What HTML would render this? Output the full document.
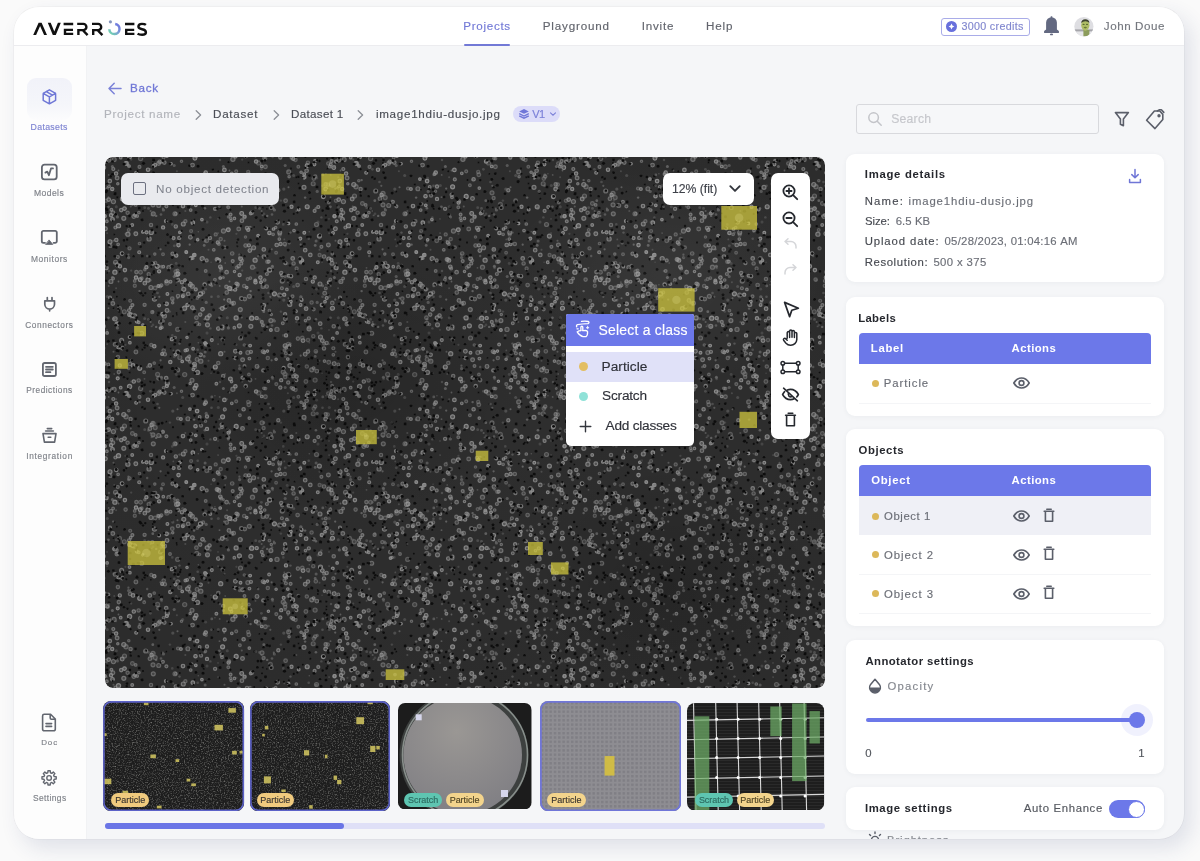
<!DOCTYPE html>
<html><head><meta charset="utf-8"><style>
html,body{margin:0;padding:0;}
body{width:1200px;height:861px;overflow:hidden;position:relative;background:#fafafa;font-family:"Liberation Sans",sans-serif;font-kerning:none;}
.t{position:absolute;white-space:nowrap;-webkit-text-stroke:0.15px currentColor;}
.card{position:absolute;left:14px;top:6.5px;width:1170px;height:832.5px;border-radius:25px;background:#f5f6f8;box-shadow:0 0 0 0.6px rgba(0,0,0,0.05),7px 9px 20px 1px rgba(40,60,115,0.12);overflow:hidden;}
#root{position:absolute;left:0;top:0;width:1200px;height:861px;filter:blur(0.35px);}
</style></head><body><div id="root">
<div class="card"></div>
<div style="position:absolute;left:14px;top:6.5px;width:1170px;height:39px;background:#fff;border-radius:25px 25px 0 0;"></div>
<div style="position:absolute;left:14px;top:45px;width:1170px;height:1px;background:#ececef;"></div>
<div style="position:absolute;left:14px;top:46px;width:72px;height:793px;background:#fdfdfd;border-radius:0 0 0 25px;"></div>
<div style="position:absolute;left:86px;top:46px;width:1px;height:793px;background:#f1f2f4;"></div>
<svg style="position:absolute;left:0;top:0" width="160" height="45" viewBox="0 0 160 45">
<defs><linearGradient id="lg" x1="0" y1="1" x2="1" y2="0"><stop offset="0" stop-color="#6fdcaa"/><stop offset="0.55" stop-color="#7d9ad8"/><stop offset="1" stop-color="#6b6ee0"/></linearGradient></defs>
<g fill="#111">
<path d="M33.2 35.1 L38.6 22.8 H41.6 L47 35.1 H44.1 L40.1 25.9 L36.1 35.1Z"/>
<path d="M47.8 22.8 H50.7 L54.3 31.6 L57.9 22.8 H60.8 L55.8 35.1 H52.8Z"/>
</g>
<g fill="none" stroke="#111" stroke-width="2.4" stroke-linejoin="miter">
<path d="M63.6 24 H73.2 M73 29.9 H65 V33.9 H73.2"/>
<path d="M77.2 23.9 H83.3 A3.1 3.1 0 0 1 83.3 30.1 H78.4 V35.1 M82.6 30 L87.6 35.1"/>
<path d="M92 23.9 H98.1 A3.1 3.1 0 0 1 98.1 30.1 H93.2 V35.1 M97.4 30 L102.4 35.1"/>
<path d="M125 24 H134.4 M134.2 29.9 H126.2 V33.9 H134.4"/>
<path d="M145.9 24.9 C145 24.1 143.6 23.9 141.9 23.9 C139.6 23.9 138.4 24.9 138.4 26.6 C138.4 28.5 140.2 28.9 142.1 29.2 C144.4 29.6 145.9 30.3 145.9 32.2 C145.9 33.9 144.4 34.8 142.1 34.8 C140.1 34.8 138.6 34.4 137.6 33.6"/>
</g>
<path d="M115.2 23.9 A5.1 5.1 0 1 1 109.3 29.2" fill="none" stroke="url(#lg)" stroke-width="2.5"/>
<circle cx="110.4" cy="21.8" r="1.6" fill="#8595bd"/>
</svg>
<div class="t" style="left:463.35px;top:18px;font-size:11.63px;line-height:15px;letter-spacing:0.681px;color:#7279d6;font-weight:400;">Projects</div>
<div style="position:absolute;left:464px;top:43.5px;width:46px;height:2px;background:#7279d6;border-radius:1px;"></div>
<div class="t" style="left:542.75px;top:18px;font-size:11.63px;line-height:15px;letter-spacing:0.831px;color:#62656d;font-weight:400;">Playground</div>
<div class="t" style="left:641.63px;top:18px;font-size:11.63px;line-height:15px;letter-spacing:0.819px;color:#62656d;font-weight:400;">Invite</div>
<div class="t" style="left:706.05px;top:18px;font-size:11.63px;line-height:15px;letter-spacing:0.843px;color:#62656d;font-weight:400;">Help</div>
<div style="position:absolute;left:940.5px;top:17.5px;width:87px;height:16px;border:1px solid #a9ace8;border-radius:3px;"></div>
<svg style="position:absolute;left:945px;top:20px" width="13" height="13" viewBox="0 0 13 13"><circle cx="6.5" cy="6.5" r="5.5" fill="#6870dc"/><path d="M6.5 3.6 Q6.9 6.1 9.4 6.5 Q6.9 6.9 6.5 9.4 Q6.1 6.9 3.6 6.5 Q6.1 6.1 6.5 3.6Z" fill="#fff"/></svg>
<div class="t" style="left:961.39px;top:20px;font-size:10.76px;line-height:13px;letter-spacing:0.309px;color:#8187cf;font-weight:400;">3000 credits</div>
<svg style="position:absolute;left:1043px;top:16px" width="17" height="21" viewBox="0 0 17 21"><path d="M3.1 13.6 V6.6 A5.4 5.4 0 0 1 13.9 6.6 V13.6 L15.9 15 V16.9 H1.1 V15Z" fill="#636981"/><ellipse cx="8.5" cy="18.4" rx="1.6" ry="0.9" fill="#636981"/><rect x="7.6" y="0.3" width="1.8" height="1.6" rx="0.5" fill="#636981"/></svg>
<svg style="position:absolute;left:1074.2px;top:16.7px" width="20" height="20" viewBox="0 0 20 20"><defs><clipPath id="av"><circle cx="9.9" cy="9.6" r="9.6"/></clipPath></defs><g clip-path="url(#av)"><rect width="20" height="20" fill="#dedee2"/><rect y="12.4" width="20" height="2.2" fill="#a5a5aa"/><rect y="14.6" width="20" height="6" fill="#e6e6e9"/><path d="M9.4 13 H15.4 V20 H9.4Z" fill="#8c9c5c"/><ellipse cx="11.3" cy="8.2" rx="4.1" ry="5.5" fill="#aebd66"/><path d="M7.2 6 Q7.6 2.2 11.3 2.3 Q15.2 2.4 15.4 6 Q13.8 4.2 11.3 4.3 Q8.8 4.3 7.2 6Z" fill="#3f4530"/><ellipse cx="9.6" cy="7.4" rx="1.1" ry="0.7" fill="#5b6a30"/><ellipse cx="13" cy="7.4" rx="1.1" ry="0.7" fill="#5b6a30"/><ellipse cx="11.3" cy="10.6" rx="1.6" ry="0.8" fill="#6a7a34"/></g></svg>
<div class="t" style="left:1103.82px;top:18px;font-size:11.63px;line-height:15px;letter-spacing:0.557px;color:#74777e;font-weight:400;">John Doue</div>
<div style="position:absolute;left:27px;top:78px;width:45px;height:42px;border-radius:9px;background:linear-gradient(#f1f2f9,#f5f6fa 65%,#fcfcfd);"></div>
<svg style="position:absolute;left:40px;top:87px" width="19" height="20" viewBox="0 0 19 20"><g fill="none" stroke="#6f77d6" stroke-width="1.5" stroke-linecap="round" stroke-linejoin="round"><path d="M9.4 2.8 L15.6 6.3 V13.3 L9.4 16.8 L3.2 13.3 V6.3Z M3.2 6.3 L9.4 9.8 L15.6 6.3 M9.4 9.8 V16.8 M6.3 4.6 L12.5 8.1"/></g></svg>
<div class="t" style="left:30.58px;top:122px;font-size:8.72px;line-height:11px;letter-spacing:0.331px;color:#7e84d2;font-weight:400;">Datasets</div>
<svg style="position:absolute;left:39px;top:162px" width="20" height="20" viewBox="0 0 20 20"><g fill="none" stroke="#62666f" stroke-width="1.8" stroke-linecap="round" stroke-linejoin="round"><rect x="2.9" y="2.6" width="14.8" height="14.8" rx="2.6"/><path d="M6.4 10.6 L8.3 9.6 L9.9 13.2 L12 6.4 H14"/></g></svg>
<div class="t" style="left:34.00px;top:188px;font-size:8.58px;line-height:11px;letter-spacing:0.414px;color:#7f8289;font-weight:400;">Models</div>
<svg style="position:absolute;left:39px;top:228px" width="20" height="19" viewBox="0 0 20 19"><g fill="none" stroke="#62666f" stroke-width="1.8" stroke-linecap="round" stroke-linejoin="round"><path d="M6 14.8 H4.4 A1.6 1.6 0 0 1 2.8 13.2 V4.4 A1.6 1.6 0 0 1 4.4 2.8 H16.2 A1.6 1.6 0 0 1 17.8 4.4 V13.2 A1.6 1.6 0 0 1 16.2 14.8 H14.6"/><path d="M10.3 12.2 L13.8 16.4 H6.8Z" fill="#62666f" stroke-width="0.8"/></g></svg>
<div class="t" style="left:31.01px;top:254px;font-size:8.43px;line-height:11px;letter-spacing:0.567px;color:#7f8289;font-weight:400;">Monitors</div>
<svg style="position:absolute;left:41px;top:295px" width="17" height="17" viewBox="0 0 17 17"><g fill="none" stroke="#62666f" stroke-width="1.7" stroke-linecap="round" stroke-linejoin="round"><path d="M6.3 2.5 V5.8 M11 2.5 V5.8 M3.8 5.8 H13.5 V9.3 A4.85 4.85 0 0 1 8.65 14.1 A4.85 4.85 0 0 1 3.8 9.3Z M8.65 14.1 V15.8"/></g></svg>
<div class="t" style="left:25.18px;top:321px;font-size:8.28px;line-height:10px;letter-spacing:0.617px;color:#7f8289;font-weight:400;">Connectors</div>
<svg style="position:absolute;left:40px;top:360px" width="19" height="19" viewBox="0 0 19 19"><g fill="none" stroke="#62666f" stroke-width="1.8" stroke-linecap="round" stroke-linejoin="round"><rect x="2.9" y="3" width="13" height="13" rx="1.8"/><path d="M6 6.8 H12.8 M6 9.5 H12.8 M6 12.2 H10.4"/></g></svg>
<div class="t" style="left:26.32px;top:386px;font-size:8.28px;line-height:10px;letter-spacing:0.490px;color:#7f8289;font-weight:400;">Predictions</div>
<svg style="position:absolute;left:40px;top:426px" width="19" height="19" viewBox="0 0 19 19"><g fill="none" stroke="#62666f" stroke-width="1.6" stroke-linecap="round" stroke-linejoin="round"><path d="M7.3 2.6 H11.7 M5.6 5 H13.4"/><path d="M3 7.6 H16 L14.6 16.1 H4.4Z"/><path d="M8.2 11.2 H10.8"/></g></svg>
<div class="t" style="left:26.24px;top:452px;font-size:8.28px;line-height:10px;letter-spacing:0.695px;color:#7f8289;font-weight:400;">Integration</div>
<svg style="position:absolute;left:40px;top:711px" width="19" height="22" viewBox="0 0 19 22"><g fill="none" stroke="#62666f" stroke-width="1.6" stroke-linecap="round" stroke-linejoin="round"><path d="M4.2 3.3 H10.6 L15.3 8 V18.2 A1.6 1.6 0 0 1 13.7 19.8 H4.2 A1.6 1.6 0 0 1 2.6 18.2 V4.9 A1.6 1.6 0 0 1 4.2 3.3Z M10.2 3.5 V7 A1.2 1.2 0 0 0 11.4 8.2 H15"/><path d="M6 12.6 H11.6 M6 15.4 H11.6"/></g></svg>
<div class="t" style="left:41.14px;top:738px;font-size:7.99px;line-height:10px;letter-spacing:0.925px;color:#7f8289;font-weight:400;">Doc</div>
<svg style="position:absolute;left:40px;top:769px" width="19" height="18" viewBox="0 0 19 18"><g fill="none" stroke="#62666f" stroke-width="1.4" stroke-linecap="round" stroke-linejoin="round"><path d="M14.24 7.62 L16.21 7.77 L16.21 10.03 L14.24 10.18 L13.64 11.63 L14.92 13.13 L13.33 14.72 L11.83 13.44 L10.38 14.04 L10.23 16.01 L7.97 16.01 L7.82 14.04 L6.37 13.44 L4.87 14.72 L3.28 13.13 L4.56 11.63 L3.96 10.18 L1.99 10.03 L1.99 7.77 L3.96 7.62 L4.56 6.17 L3.28 4.67 L4.87 3.08 L6.37 4.36 L7.82 3.76 L7.97 1.79 L10.23 1.79 L10.38 3.76 L11.83 4.36 L13.33 3.08 L14.92 4.67 L13.64 6.17Z"/><circle cx="9.1" cy="8.9" r="2.3"/></g></svg>
<div class="t" style="left:32.92px;top:793px;font-size:8.43px;line-height:11px;letter-spacing:0.404px;color:#7f8289;font-weight:400;">Settings</div>
<svg style="position:absolute;left:106px;top:81px" width="17" height="15" viewBox="0 0 17 15"><path d="M15 7.5 H3 M8.2 2.3 L3 7.5 L8.2 12.7" fill="none" stroke="#7b82d8" stroke-width="1.5" stroke-linecap="round" stroke-linejoin="round"/></svg>
<div class="t" style="left:130.05px;top:80px;font-size:11.63px;line-height:15px;letter-spacing:0.695px;color:#7077d6;font-weight:400;-webkit-text-stroke:0.3px #7077d6">Back</div>
<div class="t" style="left:104.05px;top:106px;font-size:11.63px;line-height:15px;letter-spacing:0.697px;color:#b3b5bb;font-weight:400;">Project name</div>
<svg style="position:absolute;left:193.5px;top:109px" width="9" height="12" viewBox="0 0 9 12"><path d="M2.2 1.8 L6.6 6 L2.2 10.2" fill="none" stroke="#8c8f96" stroke-width="1.3" stroke-linecap="round" stroke-linejoin="round"/></svg>
<svg style="position:absolute;left:271.5px;top:109px" width="9" height="12" viewBox="0 0 9 12"><path d="M2.2 1.8 L6.6 6 L2.2 10.2" fill="none" stroke="#8c8f96" stroke-width="1.3" stroke-linecap="round" stroke-linejoin="round"/></svg>
<svg style="position:absolute;left:356px;top:109px" width="9" height="12" viewBox="0 0 9 12"><path d="M2.2 1.8 L6.6 6 L2.2 10.2" fill="none" stroke="#8c8f96" stroke-width="1.3" stroke-linecap="round" stroke-linejoin="round"/></svg>
<div class="t" style="left:213.05px;top:106px;font-size:11.63px;line-height:15px;letter-spacing:0.711px;color:#4b4e56;font-weight:400;">Dataset</div>
<div class="t" style="left:291.05px;top:106px;font-size:11.63px;line-height:15px;letter-spacing:0.306px;color:#4b4e56;font-weight:400;">Dataset 1</div>
<div class="t" style="left:375.92px;top:106px;font-size:11.63px;line-height:15px;letter-spacing:0.715px;color:#4b4e56;font-weight:400;">image1hdiu-dusjo.jpg</div>
<div style="position:absolute;left:512.7px;top:106px;width:47.5px;height:16px;background:#dcdcf9;border-radius:8px;"></div>
<svg style="position:absolute;left:518px;top:108px" width="12" height="12" viewBox="0 0 12 12"><path d="M6 1 L10.8 3.4 L6 5.8 L1.2 3.4Z" fill="#7077d8"/><path d="M1.2 5.6 L6 8 L10.8 5.6 M1.2 7.8 L6 10.2 L10.8 7.8" fill="none" stroke="#7077d8" stroke-width="1.3"/></svg>
<div class="t" style="left:532.15px;top:107px;font-size:11.05px;line-height:14px;letter-spacing:0.000px;color:#7b80d8;font-weight:400;letter-spacing:-0.6px">V1</div>
<svg style="position:absolute;left:549px;top:110px" width="8" height="8" viewBox="0 0 8 8"><path d="M1.5 2.8 L4 5.2 L6.5 2.8" fill="none" stroke="#7b80d8" stroke-width="1.1" stroke-linecap="round"/></svg>
<svg style="position:absolute;left:105px;top:157px;border-radius:8px;" width="720" height="531" viewBox="0 0 720 531"><defs><pattern id="sp1" width="230" height="230" patternUnits="userSpaceOnUse"><circle cx="30.9" cy="194.9" r="1.9" stroke="#949494" stroke-opacity="0.54" stroke-width="1.15" fill="#949494" fill-opacity="0.24"/><circle cx="114.0" cy="103.4" r="1.8" stroke="#949494" stroke-opacity="0.83" stroke-width="1.15" fill="#949494" fill-opacity="0.38"/><circle cx="21.6" cy="6.5" r="2.0" stroke="#949494" stroke-opacity="0.64" stroke-width="1.15" fill="#949494" fill-opacity="0.29"/><circle cx="175.3" cy="0.5" r="1.6" stroke="#949494" stroke-opacity="0.80" stroke-width="1.15" fill="#949494" fill-opacity="0.36"/><circle cx="175.3" cy="230.5" r="1.6" stroke="#949494" stroke-opacity="0.80" stroke-width="1.15" fill="#949494" fill-opacity="0.36"/><circle cx="52.6" cy="217.4" r="2.0" stroke="#949494" stroke-opacity="0.42" stroke-width="1.15" fill="#949494" fill-opacity="0.19"/><circle cx="5.9" cy="124.5" r="2.0" stroke="#949494" stroke-opacity="0.61" stroke-width="1.15" fill="#949494" fill-opacity="0.27"/><circle cx="49.8" cy="97.1" r="1.2" stroke="#949494" stroke-opacity="0.52" stroke-width="1.15" fill="#949494" fill-opacity="0.23"/><circle cx="100.7" cy="114.0" r="1.4" stroke="#949494" stroke-opacity="0.53" stroke-width="1.15" fill="#949494" fill-opacity="0.24"/><circle cx="50.3" cy="105.7" r="1.5" stroke="#949494" stroke-opacity="0.41" stroke-width="1.15" fill="#949494" fill-opacity="0.19"/><circle cx="192.6" cy="128.0" r="1.8" stroke="#949494" stroke-opacity="0.50" stroke-width="1.15" fill="#949494" fill-opacity="0.23"/><circle cx="228.3" cy="197.8" r="1.3" stroke="#949494" stroke-opacity="0.58" stroke-width="1.15" fill="#949494" fill-opacity="0.26"/><circle cx="-1.7" cy="197.8" r="1.3" stroke="#949494" stroke-opacity="0.58" stroke-width="1.15" fill="#949494" fill-opacity="0.26"/><circle cx="165.9" cy="163.6" r="2.0" stroke="#949494" stroke-opacity="0.63" stroke-width="1.15" fill="#949494" fill-opacity="0.28"/><circle cx="190.9" cy="154.2" r="1.5" stroke="#949494" stroke-opacity="0.72" stroke-width="1.15" fill="#949494" fill-opacity="0.33"/><circle cx="203.0" cy="194.6" r="1.7" stroke="#949494" stroke-opacity="0.72" stroke-width="1.15" fill="#949494" fill-opacity="0.33"/><circle cx="7.9" cy="55.8" r="1.9" stroke="#949494" stroke-opacity="0.63" stroke-width="1.15" fill="#949494" fill-opacity="0.28"/><circle cx="39.8" cy="126.2" r="1.8" stroke="#949494" stroke-opacity="0.77" stroke-width="1.15" fill="#949494" fill-opacity="0.35"/><circle cx="86.2" cy="101.0" r="1.7" stroke="#949494" stroke-opacity="0.83" stroke-width="1.15" fill="#949494" fill-opacity="0.37"/><circle cx="119.8" cy="90.4" r="1.6" stroke="#949494" stroke-opacity="0.42" stroke-width="1.15" fill="#949494" fill-opacity="0.19"/><circle cx="10.0" cy="161.8" r="2.1" stroke="#949494" stroke-opacity="0.73" stroke-width="1.15" fill="#949494" fill-opacity="0.33"/><circle cx="90.5" cy="39.2" r="1.7" stroke="#949494" stroke-opacity="0.94" stroke-width="1.15" fill="#949494" fill-opacity="0.42"/><circle cx="177.2" cy="124.1" r="2.0" stroke="#949494" stroke-opacity="0.53" stroke-width="1.15" fill="#949494" fill-opacity="0.24"/><circle cx="118.2" cy="219.1" r="1.7" stroke="#949494" stroke-opacity="0.65" stroke-width="1.15" fill="#949494" fill-opacity="0.29"/><circle cx="61.9" cy="126.0" r="2.1" stroke="#949494" stroke-opacity="0.40" stroke-width="1.15" fill="#949494" fill-opacity="0.18"/><circle cx="180.2" cy="188.7" r="2.0" stroke="#949494" stroke-opacity="0.81" stroke-width="1.15" fill="#949494" fill-opacity="0.36"/><circle cx="186.1" cy="119.3" r="1.7" stroke="#949494" stroke-opacity="0.63" stroke-width="1.15" fill="#949494" fill-opacity="0.29"/><circle cx="12.9" cy="200.1" r="1.7" stroke="#949494" stroke-opacity="0.51" stroke-width="1.15" fill="#949494" fill-opacity="0.23"/><circle cx="116.1" cy="111.5" r="1.5" stroke="#949494" stroke-opacity="0.59" stroke-width="1.15" fill="#949494" fill-opacity="0.27"/><circle cx="123.9" cy="143.4" r="1.8" stroke="#949494" stroke-opacity="0.65" stroke-width="1.15" fill="#949494" fill-opacity="0.29"/><circle cx="6.4" cy="52.8" r="1.4" stroke="#949494" stroke-opacity="0.72" stroke-width="1.15" fill="#949494" fill-opacity="0.32"/><circle cx="198.0" cy="183.6" r="1.9" stroke="#949494" stroke-opacity="0.85" stroke-width="1.15" fill="#949494" fill-opacity="0.38"/><circle cx="58.7" cy="193.6" r="1.8" stroke="#949494" stroke-opacity="0.45" stroke-width="1.15" fill="#949494" fill-opacity="0.20"/><circle cx="3.8" cy="3.3" r="1.9" stroke="#949494" stroke-opacity="0.54" stroke-width="1.15" fill="#949494" fill-opacity="0.24"/><circle cx="3.8" cy="233.3" r="1.9" stroke="#949494" stroke-opacity="0.54" stroke-width="1.15" fill="#949494" fill-opacity="0.24"/><circle cx="233.8" cy="3.3" r="1.9" stroke="#949494" stroke-opacity="0.54" stroke-width="1.15" fill="#949494" fill-opacity="0.24"/><circle cx="233.8" cy="233.3" r="1.9" stroke="#949494" stroke-opacity="0.54" stroke-width="1.15" fill="#949494" fill-opacity="0.24"/><circle cx="25.2" cy="143.7" r="1.5" stroke="#949494" stroke-opacity="0.44" stroke-width="1.15" fill="#949494" fill-opacity="0.20"/><circle cx="36.7" cy="121.3" r="1.4" stroke="#949494" stroke-opacity="0.55" stroke-width="1.15" fill="#949494" fill-opacity="0.25"/><circle cx="163.7" cy="104.6" r="1.5" stroke="#949494" stroke-opacity="0.66" stroke-width="1.15" fill="#949494" fill-opacity="0.30"/><circle cx="5.4" cy="88.9" r="1.6" stroke="#949494" stroke-opacity="0.50" stroke-width="1.15" fill="#949494" fill-opacity="0.23"/><circle cx="25.0" cy="207.0" r="1.7" stroke="#949494" stroke-opacity="0.52" stroke-width="1.15" fill="#949494" fill-opacity="0.23"/><circle cx="139.3" cy="187.9" r="1.2" stroke="#949494" stroke-opacity="0.41" stroke-width="1.15" fill="#949494" fill-opacity="0.18"/><circle cx="33.7" cy="165.3" r="1.3" stroke="#949494" stroke-opacity="0.79" stroke-width="1.15" fill="#949494" fill-opacity="0.35"/><circle cx="156.0" cy="125.3" r="1.4" stroke="#949494" stroke-opacity="0.94" stroke-width="1.15" fill="#949494" fill-opacity="0.42"/><circle cx="183.5" cy="118.8" r="1.4" stroke="#949494" stroke-opacity="0.76" stroke-width="1.15" fill="#949494" fill-opacity="0.34"/><circle cx="90.8" cy="132.4" r="1.5" stroke="#949494" stroke-opacity="0.75" stroke-width="1.15" fill="#949494" fill-opacity="0.34"/><circle cx="13.5" cy="68.7" r="2.1" stroke="#949494" stroke-opacity="0.88" stroke-width="1.15" fill="#949494" fill-opacity="0.40"/><circle cx="70.5" cy="197.5" r="1.5" stroke="#949494" stroke-opacity="0.92" stroke-width="1.15" fill="#949494" fill-opacity="0.41"/><circle cx="171.1" cy="95.7" r="1.4" stroke="#949494" stroke-opacity="0.40" stroke-width="1.15" fill="#949494" fill-opacity="0.18"/><circle cx="202.1" cy="8.7" r="1.9" stroke="#949494" stroke-opacity="0.93" stroke-width="1.15" fill="#949494" fill-opacity="0.42"/><circle cx="131.2" cy="39.4" r="2.0" stroke="#949494" stroke-opacity="0.94" stroke-width="1.15" fill="#949494" fill-opacity="0.42"/><circle cx="161.9" cy="117.0" r="1.5" stroke="#949494" stroke-opacity="0.59" stroke-width="1.15" fill="#949494" fill-opacity="0.27"/><circle cx="47.3" cy="155.1" r="1.6" stroke="#949494" stroke-opacity="0.51" stroke-width="1.15" fill="#949494" fill-opacity="0.23"/><circle cx="24.0" cy="153.2" r="1.5" stroke="#949494" stroke-opacity="0.67" stroke-width="1.15" fill="#949494" fill-opacity="0.30"/><circle cx="74.8" cy="200.5" r="2.0" stroke="#949494" stroke-opacity="0.41" stroke-width="1.15" fill="#949494" fill-opacity="0.18"/><circle cx="46.2" cy="75.4" r="2.1" stroke="#949494" stroke-opacity="0.83" stroke-width="1.15" fill="#949494" fill-opacity="0.37"/><circle cx="78.0" cy="49.0" r="1.8" stroke="#949494" stroke-opacity="0.86" stroke-width="1.15" fill="#949494" fill-opacity="0.39"/><circle cx="214.4" cy="79.1" r="2.0" stroke="#949494" stroke-opacity="0.78" stroke-width="1.15" fill="#949494" fill-opacity="0.35"/><circle cx="111.4" cy="226.7" r="1.4" stroke="#949494" stroke-opacity="0.80" stroke-width="1.15" fill="#949494" fill-opacity="0.36"/><circle cx="111.4" cy="-3.3" r="1.4" stroke="#949494" stroke-opacity="0.80" stroke-width="1.15" fill="#949494" fill-opacity="0.36"/><circle cx="19.5" cy="39.0" r="2.0" stroke="#949494" stroke-opacity="0.52" stroke-width="1.15" fill="#949494" fill-opacity="0.23"/><circle cx="174.6" cy="138.0" r="2.0" stroke="#949494" stroke-opacity="0.60" stroke-width="1.15" fill="#949494" fill-opacity="0.27"/><circle cx="78.3" cy="67.0" r="2.0" stroke="#949494" stroke-opacity="0.73" stroke-width="1.15" fill="#949494" fill-opacity="0.33"/><circle cx="219.5" cy="204.1" r="1.3" stroke="#949494" stroke-opacity="0.70" stroke-width="1.15" fill="#949494" fill-opacity="0.32"/><circle cx="24.0" cy="9.0" r="1.3" stroke="#949494" stroke-opacity="0.88" stroke-width="1.15" fill="#949494" fill-opacity="0.39"/><circle cx="181.3" cy="190.6" r="1.5" stroke="#949494" stroke-opacity="0.74" stroke-width="1.15" fill="#949494" fill-opacity="0.33"/><circle cx="179.8" cy="86.9" r="1.7" stroke="#949494" stroke-opacity="0.52" stroke-width="1.15" fill="#949494" fill-opacity="0.24"/><circle cx="18.8" cy="61.3" r="2.0" stroke="#949494" stroke-opacity="0.71" stroke-width="1.15" fill="#949494" fill-opacity="0.32"/><circle cx="212.8" cy="105.3" r="1.4" stroke="#949494" stroke-opacity="0.83" stroke-width="1.15" fill="#949494" fill-opacity="0.37"/><circle cx="190.4" cy="2.8" r="1.8" stroke="#949494" stroke-opacity="0.45" stroke-width="1.15" fill="#949494" fill-opacity="0.20"/><circle cx="190.4" cy="232.8" r="1.8" stroke="#949494" stroke-opacity="0.45" stroke-width="1.15" fill="#949494" fill-opacity="0.20"/><circle cx="26.5" cy="203.6" r="1.2" stroke="#949494" stroke-opacity="0.53" stroke-width="1.15" fill="#949494" fill-opacity="0.24"/><circle cx="227.3" cy="96.8" r="1.3" stroke="#949494" stroke-opacity="0.49" stroke-width="1.15" fill="#949494" fill-opacity="0.22"/><circle cx="-2.7" cy="96.8" r="1.3" stroke="#949494" stroke-opacity="0.49" stroke-width="1.15" fill="#949494" fill-opacity="0.22"/><circle cx="55.5" cy="171.1" r="1.3" stroke="#949494" stroke-opacity="0.90" stroke-width="1.15" fill="#949494" fill-opacity="0.41"/><circle cx="87.0" cy="223.2" r="2.0" stroke="#949494" stroke-opacity="0.56" stroke-width="1.15" fill="#949494" fill-opacity="0.25"/><circle cx="58.3" cy="109.7" r="1.3" stroke="#949494" stroke-opacity="0.76" stroke-width="1.15" fill="#949494" fill-opacity="0.34"/><circle cx="9.1" cy="2.4" r="2.1" stroke="#949494" stroke-opacity="0.56" stroke-width="1.15" fill="#949494" fill-opacity="0.25"/><circle cx="9.1" cy="232.4" r="2.1" stroke="#949494" stroke-opacity="0.56" stroke-width="1.15" fill="#949494" fill-opacity="0.25"/><circle cx="137.2" cy="103.5" r="1.5" stroke="#949494" stroke-opacity="0.43" stroke-width="1.15" fill="#949494" fill-opacity="0.20"/><circle cx="210.1" cy="223.1" r="2.1" stroke="#949494" stroke-opacity="0.46" stroke-width="1.15" fill="#949494" fill-opacity="0.21"/><circle cx="49.5" cy="142.1" r="2.1" stroke="#949494" stroke-opacity="0.70" stroke-width="1.15" fill="#949494" fill-opacity="0.31"/><circle cx="158.3" cy="152.2" r="1.4" stroke="#949494" stroke-opacity="0.70" stroke-width="1.15" fill="#949494" fill-opacity="0.31"/><circle cx="70.7" cy="56.7" r="1.3" stroke="#949494" stroke-opacity="0.55" stroke-width="1.15" fill="#949494" fill-opacity="0.25"/><circle cx="226.2" cy="103.0" r="1.8" stroke="#949494" stroke-opacity="0.75" stroke-width="1.15" fill="#949494" fill-opacity="0.34"/><circle cx="216.4" cy="89.8" r="1.5" stroke="#949494" stroke-opacity="0.58" stroke-width="1.15" fill="#949494" fill-opacity="0.26"/><circle cx="72.8" cy="194.8" r="2.0" stroke="#949494" stroke-opacity="0.57" stroke-width="1.15" fill="#949494" fill-opacity="0.25"/><circle cx="76.9" cy="125.2" r="1.7" stroke="#949494" stroke-opacity="0.73" stroke-width="1.15" fill="#949494" fill-opacity="0.33"/><circle cx="56.4" cy="4.7" r="1.4" stroke="#949494" stroke-opacity="0.44" stroke-width="1.15" fill="#949494" fill-opacity="0.20"/><circle cx="126.8" cy="16.3" r="1.3" stroke="#949494" stroke-opacity="0.75" stroke-width="1.15" fill="#949494" fill-opacity="0.34"/><circle cx="66.9" cy="182.2" r="1.6" stroke="#949494" stroke-opacity="0.87" stroke-width="1.15" fill="#949494" fill-opacity="0.39"/><circle cx="35.5" cy="115.3" r="1.9" stroke="#949494" stroke-opacity="0.44" stroke-width="1.15" fill="#949494" fill-opacity="0.20"/><circle cx="218.3" cy="39.8" r="1.9" stroke="#949494" stroke-opacity="0.94" stroke-width="1.15" fill="#949494" fill-opacity="0.42"/><circle cx="189.0" cy="73.6" r="1.3" stroke="#949494" stroke-opacity="0.68" stroke-width="1.15" fill="#949494" fill-opacity="0.31"/><circle cx="211.5" cy="67.5" r="2.0" stroke="#949494" stroke-opacity="0.48" stroke-width="1.15" fill="#949494" fill-opacity="0.22"/><circle cx="209.4" cy="7.3" r="1.5" stroke="#949494" stroke-opacity="0.90" stroke-width="1.15" fill="#949494" fill-opacity="0.40"/><circle cx="184.9" cy="208.6" r="2.0" stroke="#949494" stroke-opacity="0.81" stroke-width="1.15" fill="#949494" fill-opacity="0.36"/><circle cx="158.6" cy="41.0" r="1.6" stroke="#949494" stroke-opacity="0.49" stroke-width="1.15" fill="#949494" fill-opacity="0.22"/><circle cx="164.4" cy="153.6" r="1.4" stroke="#949494" stroke-opacity="0.44" stroke-width="1.15" fill="#949494" fill-opacity="0.20"/><circle cx="221.6" cy="185.9" r="1.7" stroke="#949494" stroke-opacity="0.70" stroke-width="1.15" fill="#949494" fill-opacity="0.31"/><circle cx="195.8" cy="104.3" r="1.6" stroke="#949494" stroke-opacity="0.59" stroke-width="1.15" fill="#949494" fill-opacity="0.26"/><circle cx="59.3" cy="5.6" r="1.8" stroke="#949494" stroke-opacity="0.63" stroke-width="1.15" fill="#949494" fill-opacity="0.28"/><circle cx="131.2" cy="14.3" r="1.5" stroke="#949494" stroke-opacity="0.48" stroke-width="1.15" fill="#949494" fill-opacity="0.21"/><circle cx="28.8" cy="59.6" r="1.9" stroke="#949494" stroke-opacity="0.62" stroke-width="1.15" fill="#949494" fill-opacity="0.28"/><circle cx="92.2" cy="140.9" r="1.4" stroke="#949494" stroke-opacity="0.40" stroke-width="1.15" fill="#949494" fill-opacity="0.18"/><circle cx="121.6" cy="115.2" r="1.8" stroke="#949494" stroke-opacity="0.64" stroke-width="1.15" fill="#949494" fill-opacity="0.29"/><circle cx="157.9" cy="168.2" r="1.4" stroke="#949494" stroke-opacity="0.67" stroke-width="1.15" fill="#949494" fill-opacity="0.30"/><circle cx="110.1" cy="51.8" r="1.6" stroke="#949494" stroke-opacity="0.71" stroke-width="1.15" fill="#949494" fill-opacity="0.32"/><circle cx="208.6" cy="211.1" r="1.4" stroke="#949494" stroke-opacity="0.76" stroke-width="1.15" fill="#949494" fill-opacity="0.34"/><circle cx="11.1" cy="16.5" r="1.7" stroke="#949494" stroke-opacity="0.88" stroke-width="1.15" fill="#949494" fill-opacity="0.40"/><circle cx="36.7" cy="176.2" r="2.0" stroke="#949494" stroke-opacity="0.57" stroke-width="1.15" fill="#949494" fill-opacity="0.26"/><circle cx="159.3" cy="195.3" r="1.5" stroke="#949494" stroke-opacity="0.79" stroke-width="1.15" fill="#949494" fill-opacity="0.35"/><circle cx="169.4" cy="136.8" r="2.0" stroke="#949494" stroke-opacity="0.89" stroke-width="1.15" fill="#949494" fill-opacity="0.40"/><circle cx="220.8" cy="131.4" r="1.4" stroke="#949494" stroke-opacity="0.54" stroke-width="1.15" fill="#949494" fill-opacity="0.24"/><circle cx="50.1" cy="131.0" r="1.9" stroke="#949494" stroke-opacity="0.43" stroke-width="1.15" fill="#949494" fill-opacity="0.19"/><circle cx="156.8" cy="164.9" r="1.5" stroke="#949494" stroke-opacity="0.68" stroke-width="1.15" fill="#949494" fill-opacity="0.31"/><circle cx="37.9" cy="167.9" r="1.2" stroke="#949494" stroke-opacity="0.94" stroke-width="1.15" fill="#949494" fill-opacity="0.42"/><circle cx="185.8" cy="144.5" r="1.4" stroke="#949494" stroke-opacity="0.90" stroke-width="1.15" fill="#949494" fill-opacity="0.41"/><circle cx="220.7" cy="32.0" r="1.9" stroke="#949494" stroke-opacity="0.86" stroke-width="1.15" fill="#949494" fill-opacity="0.39"/><circle cx="151.7" cy="161.1" r="1.6" stroke="#949494" stroke-opacity="0.91" stroke-width="1.15" fill="#949494" fill-opacity="0.41"/><circle cx="223.4" cy="87.9" r="1.9" stroke="#949494" stroke-opacity="0.64" stroke-width="1.15" fill="#949494" fill-opacity="0.29"/><circle cx="37.9" cy="74.9" r="1.3" stroke="#949494" stroke-opacity="0.90" stroke-width="1.15" fill="#949494" fill-opacity="0.40"/><circle cx="220.7" cy="27.4" r="1.7" stroke="#949494" stroke-opacity="0.62" stroke-width="1.15" fill="#949494" fill-opacity="0.28"/><circle cx="27.2" cy="68.0" r="1.4" stroke="#949494" stroke-opacity="0.81" stroke-width="1.15" fill="#949494" fill-opacity="0.37"/><circle cx="0.9" cy="43.7" r="1.6" stroke="#949494" stroke-opacity="0.41" stroke-width="1.15" fill="#949494" fill-opacity="0.19"/><circle cx="230.9" cy="43.7" r="1.6" stroke="#949494" stroke-opacity="0.41" stroke-width="1.15" fill="#949494" fill-opacity="0.19"/><circle cx="144.3" cy="139.3" r="2.0" stroke="#949494" stroke-opacity="0.51" stroke-width="1.15" fill="#949494" fill-opacity="0.23"/><circle cx="65.5" cy="124.7" r="1.4" stroke="#949494" stroke-opacity="0.72" stroke-width="1.15" fill="#949494" fill-opacity="0.32"/><circle cx="57.7" cy="157.2" r="1.9" stroke="#949494" stroke-opacity="0.84" stroke-width="1.15" fill="#949494" fill-opacity="0.38"/><circle cx="223.9" cy="125.4" r="1.6" stroke="#949494" stroke-opacity="0.87" stroke-width="1.15" fill="#949494" fill-opacity="0.39"/><circle cx="176.9" cy="131.2" r="1.5" stroke="#949494" stroke-opacity="0.56" stroke-width="1.15" fill="#949494" fill-opacity="0.25"/><circle cx="24.9" cy="185.7" r="1.3" stroke="#949494" stroke-opacity="0.81" stroke-width="1.15" fill="#949494" fill-opacity="0.36"/><circle cx="125.4" cy="221.9" r="1.9" stroke="#949494" stroke-opacity="0.94" stroke-width="1.15" fill="#949494" fill-opacity="0.42"/><circle cx="31.4" cy="115.1" r="1.7" stroke="#949494" stroke-opacity="0.57" stroke-width="1.15" fill="#949494" fill-opacity="0.26"/><circle cx="115.7" cy="82.1" r="1.7" stroke="#949494" stroke-opacity="0.40" stroke-width="1.15" fill="#949494" fill-opacity="0.18"/><circle cx="101.7" cy="103.4" r="1.5" stroke="#949494" stroke-opacity="0.62" stroke-width="1.15" fill="#949494" fill-opacity="0.28"/><circle cx="180.1" cy="157.2" r="1.6" stroke="#949494" stroke-opacity="0.76" stroke-width="1.15" fill="#949494" fill-opacity="0.34"/><circle cx="86.8" cy="46.9" r="1.2" stroke="#949494" stroke-opacity="0.55" stroke-width="1.15" fill="#949494" fill-opacity="0.25"/><circle cx="137.6" cy="202.8" r="1.9" stroke="#949494" stroke-opacity="0.68" stroke-width="1.15" fill="#949494" fill-opacity="0.31"/><circle cx="227.0" cy="106.2" r="2.0" stroke="#949494" stroke-opacity="0.62" stroke-width="1.15" fill="#949494" fill-opacity="0.28"/><circle cx="-3.0" cy="106.2" r="2.0" stroke="#949494" stroke-opacity="0.62" stroke-width="1.15" fill="#949494" fill-opacity="0.28"/><circle cx="171.3" cy="227.1" r="1.5" stroke="#949494" stroke-opacity="0.49" stroke-width="1.15" fill="#949494" fill-opacity="0.22"/><circle cx="171.3" cy="-2.9" r="1.5" stroke="#949494" stroke-opacity="0.49" stroke-width="1.15" fill="#949494" fill-opacity="0.22"/><circle cx="142.6" cy="122.1" r="1.5" stroke="#949494" stroke-opacity="0.40" stroke-width="1.15" fill="#949494" fill-opacity="0.18"/><circle cx="89.5" cy="97.9" r="1.6" stroke="#949494" stroke-opacity="0.87" stroke-width="1.15" fill="#949494" fill-opacity="0.39"/><circle cx="134.4" cy="168.8" r="2.0" stroke="#949494" stroke-opacity="0.81" stroke-width="1.15" fill="#949494" fill-opacity="0.37"/><circle cx="113.3" cy="171.5" r="1.8" stroke="#949494" stroke-opacity="0.76" stroke-width="1.15" fill="#949494" fill-opacity="0.34"/><circle cx="144.8" cy="93.6" r="1.8" stroke="#949494" stroke-opacity="0.75" stroke-width="1.15" fill="#949494" fill-opacity="0.34"/><circle cx="215.5" cy="180.0" r="2.0" stroke="#949494" stroke-opacity="0.82" stroke-width="1.15" fill="#949494" fill-opacity="0.37"/><circle cx="187.5" cy="139.3" r="1.5" stroke="#949494" stroke-opacity="0.55" stroke-width="1.15" fill="#949494" fill-opacity="0.25"/><circle cx="162.8" cy="201.0" r="1.7" stroke="#949494" stroke-opacity="0.48" stroke-width="1.15" fill="#949494" fill-opacity="0.22"/><circle cx="191.6" cy="111.4" r="1.6" stroke="#949494" stroke-opacity="0.42" stroke-width="1.15" fill="#949494" fill-opacity="0.19"/><circle cx="117.4" cy="171.3" r="1.6" stroke="#949494" stroke-opacity="0.60" stroke-width="1.15" fill="#949494" fill-opacity="0.27"/><circle cx="151.1" cy="4.5" r="1.7" stroke="#949494" stroke-opacity="0.92" stroke-width="1.15" fill="#949494" fill-opacity="0.41"/><circle cx="158.8" cy="92.4" r="1.8" stroke="#949494" stroke-opacity="0.73" stroke-width="1.15" fill="#949494" fill-opacity="0.33"/><circle cx="48.0" cy="47.8" r="2.0" stroke="#949494" stroke-opacity="0.55" stroke-width="1.15" fill="#949494" fill-opacity="0.25"/><circle cx="17.2" cy="191.1" r="1.7" stroke="#949494" stroke-opacity="0.60" stroke-width="1.15" fill="#949494" fill-opacity="0.27"/><circle cx="117.6" cy="169.4" r="1.4" stroke="#949494" stroke-opacity="0.76" stroke-width="1.15" fill="#949494" fill-opacity="0.34"/><circle cx="164.1" cy="187.5" r="1.4" stroke="#949494" stroke-opacity="0.74" stroke-width="1.15" fill="#949494" fill-opacity="0.33"/><circle cx="53.4" cy="129.0" r="1.4" stroke="#949494" stroke-opacity="0.83" stroke-width="1.15" fill="#949494" fill-opacity="0.38"/><circle cx="199.3" cy="75.8" r="1.4" stroke="#949494" stroke-opacity="0.93" stroke-width="1.15" fill="#949494" fill-opacity="0.42"/><circle cx="162.5" cy="194.1" r="1.2" stroke="#949494" stroke-opacity="0.89" stroke-width="1.15" fill="#949494" fill-opacity="0.40"/><circle cx="143.2" cy="72.8" r="1.6" stroke="#949494" stroke-opacity="0.82" stroke-width="1.15" fill="#949494" fill-opacity="0.37"/><circle cx="180.6" cy="43.7" r="1.8" stroke="#949494" stroke-opacity="0.49" stroke-width="1.15" fill="#949494" fill-opacity="0.22"/><circle cx="223.8" cy="102.0" r="2.0" stroke="#949494" stroke-opacity="0.80" stroke-width="1.15" fill="#949494" fill-opacity="0.36"/><circle cx="139.4" cy="60.3" r="1.7" stroke="#949494" stroke-opacity="0.48" stroke-width="1.15" fill="#949494" fill-opacity="0.21"/><circle cx="31.8" cy="164.6" r="1.5" stroke="#949494" stroke-opacity="0.81" stroke-width="1.15" fill="#949494" fill-opacity="0.37"/><circle cx="55.3" cy="165.2" r="1.8" stroke="#949494" stroke-opacity="0.57" stroke-width="1.15" fill="#949494" fill-opacity="0.26"/><circle cx="24.5" cy="91.3" r="1.6" stroke="#949494" stroke-opacity="0.45" stroke-width="1.15" fill="#949494" fill-opacity="0.20"/><circle cx="43.0" cy="12.7" r="1.7" stroke="#949494" stroke-opacity="0.89" stroke-width="1.15" fill="#949494" fill-opacity="0.40"/><circle cx="49.8" cy="8.0" r="1.8" stroke="#949494" stroke-opacity="0.85" stroke-width="1.15" fill="#949494" fill-opacity="0.38"/><circle cx="221.7" cy="141.0" r="1.5" stroke="#949494" stroke-opacity="0.86" stroke-width="1.15" fill="#949494" fill-opacity="0.39"/><circle cx="27.2" cy="159.3" r="1.3" stroke="#949494" stroke-opacity="0.62" stroke-width="1.15" fill="#949494" fill-opacity="0.28"/><circle cx="113.9" cy="86.9" r="1.4" stroke="#949494" stroke-opacity="0.53" stroke-width="1.15" fill="#949494" fill-opacity="0.24"/><circle cx="188.6" cy="106.4" r="1.7" stroke="#949494" stroke-opacity="0.52" stroke-width="1.15" fill="#949494" fill-opacity="0.23"/><circle cx="164.4" cy="75.9" r="1.7" stroke="#949494" stroke-opacity="0.90" stroke-width="1.15" fill="#949494" fill-opacity="0.41"/><circle cx="228.7" cy="10.6" r="1.9" stroke="#949494" stroke-opacity="0.87" stroke-width="1.15" fill="#949494" fill-opacity="0.39"/><circle cx="-1.3" cy="10.6" r="1.9" stroke="#949494" stroke-opacity="0.87" stroke-width="1.15" fill="#949494" fill-opacity="0.39"/><circle cx="73.5" cy="88.1" r="1.7" stroke="#949494" stroke-opacity="0.91" stroke-width="1.15" fill="#949494" fill-opacity="0.41"/><circle cx="92.0" cy="202.4" r="1.9" stroke="#949494" stroke-opacity="0.48" stroke-width="1.15" fill="#949494" fill-opacity="0.22"/><circle cx="210.1" cy="3.5" r="1.3" stroke="#949494" stroke-opacity="0.77" stroke-width="1.15" fill="#949494" fill-opacity="0.34"/><circle cx="13.1" cy="87.3" r="1.3" stroke="#949494" stroke-opacity="0.65" stroke-width="1.15" fill="#949494" fill-opacity="0.29"/><circle cx="193.2" cy="208.4" r="1.2" stroke="#949494" stroke-opacity="0.43" stroke-width="1.15" fill="#949494" fill-opacity="0.20"/><circle cx="193.3" cy="9.8" r="1.4" stroke="#949494" stroke-opacity="0.46" stroke-width="1.15" fill="#949494" fill-opacity="0.21"/><circle cx="20.9" cy="6.4" r="1.8" stroke="#949494" stroke-opacity="0.81" stroke-width="1.15" fill="#949494" fill-opacity="0.36"/><circle cx="158.0" cy="194.5" r="1.8" stroke="#949494" stroke-opacity="0.61" stroke-width="1.15" fill="#949494" fill-opacity="0.28"/><circle cx="145.1" cy="223.0" r="1.8" stroke="#949494" stroke-opacity="0.53" stroke-width="1.15" fill="#949494" fill-opacity="0.24"/><circle cx="13.8" cy="215.1" r="1.7" stroke="#949494" stroke-opacity="0.59" stroke-width="1.15" fill="#949494" fill-opacity="0.27"/><circle cx="139.2" cy="128.9" r="1.7" stroke="#949494" stroke-opacity="0.43" stroke-width="1.15" fill="#949494" fill-opacity="0.20"/><circle cx="81.2" cy="94.9" r="1.4" stroke="#949494" stroke-opacity="0.88" stroke-width="1.15" fill="#949494" fill-opacity="0.40"/><circle cx="97.5" cy="152.3" r="1.8" stroke="#949494" stroke-opacity="0.81" stroke-width="1.15" fill="#949494" fill-opacity="0.36"/><circle cx="165.9" cy="173.0" r="1.4" stroke="#949494" stroke-opacity="0.94" stroke-width="1.15" fill="#949494" fill-opacity="0.42"/><circle cx="34.7" cy="211.3" r="2.0" stroke="#949494" stroke-opacity="0.87" stroke-width="1.15" fill="#949494" fill-opacity="0.39"/><circle cx="12.1" cy="21.0" r="1.9" stroke="#949494" stroke-opacity="0.66" stroke-width="1.15" fill="#949494" fill-opacity="0.30"/><circle cx="85.2" cy="226.5" r="1.2" stroke="#949494" stroke-opacity="0.69" stroke-width="1.15" fill="#949494" fill-opacity="0.31"/><circle cx="102.0" cy="29.5" r="1.6" stroke="#949494" stroke-opacity="0.79" stroke-width="1.15" fill="#949494" fill-opacity="0.36"/><circle cx="202.9" cy="5.7" r="1.7" stroke="#949494" stroke-opacity="0.45" stroke-width="1.15" fill="#949494" fill-opacity="0.20"/><circle cx="184.1" cy="19.7" r="1.2" stroke="#949494" stroke-opacity="0.61" stroke-width="1.15" fill="#949494" fill-opacity="0.28"/><circle cx="168.5" cy="72.0" r="1.3" stroke="#949494" stroke-opacity="0.84" stroke-width="1.15" fill="#949494" fill-opacity="0.38"/><circle cx="185.6" cy="196.8" r="1.5" stroke="#949494" stroke-opacity="0.63" stroke-width="1.15" fill="#949494" fill-opacity="0.29"/><circle cx="56.4" cy="128.2" r="1.5" stroke="#949494" stroke-opacity="0.59" stroke-width="1.15" fill="#949494" fill-opacity="0.26"/><circle cx="180.2" cy="219.9" r="1.7" stroke="#949494" stroke-opacity="0.46" stroke-width="1.15" fill="#949494" fill-opacity="0.21"/><circle cx="150.1" cy="103.2" r="2.1" stroke="#949494" stroke-opacity="0.80" stroke-width="1.15" fill="#949494" fill-opacity="0.36"/><circle cx="192.0" cy="161.3" r="1.7" stroke="#949494" stroke-opacity="0.89" stroke-width="1.15" fill="#949494" fill-opacity="0.40"/><circle cx="191.3" cy="67.0" r="1.3" stroke="#949494" stroke-opacity="0.60" stroke-width="1.15" fill="#949494" fill-opacity="0.27"/><circle cx="119.8" cy="22.4" r="1.5" stroke="#949494" stroke-opacity="0.72" stroke-width="1.15" fill="#949494" fill-opacity="0.32"/><circle cx="10.0" cy="187.4" r="1.8" stroke="#949494" stroke-opacity="0.57" stroke-width="1.15" fill="#949494" fill-opacity="0.26"/><circle cx="68.6" cy="81.1" r="1.5" stroke="#949494" stroke-opacity="0.81" stroke-width="1.15" fill="#949494" fill-opacity="0.37"/><circle cx="115.2" cy="121.0" r="1.3" stroke="#949494" stroke-opacity="0.90" stroke-width="1.15" fill="#949494" fill-opacity="0.41"/><circle cx="74.9" cy="75.3" r="1.3" stroke="#949494" stroke-opacity="0.94" stroke-width="1.15" fill="#949494" fill-opacity="0.42"/><circle cx="110.3" cy="210.0" r="2.0" stroke="#949494" stroke-opacity="0.93" stroke-width="1.15" fill="#949494" fill-opacity="0.42"/><circle cx="187.6" cy="212.9" r="2.0" stroke="#949494" stroke-opacity="0.84" stroke-width="1.15" fill="#949494" fill-opacity="0.38"/><circle cx="31.0" cy="120.5" r="1.7" stroke="#949494" stroke-opacity="0.95" stroke-width="1.15" fill="#949494" fill-opacity="0.43"/><circle cx="180.3" cy="161.7" r="1.9" stroke="#949494" stroke-opacity="0.60" stroke-width="1.15" fill="#949494" fill-opacity="0.27"/><circle cx="216.7" cy="148.0" r="1.6" stroke="#949494" stroke-opacity="0.66" stroke-width="1.15" fill="#949494" fill-opacity="0.29"/><circle cx="225.3" cy="122.4" r="1.4" stroke="#949494" stroke-opacity="0.48" stroke-width="1.15" fill="#949494" fill-opacity="0.22"/><circle cx="158.1" cy="129.4" r="2.0" stroke="#949494" stroke-opacity="0.50" stroke-width="1.15" fill="#949494" fill-opacity="0.23"/><circle cx="94.6" cy="167.4" r="1.2" stroke="#949494" stroke-opacity="0.45" stroke-width="1.15" fill="#949494" fill-opacity="0.20"/><circle cx="125.5" cy="61.1" r="1.3" stroke="#949494" stroke-opacity="0.54" stroke-width="1.15" fill="#949494" fill-opacity="0.24"/><circle cx="145.4" cy="121.1" r="1.3" stroke="#949494" stroke-opacity="0.44" stroke-width="1.15" fill="#949494" fill-opacity="0.20"/><circle cx="195.6" cy="147.9" r="1.4" stroke="#949494" stroke-opacity="0.87" stroke-width="1.15" fill="#949494" fill-opacity="0.39"/><circle cx="5.0" cy="84.7" r="2.0" stroke="#949494" stroke-opacity="0.79" stroke-width="1.15" fill="#949494" fill-opacity="0.36"/><circle cx="65.3" cy="205.0" r="1.7" stroke="#949494" stroke-opacity="0.88" stroke-width="1.15" fill="#949494" fill-opacity="0.39"/><circle cx="205.3" cy="97.9" r="1.8" stroke="#949494" stroke-opacity="0.70" stroke-width="1.15" fill="#949494" fill-opacity="0.31"/><circle cx="217.3" cy="183.6" r="1.9" stroke="#949494" stroke-opacity="0.85" stroke-width="1.15" fill="#949494" fill-opacity="0.38"/><circle cx="229.6" cy="59.0" r="1.4" stroke="#949494" stroke-opacity="0.81" stroke-width="1.15" fill="#949494" fill-opacity="0.36"/><circle cx="-0.4" cy="59.0" r="1.4" stroke="#949494" stroke-opacity="0.81" stroke-width="1.15" fill="#949494" fill-opacity="0.36"/><circle cx="177.2" cy="118.3" r="1.6" stroke="#949494" stroke-opacity="0.62" stroke-width="1.15" fill="#949494" fill-opacity="0.28"/><circle cx="203.0" cy="183.1" r="1.7" stroke="#949494" stroke-opacity="0.42" stroke-width="1.15" fill="#949494" fill-opacity="0.19"/><circle cx="195.8" cy="105.4" r="1.4" stroke="#949494" stroke-opacity="0.56" stroke-width="1.15" fill="#949494" fill-opacity="0.25"/><circle cx="159.0" cy="1.3" r="1.3" stroke="#949494" stroke-opacity="0.57" stroke-width="1.15" fill="#949494" fill-opacity="0.25"/><circle cx="159.0" cy="231.3" r="1.3" stroke="#949494" stroke-opacity="0.57" stroke-width="1.15" fill="#949494" fill-opacity="0.25"/><circle cx="204.1" cy="171.8" r="2.1" stroke="#949494" stroke-opacity="0.70" stroke-width="1.15" fill="#949494" fill-opacity="0.31"/><circle cx="131.6" cy="126.8" r="1.7" stroke="#949494" stroke-opacity="0.70" stroke-width="1.15" fill="#949494" fill-opacity="0.31"/><circle cx="188.3" cy="219.3" r="1.6" stroke="#949494" stroke-opacity="0.75" stroke-width="1.15" fill="#949494" fill-opacity="0.34"/><circle cx="70.8" cy="69.4" r="1.7" stroke="#949494" stroke-opacity="0.72" stroke-width="1.15" fill="#949494" fill-opacity="0.33"/><circle cx="126.5" cy="224.6" r="1.3" stroke="#949494" stroke-opacity="0.75" stroke-width="1.15" fill="#949494" fill-opacity="0.34"/><circle cx="228.7" cy="169.3" r="1.7" stroke="#949494" stroke-opacity="0.60" stroke-width="1.15" fill="#949494" fill-opacity="0.27"/><circle cx="-1.3" cy="169.3" r="1.7" stroke="#949494" stroke-opacity="0.60" stroke-width="1.15" fill="#949494" fill-opacity="0.27"/><circle cx="92.5" cy="215.4" r="2.0" stroke="#949494" stroke-opacity="0.77" stroke-width="1.15" fill="#949494" fill-opacity="0.35"/><circle cx="206.7" cy="212.8" r="2.0" stroke="#949494" stroke-opacity="0.61" stroke-width="1.15" fill="#949494" fill-opacity="0.27"/><circle cx="106.8" cy="183.1" r="1.5" stroke="#949494" stroke-opacity="0.81" stroke-width="1.15" fill="#949494" fill-opacity="0.37"/><circle cx="110.7" cy="77.4" r="1.6" stroke="#949494" stroke-opacity="0.46" stroke-width="1.15" fill="#949494" fill-opacity="0.21"/><circle cx="81.5" cy="95.5" r="1.2" stroke="#949494" stroke-opacity="0.49" stroke-width="1.15" fill="#949494" fill-opacity="0.22"/><circle cx="59.9" cy="197.3" r="1.7" stroke="#949494" stroke-opacity="0.56" stroke-width="1.15" fill="#949494" fill-opacity="0.25"/><circle cx="229.5" cy="59.3" r="1.7" stroke="#949494" stroke-opacity="0.81" stroke-width="1.15" fill="#949494" fill-opacity="0.36"/><circle cx="-0.5" cy="59.3" r="1.7" stroke="#949494" stroke-opacity="0.81" stroke-width="1.15" fill="#949494" fill-opacity="0.36"/><circle cx="159.0" cy="99.7" r="1.9" stroke="#949494" stroke-opacity="0.67" stroke-width="1.15" fill="#949494" fill-opacity="0.30"/><circle cx="164.6" cy="113.0" r="2.1" stroke="#949494" stroke-opacity="0.79" stroke-width="1.15" fill="#949494" fill-opacity="0.36"/><circle cx="21.0" cy="29.8" r="2.1" stroke="#949494" stroke-opacity="0.53" stroke-width="1.15" fill="#949494" fill-opacity="0.24"/><circle cx="6.0" cy="58.2" r="1.6" stroke="#949494" stroke-opacity="0.92" stroke-width="1.15" fill="#949494" fill-opacity="0.42"/><circle cx="91.8" cy="166.4" r="2.0" stroke="#949494" stroke-opacity="0.45" stroke-width="1.15" fill="#949494" fill-opacity="0.20"/><circle cx="140.7" cy="229.0" r="1.7" stroke="#949494" stroke-opacity="0.69" stroke-width="1.15" fill="#949494" fill-opacity="0.31"/><circle cx="140.7" cy="-1.0" r="1.7" stroke="#949494" stroke-opacity="0.69" stroke-width="1.15" fill="#949494" fill-opacity="0.31"/><circle cx="79.7" cy="217.6" r="2.1" stroke="#949494" stroke-opacity="0.46" stroke-width="1.15" fill="#949494" fill-opacity="0.21"/><circle cx="127.2" cy="96.5" r="1.8" stroke="#949494" stroke-opacity="0.47" stroke-width="1.15" fill="#949494" fill-opacity="0.21"/><circle cx="61.0" cy="64.1" r="1.6" stroke="#949494" stroke-opacity="0.84" stroke-width="1.15" fill="#949494" fill-opacity="0.38"/><circle cx="197.3" cy="180.9" r="1.8" stroke="#949494" stroke-opacity="0.45" stroke-width="1.15" fill="#949494" fill-opacity="0.20"/><circle cx="89.6" cy="153.8" r="1.5" stroke="#949494" stroke-opacity="0.68" stroke-width="1.15" fill="#949494" fill-opacity="0.31"/><circle cx="208.2" cy="26.7" r="2.0" stroke="#949494" stroke-opacity="0.46" stroke-width="1.15" fill="#949494" fill-opacity="0.21"/><circle cx="88.9" cy="208.2" r="1.4" stroke="#949494" stroke-opacity="0.69" stroke-width="1.15" fill="#949494" fill-opacity="0.31"/><circle cx="95.8" cy="204.2" r="2.1" stroke="#949494" stroke-opacity="0.56" stroke-width="1.15" fill="#949494" fill-opacity="0.25"/><circle cx="113.3" cy="205.9" r="1.7" stroke="#949494" stroke-opacity="0.52" stroke-width="1.15" fill="#949494" fill-opacity="0.23"/><circle cx="174.7" cy="77.5" r="1.6" stroke="#949494" stroke-opacity="0.40" stroke-width="1.15" fill="#949494" fill-opacity="0.18"/><circle cx="227.5" cy="151.2" r="2.0" stroke="#949494" stroke-opacity="0.93" stroke-width="1.15" fill="#949494" fill-opacity="0.42"/><circle cx="-2.5" cy="151.2" r="2.0" stroke="#949494" stroke-opacity="0.93" stroke-width="1.15" fill="#949494" fill-opacity="0.42"/><circle cx="61.5" cy="124.3" r="1.6" stroke="#949494" stroke-opacity="0.82" stroke-width="1.15" fill="#949494" fill-opacity="0.37"/><circle cx="193.7" cy="52.6" r="1.4" stroke="#949494" stroke-opacity="0.79" stroke-width="1.15" fill="#949494" fill-opacity="0.35"/><circle cx="94.7" cy="29.9" r="1.4" stroke="#949494" stroke-opacity="0.71" stroke-width="1.15" fill="#949494" fill-opacity="0.32"/><circle cx="137.7" cy="220.8" r="1.7" stroke="#949494" stroke-opacity="0.73" stroke-width="1.15" fill="#949494" fill-opacity="0.33"/><circle cx="34.2" cy="95.2" r="1.5" stroke="#949494" stroke-opacity="0.78" stroke-width="1.15" fill="#949494" fill-opacity="0.35"/><circle cx="61.4" cy="49.3" r="1.5" stroke="#949494" stroke-opacity="0.66" stroke-width="1.15" fill="#949494" fill-opacity="0.30"/><circle cx="77.8" cy="139.3" r="1.4" stroke="#949494" stroke-opacity="0.88" stroke-width="1.15" fill="#949494" fill-opacity="0.40"/><circle cx="159.7" cy="123.0" r="1.3" stroke="#949494" stroke-opacity="0.58" stroke-width="1.15" fill="#949494" fill-opacity="0.26"/><circle cx="158.7" cy="148.4" r="1.9" stroke="#949494" stroke-opacity="0.89" stroke-width="1.15" fill="#949494" fill-opacity="0.40"/><circle cx="72.5" cy="113.6" r="1.5" stroke="#949494" stroke-opacity="0.47" stroke-width="1.15" fill="#949494" fill-opacity="0.21"/><circle cx="32.2" cy="59.0" r="1.3" stroke="#949494" stroke-opacity="0.70" stroke-width="1.15" fill="#949494" fill-opacity="0.31"/><circle cx="161.7" cy="129.5" r="1.8" stroke="#949494" stroke-opacity="0.52" stroke-width="1.15" fill="#949494" fill-opacity="0.24"/><circle cx="45.9" cy="130.5" r="2.0" stroke="#949494" stroke-opacity="0.63" stroke-width="1.15" fill="#949494" fill-opacity="0.28"/><circle cx="1.0" cy="4.6" r="1.5" stroke="#949494" stroke-opacity="0.74" stroke-width="1.15" fill="#949494" fill-opacity="0.33"/><circle cx="231.0" cy="4.6" r="1.5" stroke="#949494" stroke-opacity="0.74" stroke-width="1.15" fill="#949494" fill-opacity="0.33"/><circle cx="19.5" cy="51.6" r="1.8" stroke="#949494" stroke-opacity="0.94" stroke-width="1.15" fill="#949494" fill-opacity="0.42"/><circle cx="78.4" cy="138.3" r="1.7" stroke="#949494" stroke-opacity="0.41" stroke-width="1.15" fill="#949494" fill-opacity="0.19"/><circle cx="75.9" cy="32.1" r="1.4" stroke="#949494" stroke-opacity="0.82" stroke-width="1.15" fill="#949494" fill-opacity="0.37"/><circle cx="156.7" cy="9.4" r="1.3" stroke="#949494" stroke-opacity="0.80" stroke-width="1.15" fill="#949494" fill-opacity="0.36"/><circle cx="23.7" cy="72.9" r="1.4" stroke="#949494" stroke-opacity="0.43" stroke-width="1.15" fill="#949494" fill-opacity="0.19"/><circle cx="7.2" cy="32.0" r="1.6" stroke="#949494" stroke-opacity="0.91" stroke-width="1.15" fill="#949494" fill-opacity="0.41"/><circle cx="146.8" cy="55.7" r="1.8" stroke="#949494" stroke-opacity="0.55" stroke-width="1.15" fill="#949494" fill-opacity="0.25"/><circle cx="118.5" cy="74.0" r="2.1" stroke="#949494" stroke-opacity="0.59" stroke-width="1.15" fill="#949494" fill-opacity="0.27"/><circle cx="184.8" cy="147.5" r="2.0" stroke="#949494" stroke-opacity="0.73" stroke-width="1.15" fill="#949494" fill-opacity="0.33"/><circle cx="200.2" cy="93.2" r="1.8" stroke="#949494" stroke-opacity="0.74" stroke-width="1.15" fill="#949494" fill-opacity="0.33"/><circle cx="121.4" cy="129.8" r="1.7" stroke="#949494" stroke-opacity="0.62" stroke-width="1.15" fill="#949494" fill-opacity="0.28"/><circle cx="206.6" cy="145.5" r="1.7" stroke="#949494" stroke-opacity="0.43" stroke-width="1.15" fill="#949494" fill-opacity="0.19"/><circle cx="117.0" cy="40.3" r="1.4" stroke="#949494" stroke-opacity="0.64" stroke-width="1.15" fill="#949494" fill-opacity="0.29"/><circle cx="125.6" cy="57.6" r="1.4" stroke="#949494" stroke-opacity="0.69" stroke-width="1.15" fill="#949494" fill-opacity="0.31"/><circle cx="108.8" cy="92.8" r="1.3" stroke="#949494" stroke-opacity="0.61" stroke-width="1.15" fill="#949494" fill-opacity="0.27"/><circle cx="150.5" cy="125.2" r="1.7" stroke="#949494" stroke-opacity="0.86" stroke-width="1.15" fill="#949494" fill-opacity="0.39"/><circle cx="166.3" cy="157.5" r="1.2" stroke="#949494" stroke-opacity="0.57" stroke-width="1.15" fill="#949494" fill-opacity="0.26"/><circle cx="157.0" cy="35.8" r="2.0" stroke="#949494" stroke-opacity="0.48" stroke-width="1.15" fill="#949494" fill-opacity="0.22"/><circle cx="202.2" cy="49.7" r="2.0" stroke="#949494" stroke-opacity="0.87" stroke-width="1.15" fill="#949494" fill-opacity="0.39"/><circle cx="77.2" cy="204.4" r="1.3" stroke="#949494" stroke-opacity="0.87" stroke-width="1.15" fill="#949494" fill-opacity="0.39"/><circle cx="87.8" cy="101.1" r="1.3" stroke="#949494" stroke-opacity="0.73" stroke-width="1.15" fill="#949494" fill-opacity="0.33"/><circle cx="62.0" cy="153.4" r="1.9" stroke="#949494" stroke-opacity="0.73" stroke-width="1.15" fill="#949494" fill-opacity="0.33"/><circle cx="1.9" cy="219.0" r="2.0" stroke="#949494" stroke-opacity="0.75" stroke-width="1.15" fill="#949494" fill-opacity="0.34"/><circle cx="231.9" cy="219.0" r="2.0" stroke="#949494" stroke-opacity="0.75" stroke-width="1.15" fill="#949494" fill-opacity="0.34"/><circle cx="87.3" cy="129.2" r="2.0" stroke="#949494" stroke-opacity="0.65" stroke-width="1.15" fill="#949494" fill-opacity="0.29"/><circle cx="179.2" cy="137.7" r="1.6" stroke="#949494" stroke-opacity="0.91" stroke-width="1.15" fill="#949494" fill-opacity="0.41"/><circle cx="93.9" cy="139.3" r="1.2" stroke="#949494" stroke-opacity="0.66" stroke-width="1.15" fill="#949494" fill-opacity="0.30"/><circle cx="8.6" cy="162.0" r="1.2" stroke="#949494" stroke-opacity="0.42" stroke-width="1.15" fill="#949494" fill-opacity="0.19"/><circle cx="25.6" cy="32.1" r="1.7" stroke="#949494" stroke-opacity="0.60" stroke-width="1.15" fill="#949494" fill-opacity="0.27"/><circle cx="62.3" cy="226.2" r="2.0" stroke="#949494" stroke-opacity="0.76" stroke-width="1.15" fill="#949494" fill-opacity="0.34"/><circle cx="62.3" cy="-3.8" r="2.0" stroke="#949494" stroke-opacity="0.76" stroke-width="1.15" fill="#949494" fill-opacity="0.34"/><circle cx="184.5" cy="188.5" r="1.4" stroke="#949494" stroke-opacity="0.84" stroke-width="1.15" fill="#949494" fill-opacity="0.38"/><circle cx="55.2" cy="129.3" r="1.5" stroke="#949494" stroke-opacity="0.49" stroke-width="1.15" fill="#949494" fill-opacity="0.22"/><circle cx="178.7" cy="210.8" r="1.5" stroke="#949494" stroke-opacity="0.88" stroke-width="1.15" fill="#949494" fill-opacity="0.40"/><circle cx="79.6" cy="151.2" r="2.1" stroke="#949494" stroke-opacity="0.82" stroke-width="1.15" fill="#949494" fill-opacity="0.37"/><circle cx="12.8" cy="100.0" r="1.5" stroke="#949494" stroke-opacity="0.56" stroke-width="1.15" fill="#949494" fill-opacity="0.25"/><circle cx="187.7" cy="101.4" r="1.8" stroke="#949494" stroke-opacity="0.75" stroke-width="1.15" fill="#949494" fill-opacity="0.34"/><circle cx="119.4" cy="12.9" r="1.8" stroke="#949494" stroke-opacity="0.89" stroke-width="1.15" fill="#949494" fill-opacity="0.40"/><circle cx="39.6" cy="147.8" r="1.6" stroke="#949494" stroke-opacity="0.59" stroke-width="1.15" fill="#949494" fill-opacity="0.26"/><circle cx="163.4" cy="224.3" r="1.2" stroke="#949494" stroke-opacity="0.89" stroke-width="1.15" fill="#949494" fill-opacity="0.40"/><circle cx="88.1" cy="191.8" r="1.4" stroke="#949494" stroke-opacity="0.79" stroke-width="1.15" fill="#949494" fill-opacity="0.36"/><circle cx="22.9" cy="77.2" r="2.1" stroke="#949494" stroke-opacity="0.76" stroke-width="1.15" fill="#949494" fill-opacity="0.34"/><circle cx="180.4" cy="106.1" r="1.6" stroke="#949494" stroke-opacity="0.67" stroke-width="1.15" fill="#949494" fill-opacity="0.30"/><circle cx="177.8" cy="166.3" r="1.4" stroke="#949494" stroke-opacity="0.64" stroke-width="1.15" fill="#949494" fill-opacity="0.29"/><circle cx="124.7" cy="131.4" r="2.0" stroke="#949494" stroke-opacity="0.86" stroke-width="1.15" fill="#949494" fill-opacity="0.39"/><circle cx="34.5" cy="86.5" r="1.3" stroke="#949494" stroke-opacity="0.41" stroke-width="1.15" fill="#949494" fill-opacity="0.19"/><circle cx="17.2" cy="42.1" r="1.9" stroke="#949494" stroke-opacity="0.77" stroke-width="1.15" fill="#949494" fill-opacity="0.35"/><circle cx="183.5" cy="66.4" r="1.3" stroke="#949494" stroke-opacity="0.93" stroke-width="1.15" fill="#949494" fill-opacity="0.42"/><circle cx="190.0" cy="217.8" r="1.2" stroke="#949494" stroke-opacity="0.62" stroke-width="1.15" fill="#949494" fill-opacity="0.28"/><circle cx="145.8" cy="169.3" r="2.0" stroke="#949494" stroke-opacity="0.70" stroke-width="1.15" fill="#949494" fill-opacity="0.31"/><circle cx="89.9" cy="1.2" r="1.9" stroke="#949494" stroke-opacity="0.94" stroke-width="1.15" fill="#949494" fill-opacity="0.42"/><circle cx="89.9" cy="231.2" r="1.9" stroke="#949494" stroke-opacity="0.94" stroke-width="1.15" fill="#949494" fill-opacity="0.42"/><circle cx="208.7" cy="152.3" r="1.5" stroke="#949494" stroke-opacity="0.53" stroke-width="1.15" fill="#949494" fill-opacity="0.24"/><circle cx="178.3" cy="215.1" r="2.1" stroke="#949494" stroke-opacity="0.50" stroke-width="1.15" fill="#949494" fill-opacity="0.22"/><circle cx="134.6" cy="118.0" r="1.6" stroke="#949494" stroke-opacity="0.84" stroke-width="1.15" fill="#949494" fill-opacity="0.38"/><circle cx="215.2" cy="166.7" r="1.8" stroke="#949494" stroke-opacity="0.78" stroke-width="1.15" fill="#949494" fill-opacity="0.35"/><circle cx="150.3" cy="123.5" r="1.4" stroke="#949494" stroke-opacity="0.83" stroke-width="1.15" fill="#949494" fill-opacity="0.37"/><circle cx="27.4" cy="148.1" r="1.5" stroke="#949494" stroke-opacity="0.71" stroke-width="1.15" fill="#949494" fill-opacity="0.32"/><circle cx="147.5" cy="110.2" r="2.1" stroke="#949494" stroke-opacity="0.53" stroke-width="1.15" fill="#949494" fill-opacity="0.24"/><circle cx="2.8" cy="219.7" r="1.5" stroke="#949494" stroke-opacity="0.55" stroke-width="1.15" fill="#949494" fill-opacity="0.25"/><circle cx="232.8" cy="219.7" r="1.5" stroke="#949494" stroke-opacity="0.55" stroke-width="1.15" fill="#949494" fill-opacity="0.25"/><circle cx="95.6" cy="136.8" r="2.1" stroke="#949494" stroke-opacity="0.79" stroke-width="1.15" fill="#949494" fill-opacity="0.36"/><circle cx="73.2" cy="123.0" r="1.6" stroke="#949494" stroke-opacity="0.68" stroke-width="1.15" fill="#949494" fill-opacity="0.30"/><circle cx="96.0" cy="38.6" r="1.6" stroke="#949494" stroke-opacity="0.61" stroke-width="1.15" fill="#949494" fill-opacity="0.28"/><circle cx="46.2" cy="187.9" r="1.5" stroke="#949494" stroke-opacity="0.48" stroke-width="1.15" fill="#949494" fill-opacity="0.22"/><circle cx="130.4" cy="194.3" r="1.9" stroke="#949494" stroke-opacity="0.74" stroke-width="1.15" fill="#949494" fill-opacity="0.33"/><circle cx="168.1" cy="77.3" r="1.3" stroke="#949494" stroke-opacity="0.54" stroke-width="1.15" fill="#949494" fill-opacity="0.24"/><circle cx="80.4" cy="64.2" r="1.6" stroke="#949494" stroke-opacity="0.48" stroke-width="1.15" fill="#949494" fill-opacity="0.22"/><circle cx="30.0" cy="58.1" r="1.4" stroke="#949494" stroke-opacity="0.84" stroke-width="1.15" fill="#949494" fill-opacity="0.38"/><circle cx="123.6" cy="45.6" r="1.6" stroke="#949494" stroke-opacity="0.88" stroke-width="1.15" fill="#949494" fill-opacity="0.40"/><circle cx="132.9" cy="127.4" r="1.6" stroke="#949494" stroke-opacity="0.51" stroke-width="1.15" fill="#949494" fill-opacity="0.23"/><circle cx="143.8" cy="17.7" r="1.9" stroke="#949494" stroke-opacity="0.43" stroke-width="1.15" fill="#949494" fill-opacity="0.19"/><circle cx="171.7" cy="88.0" r="1.8" stroke="#949494" stroke-opacity="0.73" stroke-width="1.15" fill="#949494" fill-opacity="0.33"/><circle cx="29.7" cy="123.9" r="1.3" stroke="#949494" stroke-opacity="0.53" stroke-width="1.15" fill="#949494" fill-opacity="0.24"/><circle cx="87.8" cy="65.7" r="1.8" stroke="#949494" stroke-opacity="0.94" stroke-width="1.15" fill="#949494" fill-opacity="0.42"/><circle cx="82.1" cy="192.9" r="1.4" stroke="#949494" stroke-opacity="0.79" stroke-width="1.15" fill="#949494" fill-opacity="0.36"/><circle cx="80.0" cy="123.1" r="1.3" stroke="#949494" stroke-opacity="0.86" stroke-width="1.15" fill="#949494" fill-opacity="0.38"/><circle cx="48.0" cy="106.6" r="1.5" stroke="#949494" stroke-opacity="0.85" stroke-width="1.15" fill="#949494" fill-opacity="0.38"/><circle cx="136.3" cy="141.5" r="1.9" stroke="#949494" stroke-opacity="0.54" stroke-width="1.15" fill="#949494" fill-opacity="0.24"/><circle cx="13.4" cy="190.6" r="1.5" stroke="#949494" stroke-opacity="0.85" stroke-width="1.15" fill="#949494" fill-opacity="0.38"/><circle cx="220.0" cy="144.7" r="1.3" stroke="#949494" stroke-opacity="0.87" stroke-width="1.15" fill="#949494" fill-opacity="0.39"/><circle cx="145.7" cy="56.6" r="1.4" stroke="#949494" stroke-opacity="0.68" stroke-width="1.15" fill="#949494" fill-opacity="0.31"/><circle cx="28.0" cy="208.4" r="1.8" stroke="#949494" stroke-opacity="0.85" stroke-width="1.15" fill="#949494" fill-opacity="0.38"/><circle cx="88.3" cy="212.3" r="1.3" stroke="#949494" stroke-opacity="0.79" stroke-width="1.15" fill="#949494" fill-opacity="0.36"/><circle cx="58.6" cy="0.8" r="1.3" stroke="#949494" stroke-opacity="0.51" stroke-width="1.15" fill="#949494" fill-opacity="0.23"/><circle cx="58.6" cy="230.8" r="1.3" stroke="#949494" stroke-opacity="0.51" stroke-width="1.15" fill="#949494" fill-opacity="0.23"/><circle cx="175.6" cy="87.0" r="1.6" stroke="#949494" stroke-opacity="0.74" stroke-width="1.15" fill="#949494" fill-opacity="0.33"/><circle cx="61.6" cy="146.8" r="1.8" stroke="#949494" stroke-opacity="0.91" stroke-width="1.15" fill="#949494" fill-opacity="0.41"/><circle cx="115.7" cy="196.7" r="2.1" stroke="#949494" stroke-opacity="0.82" stroke-width="1.15" fill="#949494" fill-opacity="0.37"/><circle cx="96.9" cy="62.6" r="1.3" stroke="#949494" stroke-opacity="0.86" stroke-width="1.15" fill="#949494" fill-opacity="0.39"/><circle cx="29.8" cy="128.7" r="1.6" stroke="#949494" stroke-opacity="0.42" stroke-width="1.15" fill="#949494" fill-opacity="0.19"/><circle cx="49.3" cy="189.3" r="1.7" stroke="#949494" stroke-opacity="0.91" stroke-width="1.15" fill="#949494" fill-opacity="0.41"/><circle cx="208.8" cy="21.6" r="1.8" stroke="#949494" stroke-opacity="0.42" stroke-width="1.15" fill="#949494" fill-opacity="0.19"/><circle cx="97.2" cy="101.6" r="2.1" stroke="#949494" stroke-opacity="0.73" stroke-width="1.15" fill="#949494" fill-opacity="0.33"/><circle cx="43.7" cy="117.2" r="1.7" stroke="#949494" stroke-opacity="0.51" stroke-width="1.15" fill="#949494" fill-opacity="0.23"/><circle cx="82.7" cy="201.8" r="2.1" stroke="#949494" stroke-opacity="0.83" stroke-width="1.15" fill="#949494" fill-opacity="0.37"/><circle cx="14.8" cy="208.4" r="1.6" stroke="#949494" stroke-opacity="0.86" stroke-width="1.15" fill="#949494" fill-opacity="0.39"/><circle cx="40.7" cy="34.0" r="2.0" stroke="#949494" stroke-opacity="0.56" stroke-width="1.15" fill="#949494" fill-opacity="0.25"/><circle cx="9.9" cy="115.2" r="2.1" stroke="#949494" stroke-opacity="0.86" stroke-width="1.15" fill="#949494" fill-opacity="0.39"/><circle cx="91.1" cy="228.4" r="1.9" stroke="#949494" stroke-opacity="0.86" stroke-width="1.15" fill="#949494" fill-opacity="0.39"/><circle cx="91.1" cy="-1.6" r="1.9" stroke="#949494" stroke-opacity="0.86" stroke-width="1.15" fill="#949494" fill-opacity="0.39"/><circle cx="148.6" cy="90.7" r="2.0" stroke="#949494" stroke-opacity="0.66" stroke-width="1.15" fill="#949494" fill-opacity="0.30"/><circle cx="215.0" cy="127.0" r="2.0" stroke="#949494" stroke-opacity="0.66" stroke-width="1.15" fill="#949494" fill-opacity="0.30"/><circle cx="98.2" cy="135.4" r="1.5" stroke="#949494" stroke-opacity="0.48" stroke-width="1.15" fill="#949494" fill-opacity="0.22"/><circle cx="135.5" cy="195.7" r="1.4" stroke="#949494" stroke-opacity="0.88" stroke-width="1.15" fill="#949494" fill-opacity="0.39"/><circle cx="181.0" cy="178.4" r="1.6" stroke="#949494" stroke-opacity="0.95" stroke-width="1.15" fill="#949494" fill-opacity="0.43"/><circle cx="181.9" cy="132.4" r="1.3" stroke="#949494" stroke-opacity="0.72" stroke-width="1.15" fill="#949494" fill-opacity="0.32"/><circle cx="3.3" cy="207.5" r="1.5" stroke="#949494" stroke-opacity="0.60" stroke-width="1.15" fill="#949494" fill-opacity="0.27"/><circle cx="233.3" cy="207.5" r="1.5" stroke="#949494" stroke-opacity="0.60" stroke-width="1.15" fill="#949494" fill-opacity="0.27"/><circle cx="126.7" cy="146.6" r="1.7" stroke="#949494" stroke-opacity="0.67" stroke-width="1.15" fill="#949494" fill-opacity="0.30"/><circle cx="145.9" cy="194.8" r="1.6" stroke="#949494" stroke-opacity="0.68" stroke-width="1.15" fill="#949494" fill-opacity="0.30"/><circle cx="186.4" cy="0.8" r="1.3" stroke="#949494" stroke-opacity="0.58" stroke-width="1.15" fill="#949494" fill-opacity="0.26"/><circle cx="186.4" cy="230.8" r="1.3" stroke="#949494" stroke-opacity="0.58" stroke-width="1.15" fill="#949494" fill-opacity="0.26"/><circle cx="49.2" cy="206.1" r="1.3" stroke="#949494" stroke-opacity="0.46" stroke-width="1.15" fill="#949494" fill-opacity="0.21"/><circle cx="73.0" cy="117.0" r="1.9" stroke="#949494" stroke-opacity="0.95" stroke-width="1.15" fill="#949494" fill-opacity="0.43"/><circle cx="195.9" cy="140.0" r="1.2" stroke="#949494" stroke-opacity="0.43" stroke-width="1.15" fill="#949494" fill-opacity="0.20"/><circle cx="145.1" cy="188.6" r="1.4" stroke="#949494" stroke-opacity="0.93" stroke-width="1.15" fill="#949494" fill-opacity="0.42"/><circle cx="126.6" cy="132.0" r="1.8" stroke="#949494" stroke-opacity="0.44" stroke-width="1.15" fill="#949494" fill-opacity="0.20"/><circle cx="39.2" cy="215.3" r="1.4" stroke="#949494" stroke-opacity="0.45" stroke-width="1.15" fill="#949494" fill-opacity="0.20"/><circle cx="65.0" cy="167.0" r="1.4" stroke="#949494" stroke-opacity="0.52" stroke-width="1.15" fill="#949494" fill-opacity="0.23"/><circle cx="63.7" cy="110.5" r="1.9" stroke="#949494" stroke-opacity="0.57" stroke-width="1.15" fill="#949494" fill-opacity="0.25"/><circle cx="200.9" cy="224.5" r="1.9" stroke="#949494" stroke-opacity="0.44" stroke-width="1.15" fill="#949494" fill-opacity="0.20"/><circle cx="72.6" cy="212.9" r="2.0" stroke="#949494" stroke-opacity="0.47" stroke-width="1.15" fill="#949494" fill-opacity="0.21"/><circle cx="101.7" cy="83.7" r="1.9" stroke="#949494" stroke-opacity="0.42" stroke-width="1.15" fill="#949494" fill-opacity="0.19"/><circle cx="72.6" cy="172.4" r="2.0" stroke="#949494" stroke-opacity="0.42" stroke-width="1.15" fill="#949494" fill-opacity="0.19"/><circle cx="135.3" cy="152.6" r="2.0" stroke="#949494" stroke-opacity="0.63" stroke-width="1.15" fill="#949494" fill-opacity="0.29"/><circle cx="223.8" cy="45.4" r="1.3" stroke="#949494" stroke-opacity="0.47" stroke-width="1.15" fill="#949494" fill-opacity="0.21"/><circle cx="134.9" cy="28.2" r="1.4" stroke="#949494" stroke-opacity="0.51" stroke-width="1.15" fill="#949494" fill-opacity="0.23"/><circle cx="12.7" cy="221.3" r="1.5" stroke="#949494" stroke-opacity="0.93" stroke-width="1.15" fill="#949494" fill-opacity="0.42"/><circle cx="166.3" cy="50.5" r="2.0" stroke="#949494" stroke-opacity="0.41" stroke-width="1.15" fill="#949494" fill-opacity="0.18"/><circle cx="225.8" cy="7.4" r="1.4" stroke="#949494" stroke-opacity="0.70" stroke-width="1.15" fill="#949494" fill-opacity="0.32"/><circle cx="2.1" cy="175.9" r="1.3" stroke="#949494" stroke-opacity="0.85" stroke-width="1.15" fill="#949494" fill-opacity="0.38"/><circle cx="232.1" cy="175.9" r="1.3" stroke="#949494" stroke-opacity="0.85" stroke-width="1.15" fill="#949494" fill-opacity="0.38"/><circle cx="8.1" cy="121.5" r="1.4" stroke="#949494" stroke-opacity="0.56" stroke-width="1.15" fill="#949494" fill-opacity="0.25"/><circle cx="112.8" cy="85.4" r="1.6" stroke="#949494" stroke-opacity="0.76" stroke-width="1.15" fill="#949494" fill-opacity="0.34"/><circle cx="44.9" cy="41.7" r="1.8" stroke="#949494" stroke-opacity="0.56" stroke-width="1.15" fill="#949494" fill-opacity="0.25"/><circle cx="214.6" cy="98.0" r="1.6" stroke="#949494" stroke-opacity="0.41" stroke-width="1.15" fill="#949494" fill-opacity="0.19"/><circle cx="4.8" cy="24.1" r="1.8" stroke="#949494" stroke-opacity="0.77" stroke-width="1.15" fill="#949494" fill-opacity="0.34"/><circle cx="219.0" cy="99.5" r="1.8" stroke="#949494" stroke-opacity="0.59" stroke-width="1.15" fill="#949494" fill-opacity="0.27"/><circle cx="17.0" cy="96.6" r="1.8" stroke="#949494" stroke-opacity="0.84" stroke-width="1.15" fill="#949494" fill-opacity="0.38"/><circle cx="219.0" cy="191.4" r="1.7" stroke="#949494" stroke-opacity="0.70" stroke-width="1.15" fill="#949494" fill-opacity="0.32"/><circle cx="115.3" cy="109.8" r="1.8" stroke="#949494" stroke-opacity="0.72" stroke-width="1.15" fill="#949494" fill-opacity="0.32"/><circle cx="197.1" cy="103.5" r="1.6" stroke="#949494" stroke-opacity="0.86" stroke-width="1.15" fill="#949494" fill-opacity="0.39"/><circle cx="155.4" cy="120.6" r="1.7" stroke="#949494" stroke-opacity="0.84" stroke-width="1.15" fill="#949494" fill-opacity="0.38"/><circle cx="139.7" cy="59.6" r="1.5" stroke="#949494" stroke-opacity="0.73" stroke-width="1.15" fill="#949494" fill-opacity="0.33"/><circle cx="10.5" cy="105.2" r="2.0" stroke="#949494" stroke-opacity="0.53" stroke-width="1.15" fill="#949494" fill-opacity="0.24"/><circle cx="102.2" cy="160.9" r="2.0" stroke="#949494" stroke-opacity="0.78" stroke-width="1.15" fill="#949494" fill-opacity="0.35"/><circle cx="143.9" cy="88.3" r="1.6" stroke="#949494" stroke-opacity="0.75" stroke-width="1.15" fill="#949494" fill-opacity="0.34"/><circle cx="82.0" cy="180.5" r="1.2" stroke="#949494" stroke-opacity="0.81" stroke-width="1.15" fill="#949494" fill-opacity="0.37"/><circle cx="170.7" cy="70.5" r="1.2" stroke="#949494" stroke-opacity="0.59" stroke-width="1.15" fill="#949494" fill-opacity="0.26"/><circle cx="135.5" cy="181.0" r="2.0" stroke="#949494" stroke-opacity="0.51" stroke-width="1.15" fill="#949494" fill-opacity="0.23"/><circle cx="18.8" cy="27.6" r="2.1" stroke="#949494" stroke-opacity="0.75" stroke-width="1.15" fill="#949494" fill-opacity="0.34"/><circle cx="29.5" cy="158.9" r="2.1" stroke="#949494" stroke-opacity="0.73" stroke-width="1.15" fill="#949494" fill-opacity="0.33"/><circle cx="53.5" cy="221.3" r="1.8" stroke="#949494" stroke-opacity="0.50" stroke-width="1.15" fill="#949494" fill-opacity="0.23"/><circle cx="176.2" cy="116.0" r="1.7" stroke="#949494" stroke-opacity="0.60" stroke-width="1.15" fill="#949494" fill-opacity="0.27"/><circle cx="67.6" cy="96.7" r="1.7" stroke="#949494" stroke-opacity="0.65" stroke-width="1.15" fill="#949494" fill-opacity="0.29"/><circle cx="199.2" cy="17.1" r="1.4" stroke="#949494" stroke-opacity="0.92" stroke-width="1.15" fill="#949494" fill-opacity="0.41"/><circle cx="139.8" cy="142.0" r="1.8" stroke="#949494" stroke-opacity="0.53" stroke-width="1.15" fill="#949494" fill-opacity="0.24"/><circle cx="90.8" cy="48.3" r="1.3" stroke="#949494" stroke-opacity="0.94" stroke-width="1.15" fill="#949494" fill-opacity="0.42"/><circle cx="171.1" cy="202.2" r="1.2" stroke="#949494" stroke-opacity="0.79" stroke-width="1.15" fill="#949494" fill-opacity="0.35"/><circle cx="70.7" cy="114.5" r="1.8" stroke="#949494" stroke-opacity="0.42" stroke-width="1.15" fill="#949494" fill-opacity="0.19"/><circle cx="85.3" cy="127.4" r="2.0" stroke="#949494" stroke-opacity="0.68" stroke-width="1.15" fill="#949494" fill-opacity="0.31"/><circle cx="73.0" cy="138.9" r="1.7" stroke="#949494" stroke-opacity="0.56" stroke-width="1.15" fill="#949494" fill-opacity="0.25"/><circle cx="126.1" cy="63.5" r="1.2" stroke="#949494" stroke-opacity="0.57" stroke-width="1.15" fill="#949494" fill-opacity="0.26"/><circle cx="19.9" cy="113.1" r="1.7" stroke="#949494" stroke-opacity="0.88" stroke-width="1.15" fill="#949494" fill-opacity="0.40"/><circle cx="172.0" cy="172.4" r="2.1" stroke="#949494" stroke-opacity="0.55" stroke-width="1.15" fill="#949494" fill-opacity="0.25"/><circle cx="85.7" cy="53.0" r="1.3" stroke="#949494" stroke-opacity="0.68" stroke-width="1.15" fill="#949494" fill-opacity="0.31"/><circle cx="117.6" cy="29.8" r="2.0" stroke="#949494" stroke-opacity="0.94" stroke-width="1.15" fill="#949494" fill-opacity="0.42"/><circle cx="15.7" cy="0.7" r="1.3" stroke="#949494" stroke-opacity="0.80" stroke-width="1.15" fill="#949494" fill-opacity="0.36"/><circle cx="15.7" cy="230.7" r="1.3" stroke="#949494" stroke-opacity="0.80" stroke-width="1.15" fill="#949494" fill-opacity="0.36"/><circle cx="196.1" cy="15.2" r="1.2" stroke="#949494" stroke-opacity="0.70" stroke-width="1.15" fill="#949494" fill-opacity="0.31"/><circle cx="76.5" cy="4.3" r="1.2" stroke="#949494" stroke-opacity="0.52" stroke-width="1.15" fill="#949494" fill-opacity="0.23"/><circle cx="46.0" cy="67.9" r="1.7" stroke="#949494" stroke-opacity="0.54" stroke-width="1.15" fill="#949494" fill-opacity="0.24"/><circle cx="53.7" cy="48.5" r="2.0" stroke="#949494" stroke-opacity="0.53" stroke-width="1.15" fill="#949494" fill-opacity="0.24"/><circle cx="127.7" cy="104.1" r="1.5" stroke="#949494" stroke-opacity="0.62" stroke-width="1.15" fill="#949494" fill-opacity="0.28"/><circle cx="3.7" cy="42.6" r="1.8" stroke="#949494" stroke-opacity="0.82" stroke-width="1.15" fill="#949494" fill-opacity="0.37"/><circle cx="233.7" cy="42.6" r="1.8" stroke="#949494" stroke-opacity="0.82" stroke-width="1.15" fill="#949494" fill-opacity="0.37"/><circle cx="50.2" cy="40.6" r="2.0" stroke="#949494" stroke-opacity="0.45" stroke-width="1.15" fill="#949494" fill-opacity="0.20"/><circle cx="182.8" cy="202.0" r="1.3" stroke="#949494" stroke-opacity="0.86" stroke-width="1.15" fill="#949494" fill-opacity="0.39"/><circle cx="34.5" cy="9.9" r="1.5" stroke="#949494" stroke-opacity="0.59" stroke-width="1.15" fill="#949494" fill-opacity="0.27"/><circle cx="135.6" cy="101.8" r="1.9" stroke="#949494" stroke-opacity="0.77" stroke-width="1.15" fill="#949494" fill-opacity="0.34"/><circle cx="27.4" cy="46.5" r="1.9" stroke="#949494" stroke-opacity="0.46" stroke-width="1.15" fill="#949494" fill-opacity="0.21"/><circle cx="219.1" cy="186.7" r="1.4" stroke="#949494" stroke-opacity="0.56" stroke-width="1.15" fill="#949494" fill-opacity="0.25"/><circle cx="58.0" cy="97.3" r="1.4" stroke="#949494" stroke-opacity="0.42" stroke-width="1.15" fill="#949494" fill-opacity="0.19"/><circle cx="57.9" cy="44.8" r="1.5" stroke="#949494" stroke-opacity="0.65" stroke-width="1.15" fill="#949494" fill-opacity="0.29"/><circle cx="201.1" cy="151.7" r="1.8" stroke="#949494" stroke-opacity="0.88" stroke-width="1.15" fill="#949494" fill-opacity="0.39"/><circle cx="88.9" cy="98.0" r="1.4" stroke="#949494" stroke-opacity="0.86" stroke-width="1.15" fill="#949494" fill-opacity="0.39"/><circle cx="201.8" cy="209.5" r="1.7" stroke="#949494" stroke-opacity="0.46" stroke-width="1.15" fill="#949494" fill-opacity="0.21"/><circle cx="16.6" cy="183.4" r="2.0" stroke="#949494" stroke-opacity="0.69" stroke-width="1.15" fill="#949494" fill-opacity="0.31"/><circle cx="211.8" cy="214.1" r="1.9" stroke="#949494" stroke-opacity="0.60" stroke-width="1.15" fill="#949494" fill-opacity="0.27"/><circle cx="105.0" cy="80.9" r="1.6" stroke="#949494" stroke-opacity="0.66" stroke-width="1.15" fill="#949494" fill-opacity="0.30"/><circle cx="3.9" cy="29.3" r="1.4" stroke="#949494" stroke-opacity="0.71" stroke-width="1.15" fill="#949494" fill-opacity="0.32"/><circle cx="200.5" cy="163.6" r="1.3" stroke="#949494" stroke-opacity="0.65" stroke-width="1.15" fill="#949494" fill-opacity="0.29"/><circle cx="144.3" cy="31.1" r="1.3" stroke="#949494" stroke-opacity="0.74" stroke-width="1.15" fill="#949494" fill-opacity="0.33"/><circle cx="54.1" cy="148.4" r="1.4" stroke="#949494" stroke-opacity="0.87" stroke-width="1.15" fill="#949494" fill-opacity="0.39"/><circle cx="71.2" cy="98.5" r="1.7" stroke="#949494" stroke-opacity="0.89" stroke-width="1.15" fill="#949494" fill-opacity="0.40"/><circle cx="210.8" cy="194.3" r="1.8" stroke="#949494" stroke-opacity="0.44" stroke-width="1.15" fill="#949494" fill-opacity="0.20"/><circle cx="43.0" cy="123.0" r="2.1" stroke="#949494" stroke-opacity="0.80" stroke-width="1.15" fill="#949494" fill-opacity="0.36"/><circle cx="44.1" cy="81.9" r="2.1" stroke="#949494" stroke-opacity="0.68" stroke-width="1.15" fill="#949494" fill-opacity="0.31"/><circle cx="200.2" cy="197.3" r="1.9" stroke="#949494" stroke-opacity="0.74" stroke-width="1.15" fill="#949494" fill-opacity="0.34"/><circle cx="153.1" cy="78.7" r="1.3" stroke="#949494" stroke-opacity="0.92" stroke-width="1.15" fill="#949494" fill-opacity="0.41"/><circle cx="7.5" cy="62.3" r="1.8" stroke="#949494" stroke-opacity="0.93" stroke-width="1.15" fill="#949494" fill-opacity="0.42"/><circle cx="48.3" cy="56.8" r="2.0" stroke="#949494" stroke-opacity="0.58" stroke-width="1.15" fill="#949494" fill-opacity="0.26"/><circle cx="92.7" cy="82.7" r="1.2" stroke="#949494" stroke-opacity="0.92" stroke-width="1.15" fill="#949494" fill-opacity="0.41"/><circle cx="160.5" cy="1.6" r="1.3" stroke="#949494" stroke-opacity="0.47" stroke-width="1.15" fill="#949494" fill-opacity="0.21"/><circle cx="160.5" cy="231.6" r="1.3" stroke="#949494" stroke-opacity="0.47" stroke-width="1.15" fill="#949494" fill-opacity="0.21"/><circle cx="84.8" cy="204.8" r="1.3" stroke="#949494" stroke-opacity="0.53" stroke-width="1.15" fill="#949494" fill-opacity="0.24"/><circle cx="71.6" cy="117.5" r="2.0" stroke="#949494" stroke-opacity="0.70" stroke-width="1.15" fill="#949494" fill-opacity="0.31"/><circle cx="207.8" cy="124.6" r="1.6" stroke="#949494" stroke-opacity="0.88" stroke-width="1.15" fill="#949494" fill-opacity="0.40"/><circle cx="133.6" cy="109.2" r="1.7" stroke="#949494" stroke-opacity="0.60" stroke-width="1.15" fill="#949494" fill-opacity="0.27"/><circle cx="99.6" cy="17.1" r="1.4" stroke="#949494" stroke-opacity="0.82" stroke-width="1.15" fill="#949494" fill-opacity="0.37"/><circle cx="30.7" cy="47.9" r="1.3" stroke="#949494" stroke-opacity="0.60" stroke-width="1.15" fill="#949494" fill-opacity="0.27"/><circle cx="11.3" cy="82.9" r="1.7" stroke="#949494" stroke-opacity="0.77" stroke-width="1.15" fill="#949494" fill-opacity="0.35"/><circle cx="199.5" cy="20.0" r="1.8" stroke="#949494" stroke-opacity="0.51" stroke-width="1.15" fill="#949494" fill-opacity="0.23"/><circle cx="78.8" cy="132.3" r="2.0" stroke="#949494" stroke-opacity="0.77" stroke-width="1.15" fill="#949494" fill-opacity="0.35"/><circle cx="226.6" cy="4.1" r="1.5" stroke="#949494" stroke-opacity="0.66" stroke-width="1.15" fill="#949494" fill-opacity="0.30"/><circle cx="-3.4" cy="4.1" r="1.5" stroke="#949494" stroke-opacity="0.66" stroke-width="1.15" fill="#949494" fill-opacity="0.30"/><circle cx="8.3" cy="12.0" r="1.5" stroke="#949494" stroke-opacity="0.71" stroke-width="1.15" fill="#949494" fill-opacity="0.32"/><circle cx="31.2" cy="15.7" r="1.5" stroke="#949494" stroke-opacity="0.81" stroke-width="1.15" fill="#949494" fill-opacity="0.36"/><circle cx="130.4" cy="229.3" r="1.7" stroke="#949494" stroke-opacity="0.89" stroke-width="1.15" fill="#949494" fill-opacity="0.40"/><circle cx="130.4" cy="-0.7" r="1.7" stroke="#949494" stroke-opacity="0.89" stroke-width="1.15" fill="#949494" fill-opacity="0.40"/><circle cx="131.8" cy="110.6" r="1.6" stroke="#949494" stroke-opacity="0.44" stroke-width="1.15" fill="#949494" fill-opacity="0.20"/><circle cx="14.5" cy="151.4" r="2.0" stroke="#949494" stroke-opacity="0.41" stroke-width="1.15" fill="#949494" fill-opacity="0.18"/><circle cx="41.5" cy="75.3" r="1.5" stroke="#949494" stroke-opacity="0.86" stroke-width="1.15" fill="#949494" fill-opacity="0.39"/><circle cx="58.1" cy="70.4" r="1.6" stroke="#949494" stroke-opacity="0.92" stroke-width="1.15" fill="#949494" fill-opacity="0.42"/><circle cx="67.7" cy="145.8" r="1.2" stroke="#949494" stroke-opacity="0.64" stroke-width="1.15" fill="#949494" fill-opacity="0.29"/><circle cx="213.3" cy="50.0" r="1.5" stroke="#949494" stroke-opacity="0.76" stroke-width="1.15" fill="#949494" fill-opacity="0.34"/><circle cx="130.1" cy="132.5" r="1.7" stroke="#949494" stroke-opacity="0.77" stroke-width="1.15" fill="#949494" fill-opacity="0.35"/><circle cx="74.2" cy="80.9" r="1.6" stroke="#949494" stroke-opacity="0.69" stroke-width="1.15" fill="#949494" fill-opacity="0.31"/><circle cx="130.4" cy="201.0" r="1.6" stroke="#949494" stroke-opacity="0.65" stroke-width="1.15" fill="#949494" fill-opacity="0.29"/><circle cx="191.5" cy="223.3" r="1.4" stroke="#949494" stroke-opacity="0.80" stroke-width="1.15" fill="#949494" fill-opacity="0.36"/><circle cx="57.0" cy="170.5" r="1.2" stroke="#949494" stroke-opacity="0.68" stroke-width="1.15" fill="#949494" fill-opacity="0.31"/><circle cx="131.1" cy="160.9" r="2.0" stroke="#949494" stroke-opacity="0.84" stroke-width="1.15" fill="#949494" fill-opacity="0.38"/><circle cx="129.5" cy="114.4" r="1.2" stroke="#949494" stroke-opacity="0.70" stroke-width="1.15" fill="#949494" fill-opacity="0.32"/><circle cx="129.3" cy="170.7" r="1.3" stroke="#949494" stroke-opacity="0.72" stroke-width="1.15" fill="#949494" fill-opacity="0.33"/><circle cx="11.9" cy="167.0" r="1.9" stroke="#949494" stroke-opacity="0.64" stroke-width="1.15" fill="#949494" fill-opacity="0.29"/><circle cx="158.2" cy="152.3" r="1.5" stroke="#949494" stroke-opacity="0.45" stroke-width="1.15" fill="#949494" fill-opacity="0.20"/><circle cx="174.3" cy="82.1" r="1.3" stroke="#949494" stroke-opacity="0.64" stroke-width="1.15" fill="#949494" fill-opacity="0.29"/><circle cx="191.6" cy="219.5" r="1.7" stroke="#949494" stroke-opacity="0.93" stroke-width="1.15" fill="#949494" fill-opacity="0.42"/><circle cx="39.9" cy="112.8" r="1.2" stroke="#949494" stroke-opacity="0.53" stroke-width="1.15" fill="#949494" fill-opacity="0.24"/><circle cx="201.6" cy="13.7" r="1.8" stroke="#949494" stroke-opacity="0.68" stroke-width="1.15" fill="#949494" fill-opacity="0.31"/><circle cx="227.1" cy="228.5" r="1.3" stroke="#949494" stroke-opacity="0.54" stroke-width="1.15" fill="#949494" fill-opacity="0.24"/><circle cx="227.1" cy="-1.5" r="1.3" stroke="#949494" stroke-opacity="0.54" stroke-width="1.15" fill="#949494" fill-opacity="0.24"/><circle cx="-2.9" cy="228.5" r="1.3" stroke="#949494" stroke-opacity="0.54" stroke-width="1.15" fill="#949494" fill-opacity="0.24"/><circle cx="-2.9" cy="-1.5" r="1.3" stroke="#949494" stroke-opacity="0.54" stroke-width="1.15" fill="#949494" fill-opacity="0.24"/><circle cx="228.0" cy="75.9" r="1.4" stroke="#949494" stroke-opacity="0.90" stroke-width="1.15" fill="#949494" fill-opacity="0.41"/><circle cx="-2.0" cy="75.9" r="1.4" stroke="#949494" stroke-opacity="0.90" stroke-width="1.15" fill="#949494" fill-opacity="0.41"/><circle cx="142.0" cy="70.9" r="1.7" stroke="#949494" stroke-opacity="0.64" stroke-width="1.15" fill="#949494" fill-opacity="0.29"/><circle cx="105.3" cy="127.0" r="1.4" stroke="#949494" stroke-opacity="0.74" stroke-width="1.15" fill="#949494" fill-opacity="0.33"/><circle cx="219.7" cy="136.2" r="1.9" stroke="#949494" stroke-opacity="0.56" stroke-width="1.15" fill="#949494" fill-opacity="0.25"/><circle cx="35.6" cy="1.5" r="2.1" stroke="#949494" stroke-opacity="0.47" stroke-width="1.15" fill="#949494" fill-opacity="0.21"/><circle cx="35.6" cy="231.5" r="2.1" stroke="#949494" stroke-opacity="0.47" stroke-width="1.15" fill="#949494" fill-opacity="0.21"/><circle cx="87.4" cy="150.6" r="1.9" stroke="#949494" stroke-opacity="0.74" stroke-width="1.15" fill="#949494" fill-opacity="0.33"/><circle cx="101.1" cy="187.4" r="1.6" stroke="#949494" stroke-opacity="0.86" stroke-width="1.15" fill="#949494" fill-opacity="0.39"/><circle cx="12.4" cy="166.1" r="1.3" stroke="#949494" stroke-opacity="0.61" stroke-width="1.15" fill="#949494" fill-opacity="0.28"/><circle cx="102.0" cy="41.9" r="1.6" stroke="#949494" stroke-opacity="0.87" stroke-width="1.15" fill="#949494" fill-opacity="0.39"/><circle cx="8.4" cy="44.6" r="2.1" stroke="#949494" stroke-opacity="0.65" stroke-width="1.15" fill="#949494" fill-opacity="0.29"/><circle cx="89.6" cy="209.9" r="1.9" stroke="#949494" stroke-opacity="0.50" stroke-width="1.15" fill="#949494" fill-opacity="0.22"/><circle cx="137.5" cy="41.5" r="1.9" stroke="#949494" stroke-opacity="0.71" stroke-width="1.15" fill="#949494" fill-opacity="0.32"/><circle cx="183.7" cy="14.9" r="2.0" stroke="#949494" stroke-opacity="0.53" stroke-width="1.15" fill="#949494" fill-opacity="0.24"/><circle cx="195.4" cy="101.6" r="2.0" stroke="#949494" stroke-opacity="0.46" stroke-width="1.15" fill="#949494" fill-opacity="0.21"/><circle cx="12.4" cy="107.7" r="2.0" stroke="#949494" stroke-opacity="0.66" stroke-width="1.15" fill="#949494" fill-opacity="0.30"/><circle cx="116.7" cy="37.8" r="1.7" stroke="#949494" stroke-opacity="0.63" stroke-width="1.15" fill="#949494" fill-opacity="0.29"/><circle cx="204.2" cy="170.4" r="1.6" stroke="#949494" stroke-opacity="0.48" stroke-width="1.15" fill="#949494" fill-opacity="0.22"/><circle cx="33.6" cy="223.4" r="1.7" stroke="#949494" stroke-opacity="0.52" stroke-width="1.15" fill="#949494" fill-opacity="0.24"/><circle cx="186.5" cy="49.7" r="1.6" stroke="#949494" stroke-opacity="0.88" stroke-width="1.15" fill="#949494" fill-opacity="0.40"/><circle cx="23.8" cy="23.7" r="1.2" stroke="#949494" stroke-opacity="0.48" stroke-width="1.15" fill="#949494" fill-opacity="0.22"/><circle cx="86.1" cy="74.0" r="1.5" stroke="#949494" stroke-opacity="0.41" stroke-width="1.15" fill="#949494" fill-opacity="0.18"/><circle cx="112.0" cy="102.4" r="1.9" stroke="#949494" stroke-opacity="0.57" stroke-width="1.15" fill="#949494" fill-opacity="0.26"/><circle cx="133.7" cy="72.0" r="1.9" stroke="#949494" stroke-opacity="0.50" stroke-width="1.15" fill="#949494" fill-opacity="0.22"/><circle cx="112.6" cy="102.5" r="1.6" stroke="#949494" stroke-opacity="0.70" stroke-width="1.15" fill="#949494" fill-opacity="0.31"/><circle cx="123.3" cy="72.8" r="1.9" stroke="#949494" stroke-opacity="0.92" stroke-width="1.15" fill="#949494" fill-opacity="0.42"/><circle cx="128.6" cy="146.2" r="1.9" stroke="#949494" stroke-opacity="0.58" stroke-width="1.15" fill="#949494" fill-opacity="0.26"/><circle cx="136.2" cy="106.4" r="1.6" stroke="#949494" stroke-opacity="0.62" stroke-width="1.15" fill="#949494" fill-opacity="0.28"/><circle cx="123.3" cy="50.2" r="1.4" stroke="#949494" stroke-opacity="0.51" stroke-width="1.15" fill="#949494" fill-opacity="0.23"/><circle cx="136.7" cy="56.4" r="1.9" stroke="#949494" stroke-opacity="0.90" stroke-width="1.15" fill="#949494" fill-opacity="0.40"/><circle cx="174.7" cy="75.5" r="2.0" stroke="#949494" stroke-opacity="0.59" stroke-width="1.15" fill="#949494" fill-opacity="0.27"/><circle cx="83.2" cy="136.9" r="1.8" stroke="#949494" stroke-opacity="0.62" stroke-width="1.15" fill="#949494" fill-opacity="0.28"/><circle cx="180.9" cy="196.3" r="1.5" stroke="#949494" stroke-opacity="0.52" stroke-width="1.15" fill="#949494" fill-opacity="0.24"/><circle cx="91.4" cy="160.7" r="1.8" stroke="#949494" stroke-opacity="0.50" stroke-width="1.15" fill="#949494" fill-opacity="0.22"/><circle cx="89.4" cy="207.4" r="2.1" stroke="#949494" stroke-opacity="0.73" stroke-width="1.15" fill="#949494" fill-opacity="0.33"/><circle cx="179.4" cy="193.2" r="1.4" stroke="#949494" stroke-opacity="0.44" stroke-width="1.15" fill="#949494" fill-opacity="0.20"/><circle cx="140.6" cy="88.5" r="1.8" stroke="#949494" stroke-opacity="0.56" stroke-width="1.15" fill="#949494" fill-opacity="0.25"/><circle cx="99.8" cy="185.9" r="1.3" stroke="#949494" stroke-opacity="0.62" stroke-width="1.15" fill="#949494" fill-opacity="0.28"/><circle cx="35.2" cy="122.7" r="1.9" stroke="#949494" stroke-opacity="0.94" stroke-width="1.15" fill="#949494" fill-opacity="0.42"/><circle cx="173.3" cy="33.2" r="1.6" stroke="#949494" stroke-opacity="0.70" stroke-width="1.15" fill="#949494" fill-opacity="0.31"/><circle cx="146.7" cy="161.2" r="2.1" stroke="#949494" stroke-opacity="0.92" stroke-width="1.15" fill="#949494" fill-opacity="0.41"/><circle cx="48.0" cy="36.4" r="2.1" stroke="#949494" stroke-opacity="0.49" stroke-width="1.15" fill="#949494" fill-opacity="0.22"/><circle cx="222.7" cy="27.6" r="1.7" stroke="#949494" stroke-opacity="0.47" stroke-width="1.15" fill="#949494" fill-opacity="0.21"/><circle cx="30.8" cy="76.8" r="1.9" stroke="#949494" stroke-opacity="0.79" stroke-width="1.15" fill="#949494" fill-opacity="0.35"/><circle cx="73.0" cy="31.5" r="1.5" stroke="#949494" stroke-opacity="0.50" stroke-width="1.15" fill="#949494" fill-opacity="0.22"/><circle cx="54.1" cy="114.3" r="1.6" stroke="#949494" stroke-opacity="0.91" stroke-width="1.15" fill="#949494" fill-opacity="0.41"/><circle cx="20.6" cy="122.6" r="1.7" stroke="#949494" stroke-opacity="0.48" stroke-width="1.15" fill="#949494" fill-opacity="0.22"/><circle cx="82.9" cy="31.7" r="2.0" stroke="#949494" stroke-opacity="0.59" stroke-width="1.15" fill="#949494" fill-opacity="0.27"/><circle cx="14.9" cy="109.3" r="1.7" stroke="#949494" stroke-opacity="0.89" stroke-width="1.15" fill="#949494" fill-opacity="0.40"/><circle cx="165.4" cy="47.4" r="2.0" stroke="#949494" stroke-opacity="0.40" stroke-width="1.15" fill="#949494" fill-opacity="0.18"/><circle cx="160.4" cy="9.7" r="1.9" stroke="#949494" stroke-opacity="0.50" stroke-width="1.15" fill="#949494" fill-opacity="0.23"/><circle cx="183.4" cy="187.1" r="1.9" stroke="#949494" stroke-opacity="0.46" stroke-width="1.15" fill="#949494" fill-opacity="0.21"/><circle cx="92.1" cy="24.1" r="1.8" stroke="#949494" stroke-opacity="0.95" stroke-width="1.15" fill="#949494" fill-opacity="0.43"/><circle cx="120.2" cy="150.0" r="1.8" stroke="#949494" stroke-opacity="0.48" stroke-width="1.15" fill="#949494" fill-opacity="0.22"/><circle cx="85.4" cy="80.2" r="1.9" stroke="#949494" stroke-opacity="0.63" stroke-width="1.15" fill="#949494" fill-opacity="0.28"/><circle cx="84.7" cy="126.3" r="1.4" stroke="#949494" stroke-opacity="0.44" stroke-width="1.15" fill="#949494" fill-opacity="0.20"/><circle cx="54.7" cy="4.8" r="1.8" stroke="#949494" stroke-opacity="0.65" stroke-width="1.15" fill="#949494" fill-opacity="0.29"/><circle cx="141.8" cy="130.6" r="1.2" stroke="#949494" stroke-opacity="0.85" stroke-width="1.15" fill="#949494" fill-opacity="0.38"/><circle cx="188.3" cy="1.7" r="1.6" stroke="#949494" stroke-opacity="0.83" stroke-width="1.15" fill="#949494" fill-opacity="0.37"/><circle cx="188.3" cy="231.7" r="1.6" stroke="#949494" stroke-opacity="0.83" stroke-width="1.15" fill="#949494" fill-opacity="0.37"/><circle cx="95.6" cy="197.8" r="1.8" stroke="#949494" stroke-opacity="0.76" stroke-width="1.15" fill="#949494" fill-opacity="0.34"/><circle cx="208.3" cy="179.2" r="1.7" stroke="#949494" stroke-opacity="0.43" stroke-width="1.15" fill="#949494" fill-opacity="0.19"/><circle cx="104.5" cy="158.4" r="1.7" stroke="#949494" stroke-opacity="0.72" stroke-width="1.15" fill="#949494" fill-opacity="0.32"/><circle cx="80.4" cy="193.5" r="1.4" stroke="#949494" stroke-opacity="0.75" stroke-width="1.15" fill="#949494" fill-opacity="0.34"/><circle cx="100.5" cy="34.2" r="1.2" stroke="#949494" stroke-opacity="0.47" stroke-width="1.15" fill="#949494" fill-opacity="0.21"/><circle cx="66.3" cy="108.6" r="1.2" stroke="#949494" stroke-opacity="0.44" stroke-width="1.15" fill="#949494" fill-opacity="0.20"/><circle cx="183.2" cy="225.5" r="1.6" stroke="#949494" stroke-opacity="0.66" stroke-width="1.15" fill="#949494" fill-opacity="0.30"/><circle cx="138.6" cy="22.3" r="1.7" stroke="#949494" stroke-opacity="0.77" stroke-width="1.15" fill="#949494" fill-opacity="0.35"/><circle cx="217.2" cy="147.9" r="1.7" stroke="#949494" stroke-opacity="0.63" stroke-width="1.15" fill="#949494" fill-opacity="0.28"/><circle cx="209.7" cy="120.4" r="1.6" stroke="#949494" stroke-opacity="0.80" stroke-width="1.15" fill="#949494" fill-opacity="0.36"/><circle cx="100.7" cy="15.5" r="1.7" stroke="#949494" stroke-opacity="0.88" stroke-width="1.15" fill="#949494" fill-opacity="0.39"/><circle cx="84.9" cy="22.1" r="1.3" stroke="#949494" stroke-opacity="0.90" stroke-width="1.15" fill="#949494" fill-opacity="0.40"/><circle cx="25.6" cy="150.5" r="1.3" stroke="#949494" stroke-opacity="0.68" stroke-width="1.15" fill="#949494" fill-opacity="0.31"/><circle cx="209.6" cy="53.9" r="1.5" stroke="#949494" stroke-opacity="0.74" stroke-width="1.15" fill="#949494" fill-opacity="0.33"/><circle cx="131.9" cy="128.9" r="1.6" stroke="#949494" stroke-opacity="0.42" stroke-width="1.15" fill="#949494" fill-opacity="0.19"/><circle cx="136.9" cy="63.7" r="1.8" stroke="#949494" stroke-opacity="0.64" stroke-width="1.15" fill="#949494" fill-opacity="0.29"/><circle cx="61.8" cy="229.0" r="1.5" stroke="#949494" stroke-opacity="0.93" stroke-width="1.15" fill="#949494" fill-opacity="0.42"/><circle cx="61.8" cy="-1.0" r="1.5" stroke="#949494" stroke-opacity="0.93" stroke-width="1.15" fill="#949494" fill-opacity="0.42"/><circle cx="109.9" cy="122.8" r="1.4" stroke="#949494" stroke-opacity="0.50" stroke-width="1.15" fill="#949494" fill-opacity="0.22"/><circle cx="162.4" cy="104.8" r="1.7" stroke="#949494" stroke-opacity="0.50" stroke-width="1.15" fill="#949494" fill-opacity="0.23"/><circle cx="117.3" cy="151.5" r="1.9" stroke="#949494" stroke-opacity="0.77" stroke-width="1.15" fill="#949494" fill-opacity="0.34"/><circle cx="95.2" cy="157.6" r="1.7" stroke="#949494" stroke-opacity="0.66" stroke-width="1.15" fill="#949494" fill-opacity="0.30"/><circle cx="145.0" cy="70.5" r="1.3" stroke="#949494" stroke-opacity="0.48" stroke-width="1.15" fill="#949494" fill-opacity="0.22"/><circle cx="223.7" cy="205.3" r="1.9" stroke="#949494" stroke-opacity="0.54" stroke-width="1.15" fill="#949494" fill-opacity="0.24"/><circle cx="192.9" cy="181.6" r="1.7" stroke="#949494" stroke-opacity="0.57" stroke-width="1.15" fill="#949494" fill-opacity="0.25"/><circle cx="24.6" cy="229.5" r="2.1" stroke="#949494" stroke-opacity="0.87" stroke-width="1.15" fill="#949494" fill-opacity="0.39"/><circle cx="24.6" cy="-0.5" r="2.1" stroke="#949494" stroke-opacity="0.87" stroke-width="1.15" fill="#949494" fill-opacity="0.39"/><circle cx="102.5" cy="167.8" r="2.0" stroke="#949494" stroke-opacity="0.70" stroke-width="1.15" fill="#949494" fill-opacity="0.31"/><circle cx="28.8" cy="224.5" r="1.7" stroke="#949494" stroke-opacity="0.82" stroke-width="1.15" fill="#949494" fill-opacity="0.37"/><circle cx="143.2" cy="14.9" r="1.6" stroke="#949494" stroke-opacity="0.41" stroke-width="1.15" fill="#949494" fill-opacity="0.18"/><circle cx="61.2" cy="221.2" r="1.8" stroke="#949494" stroke-opacity="0.71" stroke-width="1.15" fill="#949494" fill-opacity="0.32"/><circle cx="25.8" cy="157.6" r="1.7" stroke="#949494" stroke-opacity="0.75" stroke-width="1.15" fill="#949494" fill-opacity="0.34"/><circle cx="158.3" cy="213.4" r="1.6" stroke="#949494" stroke-opacity="0.74" stroke-width="1.15" fill="#949494" fill-opacity="0.33"/><circle cx="121.8" cy="135.5" r="1.8" stroke="#949494" stroke-opacity="0.50" stroke-width="1.15" fill="#949494" fill-opacity="0.23"/><circle cx="12.8" cy="26.8" r="1.2" stroke="#949494" stroke-opacity="0.71" stroke-width="1.15" fill="#949494" fill-opacity="0.32"/><circle cx="70.2" cy="180.5" r="1.3" stroke="#949494" stroke-opacity="0.48" stroke-width="1.15" fill="#949494" fill-opacity="0.22"/><circle cx="199.1" cy="20.6" r="1.5" stroke="#949494" stroke-opacity="0.78" stroke-width="1.15" fill="#949494" fill-opacity="0.35"/><circle cx="129.4" cy="61.4" r="1.3" stroke="#949494" stroke-opacity="0.72" stroke-width="1.15" fill="#949494" fill-opacity="0.32"/><circle cx="57.1" cy="196.9" r="1.4" stroke="#949494" stroke-opacity="0.91" stroke-width="1.15" fill="#949494" fill-opacity="0.41"/><circle cx="5.0" cy="140.5" r="1.5" stroke="#949494" stroke-opacity="0.66" stroke-width="1.15" fill="#949494" fill-opacity="0.30"/><circle cx="100.4" cy="186.1" r="1.4" stroke="#949494" stroke-opacity="0.82" stroke-width="1.15" fill="#949494" fill-opacity="0.37"/><circle cx="7.8" cy="146.5" r="1.9" stroke="#949494" stroke-opacity="0.64" stroke-width="1.15" fill="#949494" fill-opacity="0.29"/><circle cx="195.3" cy="81.6" r="1.5" stroke="#949494" stroke-opacity="0.90" stroke-width="1.15" fill="#949494" fill-opacity="0.41"/><circle cx="227.8" cy="181.5" r="1.4" stroke="#949494" stroke-opacity="0.92" stroke-width="1.15" fill="#949494" fill-opacity="0.41"/><circle cx="-2.2" cy="181.5" r="1.4" stroke="#949494" stroke-opacity="0.92" stroke-width="1.15" fill="#949494" fill-opacity="0.41"/><circle cx="84.1" cy="199.6" r="1.5" stroke="#949494" stroke-opacity="0.52" stroke-width="1.15" fill="#949494" fill-opacity="0.23"/><circle cx="59.3" cy="158.9" r="2.1" stroke="#949494" stroke-opacity="0.69" stroke-width="1.15" fill="#949494" fill-opacity="0.31"/><circle cx="24.7" cy="157.5" r="2.0" stroke="#949494" stroke-opacity="0.83" stroke-width="1.15" fill="#949494" fill-opacity="0.37"/><circle cx="0.4" cy="71.8" r="1.9" stroke="#949494" stroke-opacity="0.79" stroke-width="1.15" fill="#949494" fill-opacity="0.35"/><circle cx="230.4" cy="71.8" r="1.9" stroke="#949494" stroke-opacity="0.79" stroke-width="1.15" fill="#949494" fill-opacity="0.35"/><circle cx="229.1" cy="206.6" r="1.9" stroke="#949494" stroke-opacity="0.78" stroke-width="1.15" fill="#949494" fill-opacity="0.35"/><circle cx="-0.9" cy="206.6" r="1.9" stroke="#949494" stroke-opacity="0.78" stroke-width="1.15" fill="#949494" fill-opacity="0.35"/><circle cx="87.5" cy="8.1" r="1.9" stroke="#949494" stroke-opacity="0.65" stroke-width="1.15" fill="#949494" fill-opacity="0.29"/><circle cx="199.0" cy="30.3" r="2.0" stroke="#949494" stroke-opacity="0.75" stroke-width="1.15" fill="#949494" fill-opacity="0.34"/><circle cx="203.8" cy="161.3" r="1.6" stroke="#949494" stroke-opacity="0.68" stroke-width="1.15" fill="#949494" fill-opacity="0.31"/><circle cx="22.6" cy="55.8" r="1.7" stroke="#949494" stroke-opacity="0.50" stroke-width="1.15" fill="#949494" fill-opacity="0.22"/><circle cx="82.5" cy="147.9" r="1.7" stroke="#949494" stroke-opacity="0.89" stroke-width="1.15" fill="#949494" fill-opacity="0.40"/><circle cx="99.6" cy="127.3" r="1.6" stroke="#949494" stroke-opacity="0.82" stroke-width="1.15" fill="#949494" fill-opacity="0.37"/><circle cx="143.9" cy="217.4" r="1.3" stroke="#949494" stroke-opacity="0.47" stroke-width="1.15" fill="#949494" fill-opacity="0.21"/><circle cx="67.3" cy="141.7" r="1.8" stroke="#949494" stroke-opacity="0.51" stroke-width="1.15" fill="#949494" fill-opacity="0.23"/><circle cx="62.4" cy="136.9" r="1.4" stroke="#949494" stroke-opacity="0.86" stroke-width="1.15" fill="#949494" fill-opacity="0.39"/><circle cx="24.5" cy="180.0" r="1.3" stroke="#949494" stroke-opacity="0.79" stroke-width="1.15" fill="#949494" fill-opacity="0.36"/><circle cx="179.9" cy="217.0" r="2.0" stroke="#949494" stroke-opacity="0.41" stroke-width="1.15" fill="#949494" fill-opacity="0.19"/><circle cx="152.0" cy="209.4" r="1.9" stroke="#949494" stroke-opacity="0.65" stroke-width="1.15" fill="#949494" fill-opacity="0.29"/><circle cx="172.6" cy="65.3" r="1.9" stroke="#949494" stroke-opacity="0.62" stroke-width="1.15" fill="#949494" fill-opacity="0.28"/><circle cx="223.3" cy="6.4" r="1.7" stroke="#949494" stroke-opacity="0.47" stroke-width="1.15" fill="#949494" fill-opacity="0.21"/><circle cx="176.2" cy="223.2" r="1.6" stroke="#949494" stroke-opacity="0.86" stroke-width="1.15" fill="#949494" fill-opacity="0.39"/><circle cx="53.6" cy="6.5" r="1.9" stroke="#949494" stroke-opacity="0.63" stroke-width="1.15" fill="#949494" fill-opacity="0.28"/><circle cx="19.3" cy="154.7" r="2.0" stroke="#949494" stroke-opacity="0.45" stroke-width="1.15" fill="#949494" fill-opacity="0.20"/><circle cx="140.5" cy="80.0" r="1.2" stroke="#949494" stroke-opacity="0.44" stroke-width="1.15" fill="#949494" fill-opacity="0.20"/><circle cx="10.4" cy="70.5" r="1.5" stroke="#949494" stroke-opacity="0.70" stroke-width="1.15" fill="#949494" fill-opacity="0.31"/><circle cx="142.8" cy="195.6" r="2.0" stroke="#949494" stroke-opacity="0.49" stroke-width="1.15" fill="#949494" fill-opacity="0.22"/><circle cx="144.4" cy="201.6" r="1.4" stroke="#949494" stroke-opacity="0.73" stroke-width="1.15" fill="#949494" fill-opacity="0.33"/><circle cx="227.3" cy="145.9" r="1.8" stroke="#949494" stroke-opacity="0.57" stroke-width="1.15" fill="#949494" fill-opacity="0.26"/><circle cx="-2.7" cy="145.9" r="1.8" stroke="#949494" stroke-opacity="0.57" stroke-width="1.15" fill="#949494" fill-opacity="0.26"/><circle cx="228.3" cy="191.2" r="1.5" stroke="#949494" stroke-opacity="0.57" stroke-width="1.15" fill="#949494" fill-opacity="0.25"/><circle cx="-1.7" cy="191.2" r="1.5" stroke="#949494" stroke-opacity="0.57" stroke-width="1.15" fill="#949494" fill-opacity="0.25"/><circle cx="1.1" cy="110.7" r="2.0" stroke="#949494" stroke-opacity="0.83" stroke-width="1.15" fill="#949494" fill-opacity="0.37"/><circle cx="231.1" cy="110.7" r="2.0" stroke="#949494" stroke-opacity="0.83" stroke-width="1.15" fill="#949494" fill-opacity="0.37"/><circle cx="33.9" cy="55.6" r="1.3" stroke="#949494" stroke-opacity="0.54" stroke-width="1.15" fill="#949494" fill-opacity="0.24"/><circle cx="46.6" cy="37.9" r="1.7" stroke="#949494" stroke-opacity="0.90" stroke-width="1.15" fill="#949494" fill-opacity="0.41"/><circle cx="196.6" cy="142.9" r="1.5" stroke="#949494" stroke-opacity="0.90" stroke-width="1.15" fill="#949494" fill-opacity="0.40"/><circle cx="48.5" cy="8.9" r="1.4" stroke="#949494" stroke-opacity="0.83" stroke-width="1.15" fill="#949494" fill-opacity="0.38"/><circle cx="161.2" cy="71.5" r="1.4" stroke="#949494" stroke-opacity="0.75" stroke-width="1.15" fill="#949494" fill-opacity="0.34"/><circle cx="117.6" cy="182.6" r="1.6" stroke="#949494" stroke-opacity="0.45" stroke-width="1.15" fill="#949494" fill-opacity="0.20"/><circle cx="16.2" cy="53.1" r="1.7" stroke="#949494" stroke-opacity="0.79" stroke-width="1.15" fill="#949494" fill-opacity="0.36"/><circle cx="127.9" cy="2.2" r="2.1" stroke="#949494" stroke-opacity="0.65" stroke-width="1.15" fill="#949494" fill-opacity="0.29"/><circle cx="127.9" cy="232.2" r="2.1" stroke="#949494" stroke-opacity="0.65" stroke-width="1.15" fill="#949494" fill-opacity="0.29"/><circle cx="124.3" cy="44.2" r="1.4" stroke="#949494" stroke-opacity="0.52" stroke-width="1.15" fill="#949494" fill-opacity="0.23"/><circle cx="139.5" cy="209.0" r="1.4" stroke="#949494" stroke-opacity="0.59" stroke-width="1.15" fill="#949494" fill-opacity="0.27"/><circle cx="66.1" cy="6.7" r="1.2" stroke="#949494" stroke-opacity="0.83" stroke-width="1.15" fill="#949494" fill-opacity="0.37"/><circle cx="224.8" cy="9.7" r="1.3" stroke="#949494" stroke-opacity="0.65" stroke-width="1.15" fill="#949494" fill-opacity="0.29"/><circle cx="70.0" cy="56.7" r="2.0" stroke="#949494" stroke-opacity="0.51" stroke-width="1.15" fill="#949494" fill-opacity="0.23"/><circle cx="44.8" cy="208.4" r="1.8" stroke="#949494" stroke-opacity="0.78" stroke-width="1.15" fill="#949494" fill-opacity="0.35"/><circle cx="153.7" cy="5.9" r="2.1" stroke="#949494" stroke-opacity="0.42" stroke-width="1.15" fill="#949494" fill-opacity="0.19"/><circle cx="52.3" cy="109.3" r="2.0" stroke="#949494" stroke-opacity="0.92" stroke-width="1.15" fill="#949494" fill-opacity="0.41"/><circle cx="2.0" cy="31.8" r="1.2" stroke="#949494" stroke-opacity="0.48" stroke-width="1.15" fill="#949494" fill-opacity="0.21"/><circle cx="232.0" cy="31.8" r="1.2" stroke="#949494" stroke-opacity="0.48" stroke-width="1.15" fill="#949494" fill-opacity="0.21"/><circle cx="210.2" cy="19.5" r="1.7" stroke="#949494" stroke-opacity="0.51" stroke-width="1.15" fill="#949494" fill-opacity="0.23"/><circle cx="1.8" cy="64.3" r="1.4" stroke="#949494" stroke-opacity="0.70" stroke-width="1.15" fill="#949494" fill-opacity="0.31"/><circle cx="231.8" cy="64.3" r="1.4" stroke="#949494" stroke-opacity="0.70" stroke-width="1.15" fill="#949494" fill-opacity="0.31"/><circle cx="201.0" cy="121.9" r="1.7" stroke="#949494" stroke-opacity="0.55" stroke-width="1.15" fill="#949494" fill-opacity="0.25"/><circle cx="41.4" cy="110.2" r="1.6" stroke="#949494" stroke-opacity="0.90" stroke-width="1.15" fill="#949494" fill-opacity="0.40"/><circle cx="47.9" cy="5.9" r="0.9" fill="#101010"/><circle cx="72.9" cy="50.3" r="1.2" fill="#101010"/><circle cx="202.5" cy="167.5" r="1.3" fill="#101010"/><circle cx="191.3" cy="202.2" r="0.9" fill="#101010"/><circle cx="158.5" cy="30.2" r="1.2" fill="#101010"/><circle cx="89.6" cy="62.5" r="0.9" fill="#101010"/><circle cx="44.7" cy="162.5" r="1.6" fill="#101010"/><circle cx="209.2" cy="5.3" r="1.3" fill="#101010"/><circle cx="43.9" cy="119.8" r="1.3" fill="#101010"/><circle cx="37.3" cy="20.2" r="1.2" fill="#101010"/><circle cx="12.1" cy="193.4" r="1.5" fill="#101010"/><circle cx="3.4" cy="184.2" r="1.5" fill="#101010"/><circle cx="233.4" cy="184.2" r="1.5" fill="#101010"/><circle cx="9.1" cy="135.0" r="1.2" fill="#101010"/><circle cx="40.3" cy="188.3" r="1.3" fill="#101010"/><circle cx="186.8" cy="215.1" r="1.6" fill="#101010"/><circle cx="152.4" cy="200.8" r="0.9" fill="#101010"/><circle cx="77.7" cy="109.2" r="1.3" fill="#101010"/><circle cx="84.5" cy="187.9" r="1.3" fill="#101010"/><circle cx="194.7" cy="101.9" r="1.6" fill="#101010"/><circle cx="81.8" cy="228.4" r="1.3" fill="#101010"/><circle cx="81.8" cy="-1.6" r="1.3" fill="#101010"/><circle cx="86.8" cy="142.7" r="1.0" fill="#101010"/><circle cx="158.0" cy="138.0" r="1.5" fill="#101010"/><circle cx="17.4" cy="96.5" r="1.3" fill="#101010"/><circle cx="14.0" cy="175.4" r="1.5" fill="#101010"/><circle cx="143.9" cy="175.8" r="1.6" fill="#101010"/><circle cx="104.6" cy="117.7" r="1.5" fill="#101010"/><circle cx="155.7" cy="63.6" r="1.3" fill="#101010"/><circle cx="176.5" cy="194.2" r="1.0" fill="#101010"/><circle cx="38.4" cy="158.1" r="1.4" fill="#101010"/><circle cx="167.8" cy="112.5" r="1.2" fill="#101010"/><circle cx="220.9" cy="58.6" r="1.1" fill="#101010"/><circle cx="5.7" cy="19.4" r="1.3" fill="#101010"/><circle cx="152.4" cy="50.3" r="1.4" fill="#101010"/><circle cx="39.2" cy="85.6" r="1.3" fill="#101010"/><circle cx="178.8" cy="104.2" r="1.5" fill="#101010"/><circle cx="108.6" cy="152.7" r="1.5" fill="#101010"/><circle cx="129.4" cy="129.4" r="1.6" fill="#101010"/><circle cx="7.8" cy="4.3" r="0.9" fill="#101010"/><circle cx="71.5" cy="123.7" r="1.3" fill="#101010"/><circle cx="156.7" cy="3.9" r="1.5" fill="#101010"/><circle cx="54.6" cy="222.5" r="1.1" fill="#101010"/><circle cx="194.3" cy="163.9" r="0.9" fill="#101010"/><circle cx="117.8" cy="90.6" r="1.6" fill="#101010"/><circle cx="53.4" cy="90.9" r="1.0" fill="#101010"/><circle cx="1.1" cy="123.8" r="1.3" fill="#101010"/><circle cx="231.1" cy="123.8" r="1.3" fill="#101010"/><circle cx="37.4" cy="192.6" r="1.1" fill="#101010"/><circle cx="215.6" cy="154.9" r="1.6" fill="#101010"/><circle cx="100.7" cy="192.8" r="1.3" fill="#101010"/><circle cx="164.4" cy="94.4" r="1.3" fill="#101010"/><circle cx="62.5" cy="77.5" r="1.5" fill="#101010"/><circle cx="18.0" cy="191.4" r="1.4" fill="#101010"/><circle cx="37.3" cy="99.0" r="1.5" fill="#101010"/><circle cx="117.0" cy="116.8" r="1.3" fill="#101010"/><circle cx="39.5" cy="227.9" r="1.4" fill="#101010"/><circle cx="39.5" cy="-2.1" r="1.4" fill="#101010"/><circle cx="65.7" cy="79.9" r="1.4" fill="#101010"/><circle cx="200.1" cy="126.8" r="1.1" fill="#101010"/><circle cx="82.5" cy="125.3" r="1.5" fill="#101010"/><circle cx="161.9" cy="51.9" r="0.9" fill="#101010"/><circle cx="151.2" cy="60.6" r="1.5" fill="#101010"/><circle cx="36.9" cy="229.1" r="1.5" fill="#101010"/><circle cx="36.9" cy="-0.9" r="1.5" fill="#101010"/><circle cx="58.0" cy="3.6" r="1.5" fill="#101010"/><circle cx="25.4" cy="35.0" r="1.2" fill="#101010"/><circle cx="39.7" cy="21.8" r="1.3" fill="#101010"/><circle cx="150.6" cy="180.6" r="0.9" fill="#101010"/><circle cx="11.8" cy="108.6" r="1.4" fill="#101010"/><circle cx="47.8" cy="137.0" r="1.0" fill="#101010"/><circle cx="206.7" cy="200.9" r="1.6" fill="#101010"/><circle cx="89.5" cy="19.0" r="1.5" fill="#101010"/><circle cx="101.5" cy="80.4" r="1.2" fill="#101010"/><circle cx="163.1" cy="167.5" r="1.2" fill="#101010"/><circle cx="61.3" cy="34.7" r="0.9" fill="#101010"/><circle cx="221.3" cy="222.5" r="0.9" fill="#101010"/><circle cx="136.4" cy="223.8" r="1.3" fill="#101010"/><circle cx="223.3" cy="33.4" r="1.4" fill="#101010"/><circle cx="193.5" cy="26.4" r="1.0" fill="#101010"/><circle cx="217.7" cy="53.6" r="1.3" fill="#101010"/><circle cx="209.7" cy="163.6" r="1.4" fill="#101010"/><circle cx="68.8" cy="195.4" r="1.0" fill="#101010"/><circle cx="92.0" cy="112.5" r="1.4" fill="#101010"/><circle cx="7.8" cy="17.3" r="1.2" fill="#101010"/><circle cx="35.8" cy="209.2" r="1.2" fill="#101010"/><circle cx="135.5" cy="98.0" r="1.5" fill="#101010"/><circle cx="212.9" cy="207.1" r="1.0" fill="#101010"/><circle cx="140.5" cy="178.7" r="1.5" fill="#101010"/><circle cx="127.9" cy="108.1" r="1.0" fill="#101010"/><circle cx="1.9" cy="5.5" r="1.1" fill="#101010"/><circle cx="231.9" cy="5.5" r="1.1" fill="#101010"/><circle cx="165.7" cy="92.5" r="1.3" fill="#101010"/><circle cx="62.4" cy="223.9" r="1.5" fill="#101010"/><circle cx="60.7" cy="88.4" r="1.0" fill="#101010"/><circle cx="90.9" cy="55.5" r="1.4" fill="#101010"/><circle cx="71.9" cy="157.8" r="0.9" fill="#101010"/><circle cx="162.6" cy="146.6" r="1.1" fill="#101010"/><circle cx="177.3" cy="198.8" r="1.5" fill="#101010"/><circle cx="159.7" cy="101.0" r="1.3" fill="#101010"/><circle cx="175.3" cy="72.6" r="1.5" fill="#101010"/><circle cx="180.9" cy="159.7" r="1.4" fill="#101010"/><circle cx="11.8" cy="187.0" r="1.2" fill="#101010"/><circle cx="157.9" cy="149.7" r="1.2" fill="#101010"/><circle cx="169.2" cy="197.3" r="1.6" fill="#101010"/><circle cx="4.0" cy="210.4" r="1.4" fill="#101010"/><circle cx="137.0" cy="175.3" r="1.1" fill="#101010"/><circle cx="93.0" cy="9.3" r="1.5" fill="#101010"/><circle cx="185.7" cy="118.8" r="1.3" fill="#101010"/><circle cx="189.5" cy="38.2" r="1.3" fill="#101010"/><circle cx="166.3" cy="134.0" r="1.6" fill="#101010"/><circle cx="59.0" cy="156.3" r="1.4" fill="#101010"/><circle cx="89.9" cy="216.3" r="1.2" fill="#101010"/><circle cx="33.7" cy="39.2" r="1.2" fill="#101010"/><circle cx="227.0" cy="210.4" r="1.5" fill="#101010"/><circle cx="-3.0" cy="210.4" r="1.5" fill="#101010"/><circle cx="152.5" cy="115.8" r="1.3" fill="#101010"/><circle cx="139.2" cy="219.6" r="1.2" fill="#101010"/><circle cx="90.1" cy="167.7" r="1.5" fill="#101010"/><circle cx="170.0" cy="36.7" r="1.3" fill="#101010"/><circle cx="61.8" cy="63.1" r="1.1" fill="#101010"/><circle cx="2.0" cy="27.5" r="1.4" fill="#101010"/><circle cx="232.0" cy="27.5" r="1.4" fill="#101010"/><circle cx="183.1" cy="24.6" r="1.6" fill="#101010"/><circle cx="107.1" cy="180.0" r="0.9" fill="#101010"/><circle cx="18.4" cy="187.3" r="1.0" fill="#101010"/><circle cx="8.6" cy="151.2" r="0.9" fill="#101010"/><circle cx="95.4" cy="187.5" r="1.0" fill="#101010"/><circle cx="193.8" cy="209.3" r="1.6" fill="#101010"/><circle cx="141.3" cy="188.9" r="1.0" fill="#101010"/><circle cx="132.0" cy="201.3" r="1.5" fill="#101010"/><circle cx="39.5" cy="190.6" r="1.2" fill="#101010"/><circle cx="117.9" cy="183.4" r="1.4" fill="#101010"/><circle cx="75.0" cy="196.9" r="1.6" fill="#101010"/><circle cx="186.0" cy="11.5" r="0.9" fill="#101010"/><circle cx="132.4" cy="22.9" r="1.0" fill="#101010"/><circle cx="200.4" cy="10.9" r="1.1" fill="#101010"/><circle cx="70.1" cy="214.5" r="1.6" fill="#101010"/><circle cx="180.5" cy="105.5" r="1.0" fill="#101010"/><circle cx="221.7" cy="51.4" r="1.3" fill="#101010"/><circle cx="179.1" cy="117.2" r="1.5" fill="#101010"/><circle cx="216.0" cy="84.2" r="1.4" fill="#101010"/><circle cx="21.7" cy="99.1" r="1.4" fill="#101010"/><circle cx="63.2" cy="85.8" r="1.4" fill="#101010"/><circle cx="48.5" cy="212.1" r="1.0" fill="#101010"/><circle cx="51.3" cy="141.3" r="1.1" fill="#101010"/><circle cx="193.2" cy="82.5" r="1.0" fill="#101010"/><circle cx="153.9" cy="98.3" r="1.3" fill="#101010"/><circle cx="25.7" cy="12.2" r="1.1" fill="#101010"/><circle cx="118.5" cy="45.8" r="1.0" fill="#101010"/><circle cx="192.3" cy="55.7" r="1.1" fill="#101010"/><circle cx="200.4" cy="229.5" r="1.4" fill="#101010"/><circle cx="200.4" cy="-0.5" r="1.4" fill="#101010"/><circle cx="32.3" cy="175.9" r="1.0" fill="#101010"/><circle cx="183.9" cy="63.5" r="1.1" fill="#101010"/><circle cx="98.0" cy="32.7" r="1.4" fill="#101010"/><circle cx="189.3" cy="153.3" r="1.5" fill="#101010"/><circle cx="37.1" cy="62.7" r="1.5" fill="#101010"/><circle cx="75.1" cy="171.8" r="1.3" fill="#101010"/><circle cx="34.3" cy="50.9" r="1.5" fill="#101010"/><circle cx="207.4" cy="137.1" r="0.9" fill="#101010"/><circle cx="3.9" cy="215.7" r="1.5" fill="#101010"/><circle cx="160.5" cy="59.7" r="1.5" fill="#101010"/><circle cx="16.8" cy="158.2" r="1.4" fill="#101010"/><circle cx="85.2" cy="186.9" r="1.0" fill="#101010"/><circle cx="221.3" cy="214.6" r="1.1" fill="#101010"/><circle cx="75.8" cy="182.8" r="1.1" fill="#101010"/><circle cx="135.4" cy="159.0" r="1.6" fill="#101010"/><circle cx="173.4" cy="63.4" r="1.1" fill="#101010"/><circle cx="17.3" cy="185.0" r="1.5" fill="#101010"/><circle cx="51.3" cy="108.6" r="1.1" fill="#101010"/><circle cx="65.0" cy="6.7" r="1.3" fill="#101010"/><circle cx="218.6" cy="39.3" r="1.4" fill="#101010"/><circle cx="177.8" cy="123.2" r="1.5" fill="#101010"/><circle cx="97.4" cy="142.9" r="0.9" fill="#101010"/><circle cx="35.1" cy="135.0" r="1.5" fill="#101010"/><circle cx="109.1" cy="214.7" r="1.2" fill="#101010"/><circle cx="94.3" cy="180.2" r="1.5" fill="#101010"/><circle cx="207.2" cy="151.7" r="1.1" fill="#101010"/><circle cx="71.0" cy="128.2" r="0.9" fill="#101010"/><circle cx="68.7" cy="181.2" r="1.1" fill="#101010"/><circle cx="149.1" cy="69.9" r="1.0" fill="#101010"/><circle cx="76.7" cy="73.9" r="1.1" fill="#101010"/><circle cx="71.4" cy="211.3" r="1.3" fill="#101010"/><circle cx="114.4" cy="60.8" r="1.1" fill="#101010"/><circle cx="183.8" cy="76.8" r="1.0" fill="#101010"/><circle cx="89.1" cy="154.9" r="1.6" fill="#101010"/><circle cx="191.6" cy="113.8" r="1.0" fill="#101010"/><circle cx="203.8" cy="9.1" r="1.3" fill="#101010"/><circle cx="223.5" cy="72.9" r="1.3" fill="#101010"/><circle cx="70.3" cy="95.6" r="1.0" fill="#101010"/><circle cx="142.0" cy="161.3" r="1.0" fill="#101010"/><circle cx="2.4" cy="55.5" r="1.1" fill="#101010"/><circle cx="232.4" cy="55.5" r="1.1" fill="#101010"/><circle cx="99.9" cy="163.8" r="1.3" fill="#101010"/><circle cx="7.5" cy="4.4" r="1.2" fill="#101010"/><circle cx="38.7" cy="185.9" r="1.4" fill="#101010"/><circle cx="185.0" cy="141.9" r="1.0" fill="#101010"/><circle cx="182.2" cy="66.5" r="1.0" fill="#101010"/><circle cx="8.9" cy="89.8" r="1.6" fill="#101010"/><circle cx="157.4" cy="151.8" r="1.2" fill="#101010"/><circle cx="100.3" cy="209.2" r="1.6" fill="#101010"/><circle cx="76.7" cy="135.2" r="1.2" fill="#101010"/><circle cx="46.7" cy="117.6" r="1.0" fill="#101010"/><circle cx="183.1" cy="93.1" r="1.4" fill="#101010"/><circle cx="179.5" cy="54.2" r="1.6" fill="#101010"/><circle cx="227.0" cy="111.6" r="1.0" fill="#101010"/><circle cx="147.1" cy="156.1" r="1.1" fill="#101010"/><circle cx="178.9" cy="64.8" r="1.1" fill="#101010"/><circle cx="19.6" cy="142.4" r="1.4" fill="#101010"/><circle cx="159.7" cy="70.3" r="1.1" fill="#101010"/><circle cx="12.4" cy="40.4" r="1.1" fill="#101010"/><circle cx="48.0" cy="9.7" r="1.2" fill="#101010"/><circle cx="2.3" cy="115.8" r="0.9" fill="#101010"/><circle cx="232.3" cy="115.8" r="0.9" fill="#101010"/><circle cx="87.8" cy="22.3" r="1.0" fill="#101010"/><circle cx="160.3" cy="16.7" r="1.4" fill="#101010"/><circle cx="156.5" cy="147.4" r="1.3" fill="#101010"/><circle cx="166.1" cy="50.7" r="1.2" fill="#101010"/><circle cx="4.1" cy="1.0" r="1.2" fill="#101010"/><circle cx="4.1" cy="231.0" r="1.2" fill="#101010"/><circle cx="141.9" cy="222.1" r="1.5" fill="#101010"/><circle cx="12.3" cy="211.0" r="1.2" fill="#101010"/><circle cx="95.3" cy="36.6" r="1.0" fill="#101010"/><circle cx="103.9" cy="125.2" r="1.5" fill="#101010"/><circle cx="152.9" cy="44.1" r="1.3" fill="#101010"/><circle cx="188.8" cy="56.9" r="1.1" fill="#101010"/><circle cx="59.3" cy="223.6" r="1.0" fill="#101010"/><circle cx="145.5" cy="83.2" r="1.4" fill="#101010"/><circle cx="115.1" cy="50.4" r="1.5" fill="#101010"/><circle cx="123.5" cy="5.1" r="1.1" fill="#101010"/><circle cx="38.8" cy="74.1" r="1.0" fill="#101010"/><circle cx="148.4" cy="140.0" r="1.2" fill="#101010"/><circle cx="59.2" cy="146.1" r="1.2" fill="#101010"/><circle cx="176.6" cy="198.7" r="1.4" fill="#101010"/><circle cx="216.0" cy="69.3" r="1.5" fill="#101010"/><circle cx="93.3" cy="197.3" r="1.3" fill="#101010"/><circle cx="65.9" cy="64.5" r="1.5" fill="#101010"/><circle cx="111.2" cy="35.1" r="1.3" fill="#101010"/><circle cx="32.5" cy="14.1" r="1.1" fill="#101010"/><circle cx="178.3" cy="47.9" r="1.5" fill="#101010"/><circle cx="9.3" cy="77.5" r="0.9" fill="#101010"/><circle cx="158.2" cy="141.5" r="1.4" fill="#101010"/><circle cx="187.6" cy="208.8" r="1.2" fill="#101010"/><circle cx="84.3" cy="140.0" r="1.2" fill="#101010"/><circle cx="44.5" cy="99.5" r="1.2" fill="#101010"/><circle cx="204.4" cy="18.6" r="1.4" fill="#101010"/><circle cx="162.4" cy="210.2" r="1.3" fill="#101010"/><circle cx="162.2" cy="28.3" r="1.5" fill="#101010"/><circle cx="11.9" cy="139.8" r="1.0" fill="#101010"/><circle cx="52.7" cy="158.1" r="1.2" fill="#101010"/><circle cx="157.8" cy="50.6" r="1.0" fill="#101010"/><circle cx="79.8" cy="116.3" r="1.5" fill="#101010"/><circle cx="199.3" cy="87.0" r="1.6" fill="#101010"/><circle cx="129.5" cy="42.4" r="1.3" fill="#101010"/><circle cx="156.4" cy="175.5" r="1.0" fill="#101010"/><circle cx="223.7" cy="128.1" r="0.9" fill="#101010"/><circle cx="65.7" cy="191.4" r="0.9" fill="#101010"/><circle cx="71.7" cy="156.0" r="1.0" fill="#101010"/><circle cx="165.1" cy="135.6" r="1.1" fill="#101010"/><circle cx="186.4" cy="16.8" r="1.0" fill="#101010"/><circle cx="175.8" cy="138.5" r="1.1" fill="#101010"/><circle cx="90.3" cy="195.1" r="1.0" fill="#101010"/><circle cx="14.8" cy="114.7" r="1.0" fill="#101010"/><circle cx="157.0" cy="56.2" r="1.0" fill="#101010"/><circle cx="141.2" cy="220.7" r="1.3" fill="#101010"/><circle cx="222.2" cy="228.1" r="1.4" fill="#101010"/><circle cx="222.2" cy="-1.9" r="1.4" fill="#101010"/><circle cx="132.0" cy="85.6" r="1.0" fill="#101010"/><circle cx="121.5" cy="41.2" r="1.3" fill="#101010"/><circle cx="99.7" cy="128.1" r="1.3" fill="#101010"/><circle cx="128.8" cy="213.3" r="1.3" fill="#101010"/><circle cx="27.0" cy="203.4" r="1.4" fill="#101010"/><circle cx="84.6" cy="102.1" r="1.3" fill="#101010"/><circle cx="90.1" cy="154.0" r="1.6" fill="#101010"/><circle cx="12.0" cy="211.0" r="1.6" fill="#101010"/><circle cx="198.5" cy="106.6" r="1.4" fill="#101010"/><circle cx="107.3" cy="85.8" r="1.0" fill="#101010"/><circle cx="46.2" cy="109.8" r="1.1" fill="#101010"/><circle cx="47.9" cy="140.1" r="1.1" fill="#101010"/><circle cx="191.4" cy="20.3" r="1.1" fill="#101010"/><circle cx="97.6" cy="49.3" r="1.5" fill="#101010"/><circle cx="113.2" cy="14.2" r="1.0" fill="#101010"/><circle cx="160.7" cy="71.1" r="1.1" fill="#101010"/><circle cx="48.5" cy="2.9" r="1.4" fill="#101010"/><circle cx="48.5" cy="232.9" r="1.4" fill="#101010"/><circle cx="74.9" cy="56.1" r="1.0" fill="#101010"/><circle cx="116.2" cy="169.9" r="1.6" fill="#101010"/><circle cx="214.5" cy="4.0" r="1.2" fill="#101010"/><circle cx="111.6" cy="126.3" r="1.2" fill="#101010"/><circle cx="213.3" cy="136.6" r="1.2" fill="#101010"/><circle cx="221.4" cy="119.1" r="0.9" fill="#101010"/><circle cx="144.2" cy="222.0" r="1.4" fill="#101010"/><circle cx="45.9" cy="192.8" r="0.9" fill="#101010"/><circle cx="194.8" cy="31.0" r="1.5" fill="#101010"/><circle cx="41.0" cy="33.7" r="1.1" fill="#101010"/><circle cx="115.9" cy="159.2" r="1.3" fill="#101010"/><circle cx="16.3" cy="217.8" r="1.5" fill="#101010"/><circle cx="84.3" cy="8.7" r="1.2" fill="#101010"/><circle cx="221.5" cy="219.4" r="1.0" fill="#101010"/><circle cx="45.3" cy="224.7" r="1.1" fill="#101010"/><circle cx="160.1" cy="213.7" r="1.5" fill="#101010"/><circle cx="185.0" cy="140.9" r="1.5" fill="#101010"/><circle cx="54.1" cy="207.9" r="1.0" fill="#101010"/><circle cx="28.4" cy="177.0" r="1.6" fill="#101010"/><circle cx="174.6" cy="143.3" r="1.0" fill="#101010"/><circle cx="121.5" cy="41.1" r="1.3" fill="#101010"/><circle cx="94.2" cy="32.3" r="1.3" fill="#101010"/><circle cx="182.0" cy="164.4" r="1.0" fill="#101010"/><circle cx="215.4" cy="214.4" r="1.2" fill="#101010"/><circle cx="224.9" cy="43.8" r="1.2" fill="#101010"/><circle cx="193.4" cy="19.8" r="1.2" fill="#101010"/><circle cx="2.3" cy="48.7" r="1.1" fill="#101010"/><circle cx="232.3" cy="48.7" r="1.1" fill="#101010"/><circle cx="191.8" cy="143.8" r="1.0" fill="#101010"/><circle cx="183.2" cy="174.6" r="1.1" fill="#101010"/><circle cx="39.9" cy="169.0" r="1.6" fill="#101010"/><circle cx="50.4" cy="75.9" r="1.1" fill="#101010"/><circle cx="222.4" cy="11.7" r="0.9" fill="#101010"/><circle cx="41.8" cy="106.4" r="1.6" fill="#101010"/><circle cx="8.4" cy="183.5" r="1.3" fill="#101010"/><circle cx="204.8" cy="221.7" r="1.4" fill="#101010"/><circle cx="57.5" cy="209.4" r="0.9" fill="#101010"/><circle cx="227.2" cy="95.1" r="1.1" fill="#101010"/><circle cx="-2.8" cy="95.1" r="1.1" fill="#101010"/><circle cx="203.1" cy="114.6" r="1.2" fill="#101010"/><circle cx="70.2" cy="96.4" r="1.1" fill="#101010"/><circle cx="119.1" cy="100.3" r="1.1" fill="#101010"/><circle cx="1.3" cy="34.9" r="1.4" fill="#101010"/><circle cx="231.3" cy="34.9" r="1.4" fill="#101010"/><circle cx="163.0" cy="212.5" r="1.0" fill="#101010"/><circle cx="213.1" cy="204.1" r="1.1" fill="#101010"/><circle cx="219.5" cy="226.3" r="1.5" fill="#101010"/><circle cx="128.1" cy="200.3" r="1.0" fill="#101010"/><circle cx="30.5" cy="31.9" r="1.4" fill="#101010"/><circle cx="220.8" cy="44.7" r="1.0" fill="#101010"/><circle cx="203.6" cy="202.0" r="1.0" fill="#101010"/><circle cx="7.7" cy="64.0" r="1.1" fill="#101010"/><circle cx="1.7" cy="33.4" r="1.5" fill="#101010"/><circle cx="231.7" cy="33.4" r="1.5" fill="#101010"/><circle cx="14.7" cy="104.9" r="1.4" fill="#101010"/><circle cx="164.2" cy="71.2" r="1.0" fill="#101010"/><circle cx="98.0" cy="82.8" r="1.2" fill="#101010"/><circle cx="67.2" cy="109.3" r="1.6" fill="#101010"/><circle cx="1.8" cy="52.9" r="1.5" fill="#101010"/><circle cx="231.8" cy="52.9" r="1.5" fill="#101010"/><circle cx="114.9" cy="180.3" r="1.0" fill="#101010"/><circle cx="227.7" cy="0.6" r="1.5" fill="#101010"/><circle cx="227.7" cy="230.6" r="1.5" fill="#101010"/><circle cx="-2.3" cy="0.6" r="1.5" fill="#101010"/><circle cx="-2.3" cy="230.6" r="1.5" fill="#101010"/><circle cx="56.5" cy="163.7" r="1.5" fill="#101010"/><circle cx="168.9" cy="219.6" r="1.1" fill="#101010"/><circle cx="196.0" cy="142.1" r="1.0" fill="#101010"/><circle cx="50.2" cy="20.8" r="1.5" fill="#101010"/><circle cx="76.0" cy="79.8" r="1.0" fill="#101010"/><circle cx="184.7" cy="127.9" r="1.0" fill="#101010"/><circle cx="182.9" cy="123.4" r="1.5" fill="#101010"/><circle cx="162.3" cy="99.2" r="1.1" fill="#101010"/><circle cx="205.3" cy="41.7" r="1.0" fill="#101010"/><circle cx="197.5" cy="158.1" r="1.5" fill="#101010"/><circle cx="140.5" cy="229.8" r="1.2" fill="#101010"/><circle cx="140.5" cy="-0.2" r="1.2" fill="#101010"/><circle cx="14.6" cy="153.2" r="1.1" fill="#101010"/><circle cx="90.2" cy="84.7" r="1.1" fill="#101010"/><circle cx="118.8" cy="137.7" r="0.9" fill="#101010"/><circle cx="205.4" cy="80.0" r="1.4" fill="#101010"/><circle cx="79.7" cy="27.5" r="1.1" fill="#101010"/><circle cx="51.8" cy="70.0" r="1.4" fill="#101010"/><circle cx="156.1" cy="44.0" r="1.4" fill="#101010"/><circle cx="141.7" cy="37.3" r="1.3" fill="#101010"/><circle cx="13.1" cy="151.9" r="1.1" fill="#101010"/><circle cx="135.6" cy="215.7" r="1.4" fill="#101010"/><circle cx="128.4" cy="131.1" r="1.1" fill="#101010"/><circle cx="107.8" cy="12.6" r="1.2" fill="#101010"/><circle cx="222.7" cy="115.7" r="1.4" fill="#101010"/><circle cx="207.6" cy="130.2" r="1.0" fill="#101010"/><circle cx="227.7" cy="117.0" r="1.2" fill="#101010"/><circle cx="-2.3" cy="117.0" r="1.2" fill="#101010"/><circle cx="14.4" cy="166.3" r="1.5" fill="#101010"/><circle cx="122.4" cy="42.6" r="1.4" fill="#101010"/><circle cx="43.6" cy="79.8" r="1.1" fill="#101010"/><circle cx="121.2" cy="149.4" r="1.3" fill="#101010"/><circle cx="38.0" cy="54.0" r="1.1" fill="#101010"/><circle cx="117.4" cy="221.6" r="1.4" fill="#101010"/><circle cx="197.7" cy="20.8" r="0.9" fill="#101010"/><circle cx="125.3" cy="52.8" r="1.1" fill="#101010"/><circle cx="168.1" cy="21.6" r="1.5" fill="#101010"/><circle cx="94.9" cy="136.6" r="0.9" fill="#101010"/><circle cx="14.3" cy="154.9" r="0.9" fill="#101010"/><circle cx="146.4" cy="71.6" r="1.1" fill="#101010"/><circle cx="219.8" cy="198.5" r="1.1" fill="#101010"/><circle cx="88.5" cy="67.8" r="1.0" fill="#101010"/><circle cx="219.3" cy="149.7" r="1.4" fill="#101010"/><circle cx="97.5" cy="48.0" r="1.3" fill="#101010"/><circle cx="56.5" cy="210.1" r="1.6" fill="#101010"/><circle cx="222.6" cy="49.4" r="1.1" fill="#101010"/><circle cx="198.3" cy="107.0" r="1.3" fill="#101010"/><circle cx="164.2" cy="48.4" r="1.2" fill="#101010"/><circle cx="19.2" cy="7.1" r="1.6" fill="#101010"/><circle cx="166.1" cy="143.0" r="1.0" fill="#101010"/><circle cx="67.9" cy="211.5" r="1.6" fill="#101010"/><circle cx="147.8" cy="212.4" r="1.2" fill="#101010"/><circle cx="194.1" cy="167.4" r="1.1" fill="#101010"/><circle cx="212.0" cy="3.2" r="1.1" fill="#101010"/><circle cx="113.5" cy="215.8" r="1.1" fill="#101010"/><circle cx="25.2" cy="166.2" r="1.4" fill="#101010"/><circle cx="27.6" cy="158.5" r="1.2" fill="#101010"/><circle cx="96.9" cy="216.4" r="1.5" fill="#101010"/><circle cx="224.8" cy="161.5" r="1.2" fill="#101010"/><circle cx="85.9" cy="32.6" r="0.9" fill="#101010"/><circle cx="117.7" cy="36.7" r="1.3" fill="#101010"/><circle cx="48.8" cy="115.6" r="1.5" fill="#101010"/><circle cx="107.0" cy="212.7" r="1.1" fill="#101010"/><circle cx="31.0" cy="162.7" r="1.2" fill="#101010"/><circle cx="153.8" cy="133.1" r="1.2" fill="#101010"/><circle cx="83.6" cy="50.1" r="1.6" fill="#101010"/><circle cx="46.8" cy="106.1" r="1.5" fill="#101010"/><circle cx="187.7" cy="226.0" r="1.3" fill="#101010"/><circle cx="65.4" cy="199.6" r="0.9" fill="#101010"/><circle cx="216.7" cy="103.0" r="1.4" fill="#101010"/><circle cx="205.6" cy="119.3" r="1.5" fill="#101010"/><circle cx="192.9" cy="117.1" r="1.5" fill="#101010"/><circle cx="57.1" cy="36.1" r="1.4" fill="#101010"/><circle cx="189.6" cy="94.7" r="0.9" fill="#101010"/><circle cx="98.7" cy="51.8" r="1.0" fill="#101010"/><circle cx="38.0" cy="138.5" r="1.2" fill="#101010"/><circle cx="183.2" cy="50.6" r="1.3" fill="#101010"/><circle cx="61.7" cy="65.3" r="1.0" fill="#101010"/><circle cx="170.7" cy="64.8" r="1.4" fill="#101010"/><circle cx="158.4" cy="127.5" r="1.4" fill="#101010"/><circle cx="156.8" cy="22.4" r="1.4" fill="#101010"/><circle cx="119.2" cy="187.3" r="1.0" fill="#101010"/><circle cx="13.2" cy="148.7" r="1.1" fill="#101010"/><circle cx="226.5" cy="70.4" r="1.2" fill="#101010"/><circle cx="79.2" cy="128.5" r="1.0" fill="#101010"/><circle cx="220.9" cy="63.0" r="1.5" fill="#101010"/><circle cx="226.5" cy="77.8" r="1.5" fill="#101010"/><circle cx="206.2" cy="8.2" r="1.6" fill="#101010"/><circle cx="88.3" cy="78.0" r="1.5" fill="#101010"/><circle cx="38.5" cy="6.3" r="1.6" fill="#101010"/><circle cx="4.1" cy="146.7" r="1.3" fill="#101010"/><circle cx="96.7" cy="190.0" r="1.5" fill="#101010"/><circle cx="5.6" cy="142.2" r="1.5" fill="#101010"/><circle cx="89.5" cy="28.6" r="1.3" fill="#101010"/><circle cx="3.8" cy="88.3" r="1.2" fill="#101010"/><circle cx="49.4" cy="134.7" r="1.5" fill="#101010"/><circle cx="108.6" cy="124.7" r="1.0" fill="#101010"/><circle cx="1.9" cy="108.5" r="1.1" fill="#101010"/><circle cx="231.9" cy="108.5" r="1.1" fill="#101010"/><circle cx="145.2" cy="23.1" r="1.2" fill="#101010"/><circle cx="118.8" cy="180.3" r="0.9" fill="#101010"/><circle cx="204.5" cy="35.4" r="1.5" fill="#101010"/><circle cx="186.7" cy="204.8" r="1.5" fill="#101010"/><circle cx="19.0" cy="83.2" r="1.3" fill="#101010"/><circle cx="76.2" cy="151.9" r="1.5" fill="#101010"/><circle cx="46.8" cy="73.1" r="1.5" fill="#101010"/><circle cx="76.0" cy="18.8" r="1.4" fill="#101010"/><circle cx="67.4" cy="134.2" r="0.9" fill="#101010"/><circle cx="130.0" cy="187.2" r="1.2" fill="#101010"/><circle cx="83.7" cy="177.0" r="1.3" fill="#101010"/><circle cx="109.2" cy="40.1" r="1.4" fill="#101010"/><circle cx="190.7" cy="0.1" r="1.1" fill="#101010"/><circle cx="190.7" cy="230.1" r="1.1" fill="#101010"/><circle cx="149.9" cy="34.5" r="1.5" fill="#101010"/><circle cx="30.9" cy="56.1" r="1.2" fill="#101010"/><circle cx="31.7" cy="208.3" r="1.3" fill="#101010"/><circle cx="89.6" cy="140.5" r="1.4" fill="#101010"/><circle cx="125.2" cy="148.6" r="1.4" fill="#101010"/><circle cx="100.3" cy="64.4" r="1.0" fill="#101010"/><circle cx="152.4" cy="86.9" r="1.6" fill="#101010"/><circle cx="63.1" cy="180.0" r="1.2" fill="#101010"/><circle cx="35.7" cy="89.8" r="1.3" fill="#101010"/><circle cx="154.9" cy="79.9" r="1.1" fill="#101010"/><circle cx="35.9" cy="136.3" r="1.4" fill="#101010"/><circle cx="207.2" cy="112.6" r="1.1" fill="#101010"/><circle cx="183.7" cy="146.1" r="1.4" fill="#101010"/><circle cx="14.8" cy="189.4" r="1.2" fill="#101010"/><circle cx="154.3" cy="16.8" r="0.9" fill="#101010"/><circle cx="6.9" cy="17.3" r="1.0" fill="#101010"/><circle cx="198.1" cy="126.1" r="0.9" fill="#101010"/><circle cx="229.7" cy="99.1" r="1.4" fill="#101010"/><circle cx="-0.3" cy="99.1" r="1.4" fill="#101010"/><circle cx="152.3" cy="81.7" r="1.5" fill="#101010"/><circle cx="222.4" cy="94.2" r="1.1" fill="#101010"/><circle cx="97.2" cy="191.3" r="1.3" fill="#101010"/><circle cx="23.4" cy="2.4" r="1.4" fill="#101010"/><circle cx="23.4" cy="232.4" r="1.4" fill="#101010"/><circle cx="34.1" cy="176.4" r="1.3" fill="#101010"/><circle cx="48.6" cy="15.7" r="1.4" fill="#101010"/><circle cx="36.9" cy="225.6" r="1.3" fill="#101010"/><circle cx="75.2" cy="185.0" r="1.3" fill="#101010"/><circle cx="151.5" cy="181.5" r="1.2" fill="#101010"/><circle cx="10.1" cy="36.7" r="1.6" fill="#101010"/><circle cx="143.5" cy="5.5" r="1.0" fill="#101010"/><circle cx="24.5" cy="59.0" r="1.4" fill="#101010"/><circle cx="213.3" cy="131.5" r="1.2" fill="#101010"/><circle cx="212.1" cy="30.1" r="1.5" fill="#101010"/><circle cx="147.8" cy="54.3" r="1.4" fill="#101010"/><circle cx="40.2" cy="136.1" r="1.2" fill="#101010"/><circle cx="24.7" cy="215.6" r="1.0" fill="#101010"/><circle cx="84.1" cy="146.5" r="1.1" fill="#101010"/><circle cx="21.8" cy="69.1" r="1.2" fill="#101010"/><circle cx="185.6" cy="125.4" r="1.5" fill="#101010"/><circle cx="32.0" cy="190.2" r="1.6" fill="#101010"/><circle cx="226.1" cy="68.9" r="1.0" fill="#101010"/><circle cx="175.7" cy="101.2" r="1.3" fill="#101010"/><circle cx="22.5" cy="221.7" r="1.2" fill="#101010"/><circle cx="222.1" cy="1.8" r="1.1" fill="#101010"/><circle cx="222.1" cy="231.8" r="1.1" fill="#101010"/><circle cx="107.9" cy="84.9" r="1.0" fill="#101010"/><circle cx="225.5" cy="126.1" r="1.6" fill="#101010"/><circle cx="119.4" cy="180.8" r="1.3" fill="#101010"/><circle cx="31.7" cy="160.6" r="1.4" fill="#101010"/><circle cx="164.9" cy="113.0" r="0.9" fill="#101010"/><circle cx="190.9" cy="222.8" r="0.9" fill="#101010"/><circle cx="9.8" cy="99.3" r="1.4" fill="#101010"/><circle cx="103.4" cy="188.2" r="1.5" fill="#101010"/><circle cx="137.0" cy="141.7" r="1.4" fill="#101010"/><circle cx="85.4" cy="46.8" r="1.5" fill="#101010"/><circle cx="59.7" cy="190.1" r="1.3" fill="#101010"/><circle cx="170.1" cy="181.1" r="1.5" fill="#101010"/><circle cx="192.8" cy="75.3" r="1.5" fill="#101010"/><circle cx="199.9" cy="147.6" r="1.0" fill="#101010"/><circle cx="226.6" cy="183.7" r="1.2" fill="#101010"/><circle cx="69.7" cy="187.4" r="1.4" fill="#101010"/><circle cx="86.1" cy="208.6" r="1.6" fill="#101010"/><circle cx="156.1" cy="191.3" r="1.3" fill="#101010"/><circle cx="70.1" cy="183.7" r="1.4" fill="#101010"/><circle cx="202.6" cy="80.0" r="1.6" fill="#101010"/><circle cx="159.8" cy="172.6" r="1.5" fill="#101010"/><circle cx="104.7" cy="193.0" r="1.5" fill="#101010"/><circle cx="223.3" cy="137.9" r="0.9" fill="#101010"/><circle cx="55.5" cy="45.4" r="1.0" fill="#101010"/><circle cx="87.1" cy="135.2" r="1.6" fill="#101010"/><circle cx="18.9" cy="220.2" r="1.3" fill="#101010"/><circle cx="184.2" cy="190.4" r="1.1" fill="#101010"/><circle cx="161.6" cy="171.1" r="1.1" fill="#101010"/><circle cx="212.7" cy="202.8" r="0.9" fill="#101010"/><circle cx="196.5" cy="89.0" r="1.6" fill="#101010"/><circle cx="13.4" cy="193.9" r="1.3" fill="#101010"/><circle cx="63.6" cy="113.1" r="1.5" fill="#101010"/><circle cx="98.5" cy="104.8" r="1.5" fill="#101010"/><circle cx="193.3" cy="50.6" r="1.3" fill="#101010"/><circle cx="92.2" cy="44.1" r="1.0" fill="#101010"/><circle cx="25.7" cy="38.5" r="1.2" fill="#101010"/><circle cx="58.2" cy="166.8" r="1.0" fill="#101010"/><circle cx="55.1" cy="221.2" r="1.3" fill="#101010"/><circle cx="42.3" cy="188.9" r="0.9" fill="#101010"/></pattern><pattern id="sp2" width="111" height="111" patternUnits="userSpaceOnUse"><circle cx="106.1" cy="105.2" r="0.8" fill="#7a7a7a" fill-opacity="0.33"/><circle cx="92.7" cy="81.7" r="1.3" fill="#7a7a7a" fill-opacity="0.42"/><circle cx="67.3" cy="67.4" r="1.3" fill="#7a7a7a" fill-opacity="0.36"/><circle cx="47.8" cy="43.7" r="1.4" fill="#7a7a7a" fill-opacity="0.70"/><circle cx="105.4" cy="60.4" r="1.2" fill="#7a7a7a" fill-opacity="0.41"/><circle cx="4.0" cy="3.0" r="1.2" fill="#7a7a7a" fill-opacity="0.43"/><circle cx="4.0" cy="114.0" r="1.2" fill="#7a7a7a" fill-opacity="0.43"/><circle cx="42.2" cy="99.0" r="1.2" fill="#7a7a7a" fill-opacity="0.52"/><circle cx="26.2" cy="2.6" r="1.1" fill="#7a7a7a" fill-opacity="0.35"/><circle cx="26.2" cy="113.6" r="1.1" fill="#7a7a7a" fill-opacity="0.35"/><circle cx="56.6" cy="110.9" r="1.3" fill="#7a7a7a" fill-opacity="0.37"/><circle cx="56.6" cy="-0.1" r="1.3" fill="#7a7a7a" fill-opacity="0.37"/><circle cx="99.2" cy="88.4" r="1.4" fill="#7a7a7a" fill-opacity="0.66"/><circle cx="84.7" cy="87.7" r="1.1" fill="#7a7a7a" fill-opacity="0.69"/><circle cx="106.8" cy="17.9" r="1.4" fill="#7a7a7a" fill-opacity="0.59"/><circle cx="51.2" cy="58.9" r="1.2" fill="#7a7a7a" fill-opacity="0.67"/><circle cx="55.6" cy="92.3" r="1.1" fill="#7a7a7a" fill-opacity="0.65"/><circle cx="99.9" cy="51.2" r="1.3" fill="#7a7a7a" fill-opacity="0.67"/><circle cx="80.3" cy="54.0" r="1.0" fill="#7a7a7a" fill-opacity="0.43"/><circle cx="77.7" cy="18.4" r="1.5" fill="#7a7a7a" fill-opacity="0.41"/><circle cx="101.2" cy="34.4" r="1.6" fill="#7a7a7a" fill-opacity="0.58"/><circle cx="56.0" cy="57.5" r="1.3" fill="#7a7a7a" fill-opacity="0.54"/><circle cx="34.6" cy="23.1" r="1.2" fill="#7a7a7a" fill-opacity="0.67"/><circle cx="69.2" cy="8.4" r="1.5" fill="#7a7a7a" fill-opacity="0.59"/><circle cx="100.7" cy="21.2" r="1.4" fill="#7a7a7a" fill-opacity="0.32"/><circle cx="72.5" cy="30.3" r="1.0" fill="#7a7a7a" fill-opacity="0.65"/><circle cx="11.8" cy="58.0" r="1.5" fill="#7a7a7a" fill-opacity="0.40"/><circle cx="23.4" cy="97.7" r="1.1" fill="#7a7a7a" fill-opacity="0.59"/><circle cx="3.5" cy="40.2" r="0.9" fill="#7a7a7a" fill-opacity="0.57"/><circle cx="9.2" cy="106.0" r="0.8" fill="#7a7a7a" fill-opacity="0.59"/><circle cx="2.3" cy="28.4" r="1.5" fill="#7a7a7a" fill-opacity="0.36"/><circle cx="113.3" cy="28.4" r="1.5" fill="#7a7a7a" fill-opacity="0.36"/><circle cx="20.4" cy="76.8" r="1.1" fill="#7a7a7a" fill-opacity="0.32"/><circle cx="109.9" cy="16.8" r="0.8" fill="#7a7a7a" fill-opacity="0.44"/><circle cx="-1.1" cy="16.8" r="0.8" fill="#7a7a7a" fill-opacity="0.44"/><circle cx="68.3" cy="82.4" r="0.9" fill="#7a7a7a" fill-opacity="0.43"/><circle cx="3.4" cy="49.8" r="1.4" fill="#7a7a7a" fill-opacity="0.60"/><circle cx="100.1" cy="83.9" r="1.5" fill="#7a7a7a" fill-opacity="0.58"/><circle cx="52.5" cy="25.0" r="1.3" fill="#7a7a7a" fill-opacity="0.43"/><circle cx="11.3" cy="49.7" r="1.5" fill="#7a7a7a" fill-opacity="0.35"/><circle cx="64.9" cy="43.6" r="1.2" fill="#7a7a7a" fill-opacity="0.36"/><circle cx="106.5" cy="28.8" r="1.3" fill="#7a7a7a" fill-opacity="0.47"/><circle cx="2.0" cy="61.9" r="0.9" fill="#7a7a7a" fill-opacity="0.32"/><circle cx="113.0" cy="61.9" r="0.9" fill="#7a7a7a" fill-opacity="0.32"/><circle cx="3.7" cy="17.9" r="0.9" fill="#7a7a7a" fill-opacity="0.55"/><circle cx="56.4" cy="109.2" r="1.5" fill="#7a7a7a" fill-opacity="0.70"/><circle cx="56.4" cy="-1.8" r="1.5" fill="#7a7a7a" fill-opacity="0.70"/><circle cx="25.8" cy="49.4" r="1.0" fill="#7a7a7a" fill-opacity="0.54"/><circle cx="69.3" cy="88.8" r="1.4" fill="#7a7a7a" fill-opacity="0.40"/><circle cx="47.0" cy="58.4" r="0.8" fill="#7a7a7a" fill-opacity="0.31"/><circle cx="45.4" cy="12.3" r="1.4" fill="#7a7a7a" fill-opacity="0.40"/><circle cx="11.1" cy="20.2" r="1.0" fill="#7a7a7a" fill-opacity="0.39"/><circle cx="57.8" cy="51.5" r="1.0" fill="#7a7a7a" fill-opacity="0.56"/><circle cx="23.6" cy="100.6" r="1.6" fill="#7a7a7a" fill-opacity="0.59"/><circle cx="48.1" cy="56.8" r="1.3" fill="#7a7a7a" fill-opacity="0.32"/><circle cx="46.4" cy="58.3" r="0.9" fill="#7a7a7a" fill-opacity="0.34"/><circle cx="89.1" cy="40.6" r="1.2" fill="#7a7a7a" fill-opacity="0.67"/><circle cx="67.8" cy="32.1" r="1.6" fill="#7a7a7a" fill-opacity="0.45"/><circle cx="2.1" cy="76.1" r="0.9" fill="#7a7a7a" fill-opacity="0.42"/><circle cx="113.1" cy="76.1" r="0.9" fill="#7a7a7a" fill-opacity="0.42"/><circle cx="93.3" cy="74.7" r="0.8" fill="#7a7a7a" fill-opacity="0.48"/><circle cx="45.6" cy="53.9" r="1.0" fill="#7a7a7a" fill-opacity="0.54"/><circle cx="8.2" cy="31.6" r="1.1" fill="#7a7a7a" fill-opacity="0.67"/><circle cx="8.5" cy="83.8" r="1.0" fill="#7a7a7a" fill-opacity="0.53"/><circle cx="43.5" cy="51.4" r="1.4" fill="#7a7a7a" fill-opacity="0.46"/><circle cx="13.5" cy="13.5" r="0.9" fill="#7a7a7a" fill-opacity="0.64"/><circle cx="71.2" cy="106.5" r="1.4" fill="#7a7a7a" fill-opacity="0.31"/><circle cx="73.2" cy="86.3" r="1.4" fill="#7a7a7a" fill-opacity="0.50"/><circle cx="39.7" cy="50.7" r="1.4" fill="#7a7a7a" fill-opacity="0.41"/><circle cx="58.4" cy="53.0" r="1.6" fill="#7a7a7a" fill-opacity="0.62"/><circle cx="103.5" cy="92.8" r="1.0" fill="#7a7a7a" fill-opacity="0.39"/><circle cx="54.3" cy="28.8" r="1.1" fill="#7a7a7a" fill-opacity="0.57"/><circle cx="102.0" cy="65.0" r="1.5" fill="#7a7a7a" fill-opacity="0.34"/><circle cx="39.5" cy="110.8" r="0.9" fill="#7a7a7a" fill-opacity="0.47"/><circle cx="39.5" cy="-0.2" r="0.9" fill="#7a7a7a" fill-opacity="0.47"/><circle cx="7.4" cy="9.6" r="1.5" fill="#7a7a7a" fill-opacity="0.70"/><circle cx="71.9" cy="14.3" r="1.0" fill="#7a7a7a" fill-opacity="0.39"/><circle cx="74.5" cy="75.6" r="1.2" fill="#7a7a7a" fill-opacity="0.51"/><circle cx="12.4" cy="60.0" r="1.6" fill="#7a7a7a" fill-opacity="0.60"/><circle cx="10.7" cy="57.3" r="1.4" fill="#101010"/><circle cx="28.6" cy="99.3" r="1.2" fill="#101010"/><circle cx="78.1" cy="44.9" r="1.6" fill="#101010"/><circle cx="86.9" cy="63.7" r="1.0" fill="#101010"/><circle cx="49.0" cy="3.3" r="1.3" fill="#101010"/><circle cx="49.0" cy="114.3" r="1.3" fill="#101010"/><circle cx="97.9" cy="20.0" r="1.3" fill="#101010"/><circle cx="53.6" cy="44.9" r="1.4" fill="#101010"/><circle cx="104.0" cy="78.3" r="1.2" fill="#101010"/><circle cx="106.8" cy="36.7" r="1.4" fill="#101010"/><circle cx="73.1" cy="84.5" r="1.5" fill="#101010"/><circle cx="25.0" cy="69.0" r="1.2" fill="#101010"/><circle cx="74.0" cy="108.5" r="1.3" fill="#101010"/><circle cx="74.0" cy="-2.5" r="1.3" fill="#101010"/><circle cx="1.3" cy="51.6" r="1.4" fill="#101010"/><circle cx="112.3" cy="51.6" r="1.4" fill="#101010"/><circle cx="98.0" cy="72.2" r="1.5" fill="#101010"/><circle cx="1.9" cy="104.7" r="1.4" fill="#101010"/><circle cx="112.9" cy="104.7" r="1.4" fill="#101010"/><circle cx="67.3" cy="100.5" r="1.5" fill="#101010"/><circle cx="11.2" cy="90.5" r="1.4" fill="#101010"/><circle cx="22.1" cy="82.6" r="1.3" fill="#101010"/><circle cx="21.3" cy="89.3" r="1.0" fill="#101010"/><circle cx="68.0" cy="48.2" r="1.1" fill="#101010"/></pattern><filter id="bl" x="0" y="0" width="1" height="1"><feGaussianBlur stdDeviation="0.7"/></filter><clipPath id="mc"><rect width="720" height="531" rx="8"/></clipPath><radialGradient id="vg" cx="0.5" cy="0.45" r="0.7"><stop offset="0" stop-color="#000" stop-opacity="0"/><stop offset="1" stop-color="#000" stop-opacity="0.05"/></radialGradient><radialGradient id="dk"><stop offset="0" stop-color="#000" stop-opacity="0.16"/><stop offset="1" stop-color="#000" stop-opacity="0"/></radialGradient><radialGradient id="lt"><stop offset="0" stop-color="#fff" stop-opacity="0.05"/><stop offset="1" stop-color="#fff" stop-opacity="0"/></radialGradient></defs><g clip-path="url(#mc)"><rect width="720" height="531" fill="#2e2e2e"/><g filter="url(#bl)"><rect width="720" height="531" fill="url(#sp1)"/><rect width="720" height="531" fill="url(#sp2)"/></g><rect width="720" height="531" fill="url(#vg)"/><ellipse cx="250" cy="230" rx="170" ry="130" fill="url(#dk)"/><ellipse cx="560" cy="430" rx="150" ry="120" fill="url(#dk)"/><ellipse cx="120" cy="120" rx="140" ry="110" fill="url(#lt)"/><ellipse cx="560" cy="120" rx="160" ry="110" fill="url(#lt)"/><rect x="216.3" y="16.7" width="22.6" height="20.9" fill="rgba(208,198,62,0.74)"/><circle cx="227.6" cy="27.1" r="3.8" fill="rgba(255,248,170,0.18)"/><rect x="29.1" y="169.0" width="11.9" height="10.4" fill="rgba(208,198,62,0.74)"/><rect x="9.6" y="202.0" width="13.3" height="9.8" fill="rgba(208,198,62,0.74)"/><rect x="251.0" y="273.0" width="20.8" height="14.2" fill="rgba(208,198,62,0.74)"/><circle cx="261.4" cy="280.1" r="2.6" fill="rgba(255,248,170,0.18)"/><rect x="370.7" y="293.7" width="12.6" height="10.3" fill="rgba(208,198,62,0.74)"/><rect x="22.7" y="384.0" width="37.3" height="24.0" fill="rgba(208,198,62,0.74)"/><circle cx="41.4" cy="396.0" r="4.3" fill="rgba(255,248,170,0.18)"/><rect x="117.7" y="441.3" width="25.0" height="16.0" fill="rgba(208,198,62,0.74)"/><circle cx="130.2" cy="449.3" r="2.9" fill="rgba(255,248,170,0.18)"/><rect x="280.7" y="512.3" width="18.6" height="10.7" fill="rgba(208,198,62,0.74)"/><circle cx="290.0" cy="517.6" r="1.9" fill="rgba(255,248,170,0.18)"/><rect x="423.0" y="385.0" width="14.8" height="13.0" fill="rgba(208,198,62,0.74)"/><rect x="446.0" y="405.4" width="17.5" height="12.1" fill="rgba(208,198,62,0.74)"/><rect x="616.3" y="49.0" width="35.7" height="23.7" fill="rgba(208,198,62,0.74)"/><circle cx="634.1" cy="60.8" r="4.3" fill="rgba(255,248,170,0.18)"/><rect x="553.2" y="131.2" width="36.4" height="23.4" fill="rgba(208,198,62,0.74)"/><circle cx="571.4" cy="142.9" r="4.2" fill="rgba(255,248,170,0.18)"/><rect x="634.5" y="254.8" width="17.5" height="16.2" fill="rgba(208,198,62,0.74)"/></g></svg>
<div style="position:absolute;left:121px;top:173px;width:158px;height:32px;background:#e9eaee;border-radius:7px;"></div>
<div style="position:absolute;left:133.2px;top:182px;width:11px;height:11px;border:1.6px solid #6c7080;border-radius:2px;"></div>
<div class="t" style="left:156.05px;top:181px;font-size:11.63px;line-height:15px;letter-spacing:0.720px;color:#80848e;font-weight:400;-webkit-text-stroke:0.05px #80848e">No object detection</div>
<div style="position:absolute;left:663px;top:173px;width:91px;height:31.5px;background:#fff;border-radius:7px;"></div>
<div class="t" style="left:672.07px;top:182px;font-size:12.21px;line-height:15px;letter-spacing:-0.034px;color:#3e4149;font-weight:400;">12% (fit)</div>
<svg style="position:absolute;left:728px;top:183px" width="14" height="12" viewBox="0 0 14 12"><path d="M2.3 3.2 L7 7.9 L11.7 3.2" fill="none" stroke="#33363d" stroke-width="1.9" stroke-linecap="round" stroke-linejoin="round"/></svg>
<div style="position:absolute;left:771.3px;top:173px;width:38.3px;height:265.7px;background:#fff;border-radius:7px;"></div>
<svg style="position:absolute;left:781px;top:183px" width="19" height="19" viewBox="0 0 19 19"><g fill="none" stroke="#25282e" stroke-width="1.8" stroke-linecap="round" stroke-linejoin="round"><circle cx="8" cy="8" r="5.6"/><path d="M12.1 12.1 L16.2 16.2 M8 5.4 V10.6 M5.4 8 H10.6"/></g></svg>
<svg style="position:absolute;left:781px;top:210px" width="19" height="19" viewBox="0 0 19 19"><g fill="none" stroke="#25282e" stroke-width="1.8" stroke-linecap="round" stroke-linejoin="round"><circle cx="8" cy="8" r="5.6"/><path d="M12.1 12.1 L16.2 16.2 M5.4 8 H10.6"/></g></svg>
<svg style="position:absolute;left:781px;top:236px" width="19" height="16" viewBox="0 0 19 16"><g fill="none" stroke="#d5d6d9" stroke-width="1.5" stroke-linecap="round" stroke-linejoin="round"><path d="M4 5.5 L7 2.8 M4 5.5 L7 8.2 M4 5.5 H10 A5 5 0 0 1 15 10.5 V12"/></g></svg>
<svg style="position:absolute;left:781px;top:262px" width="19" height="16" viewBox="0 0 19 16"><g fill="none" stroke="#d5d6d9" stroke-width="1.5" stroke-linecap="round" stroke-linejoin="round"><path d="M15 5.5 L12 2.8 M15 5.5 L12 8.2 M15 5.5 H9 A5 5 0 0 0 4 10.5 V12"/></g></svg>
<svg style="position:absolute;left:781px;top:299px" width="20" height="21" viewBox="0 0 20 21"><g fill="none" stroke="#25282e" stroke-width="1.7" stroke-linecap="round" stroke-linejoin="round"><path d="M3.6 3.4 L17.4 9.2 L10.8 11.2 L8.6 17.6Z"/></g></svg>
<svg style="position:absolute;left:781px;top:328px" width="20" height="20" viewBox="0 0 20 20"><g fill="none" stroke="#25282e" stroke-width="1.5" stroke-linecap="round" stroke-linejoin="round"><path d="M6.2 10.2 V4.8 A1.2 1.2 0 0 1 8.6 4.8 V9.4 M8.6 4.2 V3.2 A1.2 1.2 0 0 1 11 3.2 V9.2 M11 3.8 A1.2 1.2 0 0 1 13.4 3.8 V9.4 M13.4 5.6 A1.2 1.2 0 0 1 15.8 5.6 V11.6 A6 6 0 0 1 9.8 17.2 H9.4 A6 6 0 0 1 5 15.2 L2.6 12.2 A1.3 1.3 0 0 1 4.6 10.6 L6.2 12.2"/></g></svg>
<svg style="position:absolute;left:779px;top:359px" width="23" height="17" viewBox="0 0 23 17"><g fill="none" stroke="#25282e" stroke-width="1.5" stroke-linecap="round" stroke-linejoin="round"><rect x="3.8" y="4.2" width="15.4" height="8.6" /><circle cx="3.8" cy="4.2" r="1.8" fill="#fff"/><circle cx="19.2" cy="4.2" r="1.8" fill="#fff"/><circle cx="3.8" cy="12.8" r="1.8" fill="#fff"/><circle cx="19.2" cy="12.8" r="1.8" fill="#fff"/></g></svg>
<svg style="position:absolute;left:780px;top:386px" width="21" height="17" viewBox="0 0 21 17"><g fill="none" stroke="#25282e" stroke-width="1.6" stroke-linecap="round" stroke-linejoin="round"><path d="M4.6 5.6 C3.9 6.4 3.2 7.4 2.6 8.5 C4.5 12 7.2 13.6 10.5 13.6 C11.9 13.6 13.1 13.3 14.2 12.7 M7.4 4 C8.4 3.6 9.4 3.4 10.5 3.4 C13.8 3.4 16.5 5 18.4 8.5 C17.9 9.4 17.3 10.3 16.7 11 M8.6 6.8 A2.6 2.6 0 0 0 12.2 10.4 M3.6 2.2 L17.4 14.8"/></g></svg>
<svg style="position:absolute;left:782px;top:411px" width="17" height="17" viewBox="0 0 17 17"><g fill="none" stroke="#25282e" stroke-width="1.6" stroke-linecap="round" stroke-linejoin="round"><path d="M3.6 4.3 H13.4 M6.2 2.2 H10.8 M4.6 4.3 V14.8 H12.4 V4.3"/></g></svg>
<div style="position:absolute;left:566px;top:313.7px;width:128.4px;height:132.3px;background:#fff;border-radius:2px 2px 5px 5px;box-shadow:0 1px 3px rgba(0,0,0,0.15);"></div>
<div style="position:absolute;left:566px;top:313.7px;width:128.4px;height:32.3px;background:#6c78e9;border-radius:2px 2px 0 0;"></div>
<div style="position:absolute;left:566px;top:352px;width:128.4px;height:29.6px;background:#e0e1f8;"></div>
<svg style="position:absolute;left:570px;top:316px" width="26" height="26" viewBox="0 0 26 26"><g fill="none" stroke="#fff" stroke-width="1.3" stroke-linecap="round" stroke-linejoin="round"><path d="M11.5 5.4 Q15.5 4.9 18.4 5.5 Q19.8 6.6 18 7.7 Q11.5 8 7.6 8.6 Q5.8 9.5 6.8 10.8"/><path d="M10.9 14.6 V11.2 A0.95 0.95 0 0 1 12.8 11.2 V14.6"/><path d="M7.2 15.9 Q9.6 19.9 13 20.6 H16 Q17.7 19.6 17.6 15.8 Q17.2 14.7 15.5 14.5 L12.8 14.6 M10.9 14.6 Q8.8 14.6 7.2 15.9"/><path d="M7 12.8 H8.2"/><path d="M17.6 10.2 L18 11.3 L19.1 11.7 L18 12.1 L17.6 13.2 L17.2 12.1 L16.1 11.7 L17.2 11.3Z" fill="#fff" stroke-width="0.5"/></g></svg>
<div class="t" style="left:598.57px;top:322px;font-size:13.95px;line-height:17px;letter-spacing:0.219px;color:#ffffff;font-weight:400;">Select a class</div>
<div style="position:absolute;left:579.3px;top:362.3px;width:9px;height:9px;border-radius:50%;background:#e3be62;"></div>
<div class="t" style="left:601.58px;top:358px;font-size:13.66px;line-height:17px;letter-spacing:0.024px;color:#2f3139;font-weight:400;">Particle</div>
<div style="position:absolute;left:579.3px;top:391.9px;width:9px;height:9px;border-radius:50%;background:#90e2d8;"></div>
<div class="t" style="left:602.08px;top:387px;font-size:13.66px;line-height:17px;letter-spacing:-0.219px;color:#2f3139;font-weight:400;">Scratch</div>
<svg style="position:absolute;left:578px;top:419px" width="15" height="15" viewBox="0 0 15 15"><g fill="none" stroke="#33363d" stroke-width="1.4" stroke-linecap="round" stroke-linejoin="round"><path d="M7.5 2.2 V12.8 M2.2 7.5 H12.8"/></g></svg>
<div class="t" style="left:605.57px;top:417px;font-size:13.66px;line-height:17px;letter-spacing:-0.244px;color:#2f3139;font-weight:400;">Add classes</div>
<svg style="position:absolute;left:103.4px;top:700.8px" width="141.2" height="110.2" viewBox="0 0 141.2 110.2"><defs><filter id="tn0" x="0" y="0" width="1" height="1"><feTurbulence type="fractalNoise" baseFrequency="0.75" numOctaves="2" seed="3"/><feColorMatrix values="0 0 0 0 0.48  0 0 0 0 0.48  0 0 0 0 0.45  0 0 0 1.3 -0.62"/></filter><clipPath id="tc0"><rect width="141.2" height="110.2" rx="8"/></clipPath></defs><g clip-path="url(#tc0)"><rect width="100%" height="100%" fill="#1d1d1d"/><rect width="100%" height="100%" filter="url(#tn0)"/><rect x="40.9" y="1.5" width="4.6" height="2.7" fill="#d0c460" opacity="0.88"/><rect x="125.4" y="7.1" width="7.5" height="4.6" fill="#d0c460" opacity="0.88"/><rect x="111.5" y="23.8" width="8.4" height="5.6" fill="#d0c460" opacity="0.88"/><rect x="0.9" y="32.2" width="2.7" height="2.8" fill="#d0c460" opacity="0.88"/><rect x="129.1" y="49.8" width="4.7" height="3.7" fill="#d0c460" opacity="0.88"/><rect x="136.6" y="49.8" width="3.7" height="2.8" fill="#d0c460" opacity="0.88"/><rect x="47.4" y="53.5" width="5.5" height="3.7" fill="#d0c460" opacity="0.88"/><rect x="72.5" y="58.2" width="3.7" height="2.8" fill="#d0c460" opacity="0.88"/><rect x="0.9" y="77.7" width="7.4" height="5.5" fill="#d0c460" opacity="0.88"/><rect x="83.6" y="77.7" width="3.7" height="2.8" fill="#d0c460" opacity="0.88"/><rect x="88.3" y="82.4" width="4.6" height="2.8" fill="#d0c460" opacity="0.88"/><rect x="19.5" y="89.8" width="5.6" height="2.8" fill="#d0c460" opacity="0.88"/><rect x="53.9" y="104.7" width="4.7" height="2.7" fill="#d0c460" opacity="0.88"/></g><rect x="0.9" y="0.9" width="139.4" height="108.4" rx="7.5" fill="none" stroke="#5c62c8" stroke-width="1.6"/></svg>
<div style="position:absolute;left:111.4px;top:792.7px;width:37.9px;height:14.8px;background:#f0ca7e;border-radius:8px;"></div>
<div class="t" style="left:115.16px;top:795px;font-size:9.01px;line-height:11px;letter-spacing:-0.001px;color:#3a3530;font-weight:400;">Particle</div>
<svg style="position:absolute;left:249.6px;top:700.8px" width="140.2" height="110.2" viewBox="0 0 140.2 110.2"><defs><filter id="tn1" x="0" y="0" width="1" height="1"><feTurbulence type="fractalNoise" baseFrequency="0.75" numOctaves="2" seed="4"/><feColorMatrix values="0 0 0 0 0.48  0 0 0 0 0.48  0 0 0 0 0.45  0 0 0 1.3 -0.62"/></filter><clipPath id="tc1"><rect width="140.2" height="110.2" rx="8"/></clipPath></defs><g clip-path="url(#tc1)"><rect width="100%" height="100%" fill="#1d1d1d"/><rect width="100%" height="100%" filter="url(#tn1)"/><rect x="117.6" y="0.5" width="5.2" height="2.7" fill="#d0c460" opacity="0.88"/><rect x="106.3" y="16.2" width="7.8" height="7.0" fill="#d0c460" opacity="0.88"/><rect x="14.8" y="24.9" width="3.5" height="3.5" fill="#d0c460" opacity="0.88"/><rect x="12.2" y="32.8" width="2.6" height="2.6" fill="#d0c460" opacity="0.88"/><rect x="54.0" y="49.2" width="5.2" height="5.3" fill="#d0c460" opacity="0.88"/><rect x="74.9" y="53.7" width="2.6" height="3.5" fill="#d0c460" opacity="0.88"/><rect x="120.2" y="44.9" width="5.2" height="6.1" fill="#d0c460" opacity="0.88"/><rect x="126.3" y="44.9" width="3.5" height="3.5" fill="#d0c460" opacity="0.88"/><rect x="13.9" y="75.4" width="7.0" height="7.0" fill="#d0c460" opacity="0.88"/><rect x="83.6" y="74.6" width="3.5" height="4.3" fill="#d0c460" opacity="0.88"/><rect x="87.1" y="78.9" width="4.3" height="4.3" fill="#d0c460" opacity="0.88"/><rect x="31.4" y="88.5" width="4.3" height="2.6" fill="#d0c460" opacity="0.88"/><rect x="59.2" y="104.2" width="3.5" height="3.5" fill="#d0c460" opacity="0.88"/></g><rect x="0.9" y="0.9" width="138.4" height="108.4" rx="7.5" fill="none" stroke="#5c62c8" stroke-width="1.6"/></svg>
<div style="position:absolute;left:256.5px;top:792.7px;width:37.9px;height:14.8px;background:#f0ca7e;border-radius:8px;"></div>
<div class="t" style="left:260.26px;top:795px;font-size:9.01px;line-height:11px;letter-spacing:-0.001px;color:#3a3530;font-weight:400;">Particle</div>
<svg style="position:absolute;left:398px;top:703px" width="133.7" height="106.4" viewBox="0 0 133.7 106.4"><defs><clipPath id="pc"><rect width="100%" height="100%" rx="7"/></clipPath><radialGradient id="pg" cx="0.45" cy="0.3" r="0.75"><stop offset="0" stop-color="#9a9794"/><stop offset="1" stop-color="#7f7e83"/></radialGradient></defs><g clip-path="url(#pc)"><rect width="100%" height="100%" fill="#1c1c1c"/><circle cx="66" cy="52" r="64.5" fill="#3d403f"/><circle cx="67" cy="52" r="62.5" fill="none" stroke="#9aa19e" stroke-width="1.6" opacity="0.8"/><circle cx="64.69999999999999" cy="52" r="59.3" fill="url(#pg)"/><rect x="17.69999999999999" y="11.299999999999955" width="6" height="6" fill="#d6d6ec"/><rect x="103" y="87" width="7" height="7" fill="#d6d6ec"/></g></svg>
<div style="position:absolute;left:404px;top:793.3px;width:38.1px;height:14.0px;background:#5ec5b1;border-radius:8px;"></div>
<div class="t" style="left:408.09px;top:795px;font-size:9.01px;line-height:11px;letter-spacing:-0.076px;color:#2d6b61;font-weight:400;">Scratch</div>
<div style="position:absolute;left:445.9px;top:793.3px;width:37.7px;height:14.0px;background:#f3d48c;border-radius:8px;"></div>
<div class="t" style="left:449.66px;top:795px;font-size:9.01px;line-height:11px;letter-spacing:-0.030px;color:#4f4424;font-weight:400;">Particle</div>
<svg style="position:absolute;left:540px;top:700.8px" width="141.2" height="110.2" viewBox="0 0 141.2 110.2"><defs><pattern id="gp" width="4.3" height="4.3" patternUnits="userSpaceOnUse"><rect width="4.3" height="4.3" fill="#8e8d92"/><rect width="2.4" height="2.4" x="0.9" y="0.9" fill="#7f7e84"/></pattern><clipPath id="gc"><rect width="100%" height="100%" rx="8"/></clipPath></defs><g clip-path="url(#gc)"><rect width="100%" height="100%" fill="url(#gp)"/><rect x="64.60000000000002" y="55.10000000000002" width="9.9" height="19.5" fill="#d6c040" opacity="0.92"/></g><rect x="0.9" y="0.9" width="139.4" height="108.4" rx="7.5" fill="none" stroke="#7076d8" stroke-width="1.8"/></svg>
<div style="position:absolute;left:547.4px;top:793px;width:38.3px;height:14.0px;background:#f3d48c;border-radius:8px;"></div>
<div class="t" style="left:551.16px;top:795px;font-size:9.01px;line-height:11px;letter-spacing:0.056px;color:#3a3530;font-weight:400;">Particle</div>
<svg style="position:absolute;left:687.3px;top:702.5px" width="137.3" height="107.7" viewBox="0 0 137.3 107.7"><defs><clipPath id="sc"><rect width="100%" height="100%" rx="8"/></clipPath><pattern id="spp" width="3" height="3" patternUnits="userSpaceOnUse"><rect width="3" height="3" fill="#1e1e1e"/><rect width="3" height="1" fill="#2a2a2a"/></pattern></defs><g clip-path="url(#sc)"><rect width="100%" height="100%" fill="url(#spp)"/><path d="M6.5 0 L9.0 107.7" stroke="#d8d8d8" stroke-width="1.1"/><path d="M28.7 0 L31.2 107.7" stroke="#d8d8d8" stroke-width="1.1"/><path d="M50.1 0 L52.6 107.7" stroke="#d8d8d8" stroke-width="1.1"/><path d="M71.7 0 L74.2 107.7" stroke="#d8d8d8" stroke-width="1.1"/><path d="M92.7 0 L95.2 107.7" stroke="#d8d8d8" stroke-width="1.1"/><path d="M117.1 0 L119.6 107.7" stroke="#d8d8d8" stroke-width="1.1"/><path d="M0 17.4 L137.3 14.7" stroke="#d8d8d8" stroke-width="1.1"/><path d="M0 36.7 L137.3 34.0" stroke="#d8d8d8" stroke-width="1.1"/><path d="M0 55.7 L137.3 53.0" stroke="#d8d8d8" stroke-width="1.1"/><path d="M0 75.7 L137.3 73.0" stroke="#d8d8d8" stroke-width="1.1"/><path d="M0 94.1 L137.3 91.4" stroke="#d8d8d8" stroke-width="1.1"/><circle cx="29.7" cy="16.2" r="1.5" fill="#fff"/><circle cx="29.7" cy="35.5" r="1.5" fill="#fff"/><circle cx="29.7" cy="54.5" r="1.5" fill="#fff"/><circle cx="29.7" cy="74.5" r="1.5" fill="#fff"/><circle cx="29.7" cy="92.9" r="1.5" fill="#fff"/><circle cx="51.1" cy="16.2" r="1.5" fill="#fff"/><circle cx="51.1" cy="35.5" r="1.5" fill="#fff"/><circle cx="51.1" cy="54.5" r="1.5" fill="#fff"/><circle cx="51.1" cy="74.5" r="1.5" fill="#fff"/><circle cx="51.1" cy="92.9" r="1.5" fill="#fff"/><circle cx="72.7" cy="16.2" r="1.5" fill="#fff"/><circle cx="72.7" cy="35.5" r="1.5" fill="#fff"/><circle cx="72.7" cy="54.5" r="1.5" fill="#fff"/><circle cx="72.7" cy="74.5" r="1.5" fill="#fff"/><circle cx="72.7" cy="92.9" r="1.5" fill="#fff"/><circle cx="93.7" cy="16.2" r="1.5" fill="#fff"/><circle cx="93.7" cy="35.5" r="1.5" fill="#fff"/><circle cx="93.7" cy="54.5" r="1.5" fill="#fff"/><circle cx="93.7" cy="74.5" r="1.5" fill="#fff"/><circle cx="93.7" cy="92.9" r="1.5" fill="#fff"/><circle cx="118.1" cy="16.2" r="1.5" fill="#fff"/><circle cx="118.1" cy="35.5" r="1.5" fill="#fff"/><circle cx="118.1" cy="54.5" r="1.5" fill="#fff"/><circle cx="118.1" cy="74.5" r="1.5" fill="#fff"/><circle cx="118.1" cy="92.9" r="1.5" fill="#fff"/><rect x="7.5" y="13.3" width="14.8" height="94.2" fill="#6fae68" opacity="0.72"/><rect x="83.3" y="3.5" width="11.4" height="29.6" fill="#6fae68" opacity="0.72"/><rect x="105.1" y="0.5" width="14.4" height="77.6" fill="#6fae68" opacity="0.72"/><rect x="122.5" y="8.1" width="10.4" height="32.4" fill="#6fae68" opacity="0.72"/></g></svg>
<div style="position:absolute;left:694.8px;top:793.1px;width:38.3px;height:13.9px;background:#5ec5b1;border-radius:8px;"></div>
<div class="t" style="left:698.89px;top:795px;font-size:9.01px;line-height:11px;letter-spacing:-0.043px;color:#2d6b61;font-weight:400;">Scratch</div>
<div style="position:absolute;left:736.6px;top:793.1px;width:37.8px;height:13.9px;background:#f3d48c;border-radius:8px;"></div>
<div class="t" style="left:740.36px;top:795px;font-size:9.01px;line-height:11px;letter-spacing:-0.016px;color:#4f4424;font-weight:400;">Particle</div>
<div style="position:absolute;left:104.7px;top:823.3px;width:720px;height:6px;background:#dfe0f7;border-radius:3px;"></div>
<div style="position:absolute;left:104.7px;top:823.3px;width:239px;height:6px;background:#6a75e6;border-radius:3px;"></div>
<div style="position:absolute;left:855.7px;top:104.4px;width:241.6px;height:27.4px;border:1px solid #d8d9dd;border-radius:3px;background:#f6f7f9;"></div>
<svg style="position:absolute;left:866px;top:110px" width="18" height="18" viewBox="0 0 18 18"><g fill="none" stroke="#c3c4c9" stroke-width="1.5" stroke-linecap="round" stroke-linejoin="round"><circle cx="7.6" cy="7.6" r="4.8"/><path d="M11.2 11.2 L15.2 15.2"/></g></svg>
<div class="t" style="left:891.15px;top:112px;font-size:12.21px;line-height:15px;letter-spacing:0.253px;color:#c6c7cc;font-weight:400;">Search</div>
<svg style="position:absolute;left:1113px;top:110px" width="18" height="19" viewBox="0 0 18 19"><g fill="none" stroke="#5b5f6a" stroke-width="1.6" stroke-linecap="round" stroke-linejoin="round"><path d="M2.4 2.6 H15.4 L10.4 9 V15.8 L7.4 14.2 V9Z"/></g></svg>
<svg style="position:absolute;left:1144px;top:108px" width="22" height="22" viewBox="0 0 22 22"><g fill="none" stroke="#5b5f6a" stroke-width="1.6" stroke-linecap="round" stroke-linejoin="round"><path d="M2.6 12.2 L10.4 3 H15.8 L18.8 6.4 V11.6 L11 20.6 Z"/><path d="M13.4 3 L15.2 1.8 H17.4 L19.8 4.4"/><circle cx="15" cy="7.8" r="0.9" fill="#5b5f6a"/></g></svg>
<div style="position:absolute;left:846px;top:153.7px;width:317.6px;height:128.7px;background:#fff;border-radius:9px;box-shadow:0 1px 5px rgba(40,50,80,0.05);"></div>
<div class="t" style="left:864.84px;top:167px;font-size:11.34px;line-height:14px;letter-spacing:0.708px;color:#25272d;font-weight:700;-webkit-text-stroke:0;">Image details</div>
<svg style="position:absolute;left:1127px;top:167px" width="16" height="18" viewBox="0 0 16 18"><g fill="none" stroke="#6f76d6" stroke-width="1.5" stroke-linecap="round" stroke-linejoin="round"><path d="M8 2.6 V10.6 M4.8 7.6 L8 10.8 L11.2 7.6 M2.6 12.4 V15.6 H13.4 V12.4"/></g></svg>
<div class="t" style="left:864.67px;top:194px;font-size:11.34px;line-height:14px;letter-spacing:1.243px;color:#484b52;font-weight:400;">Name:</div>
<div class="t" style="left:908.54px;top:194px;font-size:11.34px;line-height:14px;letter-spacing:0.885px;color:#6c6f77;font-weight:400;">image1hdiu-dusjo.jpg</div>
<div class="t" style="left:865.09px;top:214px;font-size:11.34px;line-height:14px;letter-spacing:-0.064px;color:#484b52;font-weight:400;">Size:</div>
<div class="t" style="left:895.72px;top:214px;font-size:11.34px;line-height:14px;letter-spacing:0.068px;color:#6c6f77;font-weight:400;">6.5 KB</div>
<div class="t" style="left:864.73px;top:234px;font-size:11.34px;line-height:14px;letter-spacing:0.883px;color:#484b52;font-weight:400;">Uplaod date:</div>
<div class="t" style="left:944.56px;top:234px;font-size:11.34px;line-height:14px;letter-spacing:0.261px;color:#6c6f77;font-weight:400;">05/28/2023, 01:04:16 AM</div>
<div class="t" style="left:864.67px;top:255px;font-size:11.34px;line-height:14px;letter-spacing:0.625px;color:#484b52;font-weight:400;">Resolution:</div>
<div class="t" style="left:933.45px;top:255px;font-size:11.34px;line-height:14px;letter-spacing:0.379px;color:#6c6f77;font-weight:400;">500 x 375</div>
<div style="position:absolute;left:846px;top:297px;width:318.0px;height:118.6px;background:#fff;border-radius:9px;box-shadow:0 1px 5px rgba(40,50,80,0.05);"></div>
<div class="t" style="left:858.24px;top:311px;font-size:11.34px;line-height:14px;letter-spacing:0.321px;color:#25272d;font-weight:700;-webkit-text-stroke:0;">Labels</div>
<div style="position:absolute;left:858.6px;top:332.7px;width:292.7px;height:31.2px;background:#6c78e9;border-radius:4px 4px 0 0;"></div>
<div class="t" style="left:870.84px;top:341px;font-size:11.34px;line-height:14px;letter-spacing:0.713px;color:#ffffff;font-weight:700;-webkit-text-stroke:0;">Label</div>
<div class="t" style="left:1011.62px;top:341px;font-size:11.34px;line-height:14px;letter-spacing:0.429px;color:#ffffff;font-weight:700;-webkit-text-stroke:0;">Actions</div>
<div style="position:absolute;left:871.5px;top:379.5px;width:7px;height:7px;border-radius:50%;background:#dcb85a;"></div>
<div class="t" style="left:883.67px;top:376px;font-size:11.34px;line-height:14px;letter-spacing:0.961px;color:#6c6f77;font-weight:400;">Particle</div>
<svg style="position:absolute;left:1012px;top:376px" width="19" height="14" viewBox="0 0 19 14"><g fill="none" stroke="#5b5f6a" stroke-width="1.6" stroke-linecap="round" stroke-linejoin="round"><path d="M1.8 7 C3.8 3.6 6.4 2 9.5 2 C12.6 2 15.2 3.6 17.2 7 C15.2 10.4 12.6 12 9.5 12 C6.4 12 3.8 10.4 1.8 7Z"/><circle cx="9.5" cy="7" r="2.4"/></g></svg>
<div style="position:absolute;left:858.6px;top:402.5px;width:292.7px;height:1px;background:#f4f5f7;"></div>
<div style="position:absolute;left:846px;top:429px;width:318.0px;height:197.0px;background:#fff;border-radius:9px;box-shadow:0 1px 5px rgba(40,50,80,0.05);"></div>
<div class="t" style="left:858.53px;top:443px;font-size:11.34px;line-height:14px;letter-spacing:0.591px;color:#25272d;font-weight:700;-webkit-text-stroke:0;">Objects</div>
<div style="position:absolute;left:858.6px;top:465px;width:292.7px;height:31.2px;background:#6c78e9;border-radius:4px 4px 0 0;"></div>
<div class="t" style="left:871.13px;top:473px;font-size:11.34px;line-height:14px;letter-spacing:0.745px;color:#ffffff;font-weight:700;-webkit-text-stroke:0;">Object</div>
<div class="t" style="left:1011.62px;top:473px;font-size:11.34px;line-height:14px;letter-spacing:0.429px;color:#ffffff;font-weight:700;-webkit-text-stroke:0;">Actions</div>
<div style="position:absolute;left:858.6px;top:496.2px;width:292.7px;height:38.8px;background:#eff0f6;"></div>
<div style="position:absolute;left:871.5px;top:512.5px;width:7px;height:7px;border-radius:50%;background:#dcb85a;"></div>
<div class="t" style="left:884.06px;top:509px;font-size:11.34px;line-height:14px;letter-spacing:0.567px;color:#6c6f77;font-weight:400;">Object 1</div>
<svg style="position:absolute;left:1012px;top:509px" width="19" height="14" viewBox="0 0 19 14"><g fill="none" stroke="#5b5f6a" stroke-width="1.6" stroke-linecap="round" stroke-linejoin="round"><path d="M1.8 7 C3.8 3.6 6.4 2 9.5 2 C12.6 2 15.2 3.6 17.2 7 C15.2 10.4 12.6 12 9.5 12 C6.4 12 3.8 10.4 1.8 7Z"/><circle cx="9.5" cy="7" r="2.4"/></g></svg>
<svg style="position:absolute;left:1042px;top:507.5px" width="14" height="15" viewBox="0 0 14 15"><g fill="none" stroke="#5b5f6a" stroke-width="1.6" stroke-linecap="round" stroke-linejoin="round"><path d="M2.2 3.2 H11.8 M4.8 1.2 H9.2 M3.4 3.2 V13.2 H10.6 V3.2"/></g></svg>
<div style="position:absolute;left:871.5px;top:551.2px;width:7px;height:7px;border-radius:50%;background:#dcb85a;"></div>
<div class="t" style="left:884.06px;top:548px;font-size:11.34px;line-height:14px;letter-spacing:0.969px;color:#6c6f77;font-weight:400;">Object 2</div>
<svg style="position:absolute;left:1012px;top:547.7px" width="19" height="14" viewBox="0 0 19 14"><g fill="none" stroke="#5b5f6a" stroke-width="1.6" stroke-linecap="round" stroke-linejoin="round"><path d="M1.8 7 C3.8 3.6 6.4 2 9.5 2 C12.6 2 15.2 3.6 17.2 7 C15.2 10.4 12.6 12 9.5 12 C6.4 12 3.8 10.4 1.8 7Z"/><circle cx="9.5" cy="7" r="2.4"/></g></svg>
<svg style="position:absolute;left:1042px;top:546.2px" width="14" height="15" viewBox="0 0 14 15"><g fill="none" stroke="#5b5f6a" stroke-width="1.6" stroke-linecap="round" stroke-linejoin="round"><path d="M2.2 3.2 H11.8 M4.8 1.2 H9.2 M3.4 3.2 V13.2 H10.6 V3.2"/></g></svg>
<div style="position:absolute;left:858.6px;top:574.2px;width:292.7px;height:1px;background:#f4f5f7;"></div>
<div style="position:absolute;left:871.5px;top:590.3px;width:7px;height:7px;border-radius:50%;background:#dcb85a;"></div>
<div class="t" style="left:884.06px;top:587px;font-size:11.34px;line-height:14px;letter-spacing:0.959px;color:#6c6f77;font-weight:400;">Object 3</div>
<svg style="position:absolute;left:1012px;top:586.8px" width="19" height="14" viewBox="0 0 19 14"><g fill="none" stroke="#5b5f6a" stroke-width="1.6" stroke-linecap="round" stroke-linejoin="round"><path d="M1.8 7 C3.8 3.6 6.4 2 9.5 2 C12.6 2 15.2 3.6 17.2 7 C15.2 10.4 12.6 12 9.5 12 C6.4 12 3.8 10.4 1.8 7Z"/><circle cx="9.5" cy="7" r="2.4"/></g></svg>
<svg style="position:absolute;left:1042px;top:585.3px" width="14" height="15" viewBox="0 0 14 15"><g fill="none" stroke="#5b5f6a" stroke-width="1.6" stroke-linecap="round" stroke-linejoin="round"><path d="M2.2 3.2 H11.8 M4.8 1.2 H9.2 M3.4 3.2 V13.2 H10.6 V3.2"/></g></svg>
<div style="position:absolute;left:858.6px;top:613.3px;width:292.7px;height:1px;background:#f4f5f7;"></div>
<div style="position:absolute;left:845.8px;top:640.2px;width:317.8px;height:133.5px;background:#fff;border-radius:9px;box-shadow:0 1px 5px rgba(40,50,80,0.05);"></div>
<div class="t" style="left:865.42px;top:654px;font-size:11.34px;line-height:14px;letter-spacing:0.440px;color:#25272d;font-weight:700;-webkit-text-stroke:0;">Annotator settings</div>
<svg style="position:absolute;left:867px;top:677px" width="16" height="17" viewBox="0 0 16 17"><path d="M8 2.2 L12.4 7.4 A5.4 5.4 0 1 1 3.6 7.4Z" fill="none" stroke="#5b5f6a" stroke-width="1.5" stroke-linejoin="round"/><path d="M2.7 10.6 H13.3 A5.3 5.3 0 0 1 2.7 10.6Z" fill="#5b5f6a"/></svg>
<div class="t" style="left:887.46px;top:679px;font-size:11.34px;line-height:14px;letter-spacing:1.237px;color:#85888f;font-weight:400;">Opacity</div>
<div style="position:absolute;left:865.7px;top:717.5px;width:272px;height:4px;background:#6c78e9;border-radius:2px;"></div>
<div style="position:absolute;left:1120.5px;top:703.5px;width:32px;height:32px;background:rgba(108,120,233,0.10);border-radius:50%;"></div>
<div style="position:absolute;left:1128.5px;top:711.5px;width:16px;height:16px;background:#6c78e9;border-radius:50%;"></div>
<div class="t" style="left:865.26px;top:746px;font-size:11.34px;line-height:14px;letter-spacing:0.000px;color:#55585f;font-weight:400;">0</div>
<div class="t" style="left:1138.14px;top:746px;font-size:11.34px;line-height:14px;letter-spacing:0.000px;color:#55585f;font-weight:400;">1</div>
<div style="position:absolute;left:846px;top:829px;width:318px;height:10px;overflow:hidden;"><svg style="position:absolute;left:20px;top:0px" width="18" height="18" viewBox="0 0 18 18"><g fill="none" stroke="#5b5f6a" stroke-width="1.4" stroke-linecap="round"><path d="M9 3 V4.6 M3.5 5.5 L4.6 6.6 M14.5 5.5 L13.4 6.6"/><circle cx="9" cy="11" r="3.6"/></g></svg><div class="t" style="left:41.07px;top:4px;font-size:11.34px;line-height:14px;letter-spacing:0.864px;color:#85888f;font-weight:400;">Brightness</div></div>
<div style="position:absolute;left:846px;top:787.4px;width:318.0px;height:42.3px;background:#fff;border-radius:9px;box-shadow:0 1px 5px rgba(40,50,80,0.05);"></div>
<div class="t" style="left:864.94px;top:801px;font-size:11.34px;line-height:14px;letter-spacing:0.603px;color:#25272d;font-weight:700;-webkit-text-stroke:0;">Image settings</div>
<div class="t" style="left:1023.68px;top:801px;font-size:11.34px;line-height:14px;letter-spacing:0.672px;color:#55585f;font-weight:400;">Auto Enhance</div>
<div style="position:absolute;left:1108.8px;top:800px;width:36px;height:17.5px;background:#6c78e9;border-radius:9px;"></div>
<div style="position:absolute;left:1127.5px;top:800.6px;width:15px;height:15px;background:#fff;border:0.8px solid #6c78e9;border-radius:50%;"></div>
</div></body></html>
